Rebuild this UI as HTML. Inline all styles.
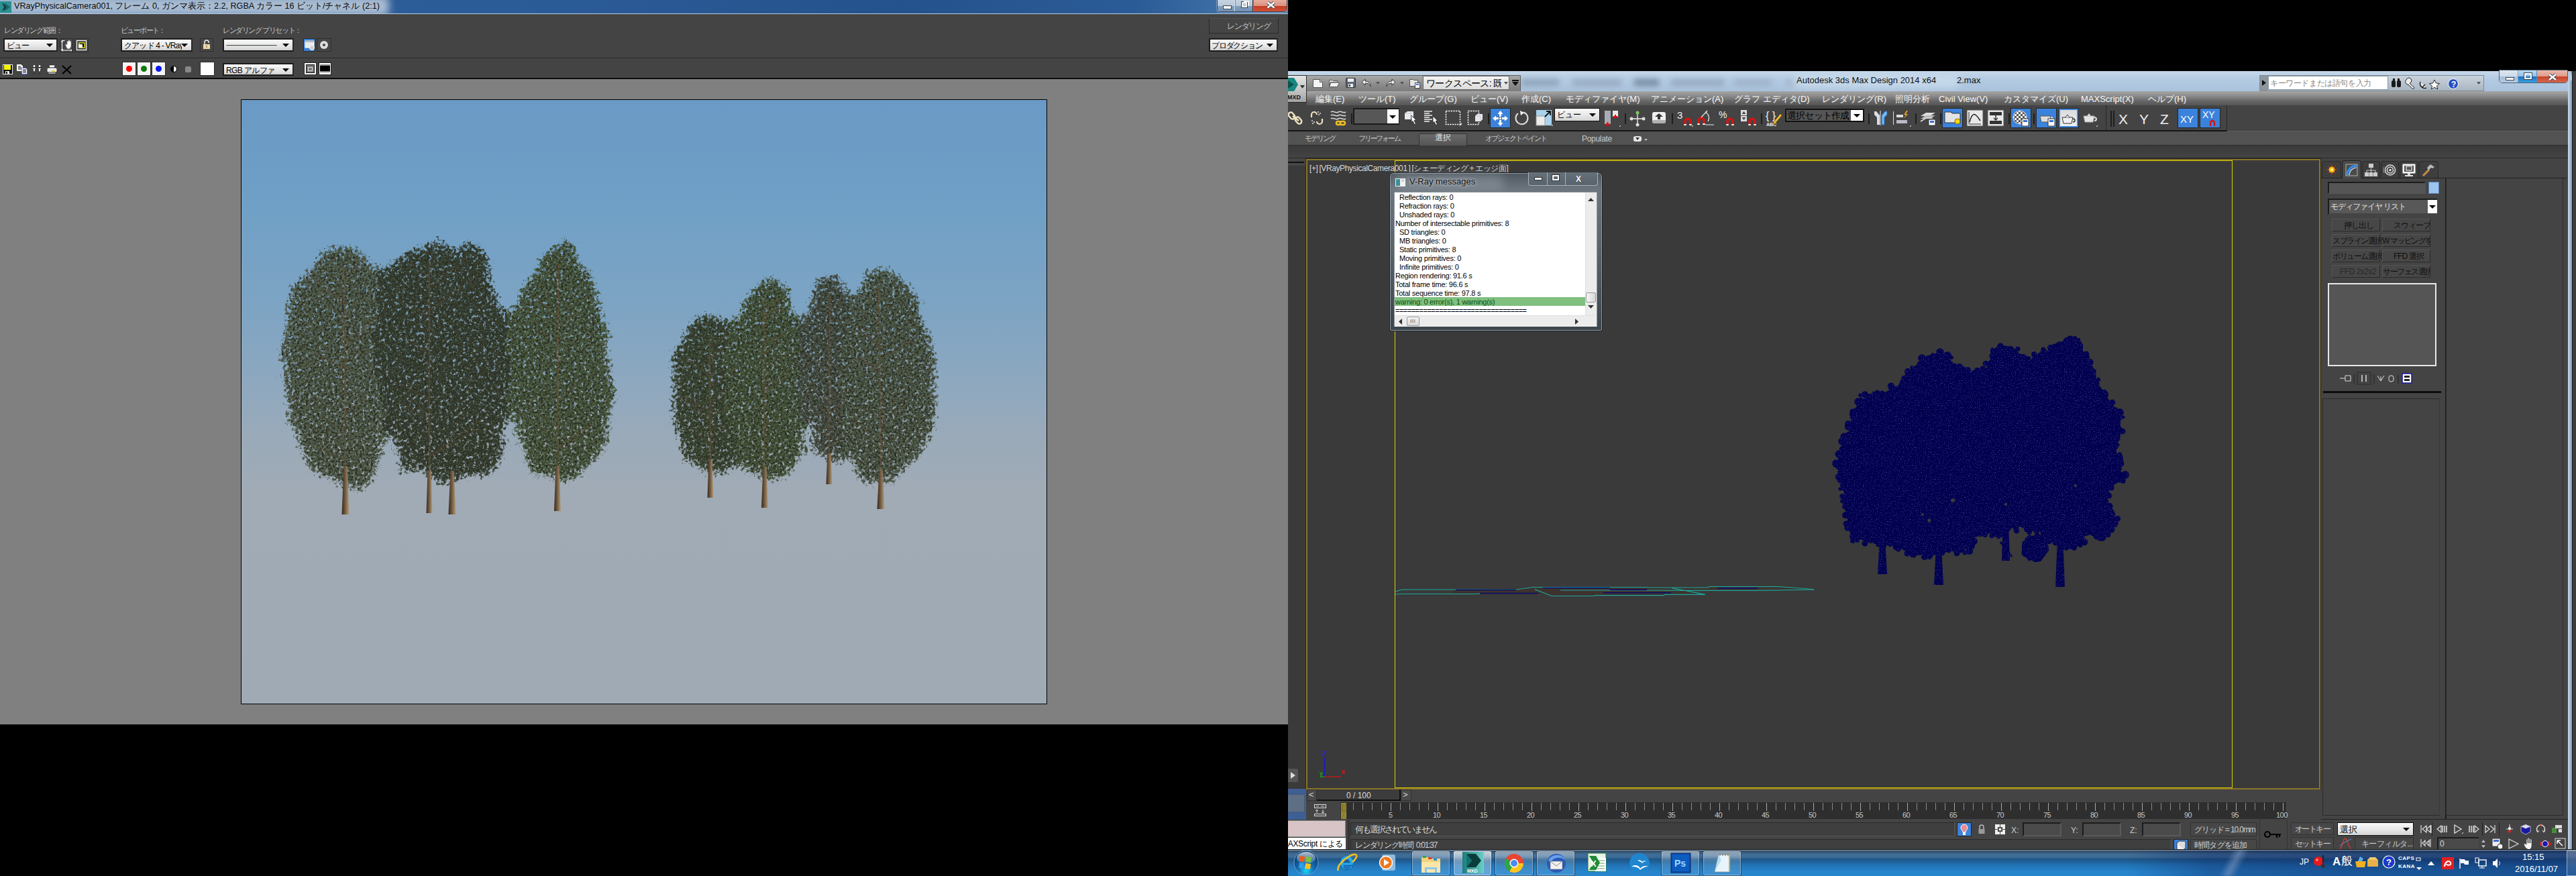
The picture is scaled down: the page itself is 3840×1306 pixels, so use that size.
<!DOCTYPE html>
<html><head><meta charset="utf-8">
<style>
*{margin:0;padding:0;box-sizing:border-box}
html,body{width:3840px;height:1306px;overflow:hidden;background:#000;font-family:"Liberation Sans",sans-serif;}
.a{position:absolute}
.t{position:absolute;white-space:nowrap;line-height:1}
.dd{position:absolute;background:linear-gradient(180deg,#fafafa 0%,#e6e6e6 60%,#d2d2d2 100%);border:2px solid #1c1c1c;border-right-color:#2a2a2a}
.dd i{position:absolute;right:5px;top:50%;margin-top:-2px;width:0;height:0;border-left:5px solid transparent;border-right:5px solid transparent;border-top:5px solid #000}
.btn{position:absolute;border:1px solid #2e2e2e;background:#474747}
svg{position:absolute;overflow:visible}
</style></head><body>
<div class="a" style="left:0;top:0;width:3840px;height:1306px;overflow:hidden">
<!-- ================= LEFT MONITOR : V-Ray frame buffer ================= -->
<div id="L" class="a" style="left:0;top:0;width:1920px;height:1080px;background:#808080;overflow:hidden">
  <!-- title bar -->
  <div class="a" style="left:0;top:0;width:1920px;height:20px;background:linear-gradient(90deg,#2f609b 0%,#2c5c98 40%,#24528d 70%,#2b5b96 88%,#4c7cb0 100%)"></div>
  <div class="a" style="left:-20px;top:-6px;width:600px;height:30px;background:#a9bcd2;filter:blur(6px);border-radius:8px"></div>
  <div class="a" style="left:0;top:20px;width:1920px;height:1px;background:#b9cde0"></div>
  <!-- app icon -->
  <svg style="left:0;top:2px" width="17" height="17" viewBox="0 0 17 17"><rect x="0" y="0" width="17" height="17" fill="#2b8f8f"/><polygon points="3,2 12,8.5 3,15 6,8.5" fill="#0f3e44"/><polygon points="6,2 15,8.5 6,15 9,8.5" fill="#1c5f63"/></svg>
  <div class="t" style="left:21px;top:3px;font-size:12.6px;color:#0a0a0a;letter-spacing:0px">VRayPhysicalCamera001, フレーム 0, ガンマ表示：2.2, RGBA カラー 16 ビット/チャネル (2:1)</div>
  <!-- caption buttons -->
  <div class="a" style="left:1814px;top:-3px;width:105px;height:21px;border:1px solid #2d3e55;border-radius:0 0 5px 5px;overflow:hidden;background:#6d8db3;box-shadow:0 0 0 1px rgba(200,220,240,.5)">
    <div class="a" style="left:0;top:0;width:26px;height:20px;background:linear-gradient(180deg,#c9d6e3 0%,#b7c7d8 55%,#7f9dbd 55%,#7393b6 100%);border-right:1px solid #d8e2ec"></div>
    <div class="a" style="left:27px;top:0;width:26px;height:20px;background:linear-gradient(180deg,#c9d6e3 0%,#b7c7d8 55%,#7f9dbd 55%,#7393b6 100%);border-right:1px solid #3a2a2a"></div>
    <div class="a" style="left:54px;top:0;width:51px;height:20px;background:linear-gradient(180deg,#e9b3a5 0%,#dc8f7c 55%,#c23c22 55%,#d2553a 100%)"></div>
    <div class="a" style="left:8px;top:10px;width:11px;height:4px;background:#f4f4f4;border:1px solid #39475a;box-sizing:content-box"></div>
    <div class="a" style="left:36px;top:5px;width:8px;height:8px;border:2px solid #f4f4f4;outline:1px solid #39475a"></div>
    <div class="a" style="left:39px;top:3px;width:8px;height:8px;border-top:2px solid #f4f4f4;border-right:2px solid #f4f4f4"></div>
    <svg style="left:73px;top:4px" width="13" height="11" viewBox="0 0 13 11"><path d="M1.5 1.5L11.5 9.5M11.5 1.5L1.5 9.5" stroke="#39475a" stroke-width="4.5"/><path d="M1.5 1.5L11.5 9.5M11.5 1.5L1.5 9.5" stroke="#fff" stroke-width="2.6"/></svg>
  </div>

  <!-- toolbar -->
  <div class="a" style="left:0;top:21px;width:1920px;height:95px;background:#444"></div>
  <div class="a" style="left:0;top:86px;width:1920px;height:1px;background:#262626"></div>
  <div class="a" style="left:0;top:87px;width:1920px;height:1px;background:#4a4a4a"></div>
  <div class="a" style="left:0;top:116px;width:1920px;height:2px;background:#0c0c0c"></div>

  <div class="t" style="left:6px;top:40px;font-size:11px;letter-spacing:-1.4px;color:#c4c4c4">レンダリング範囲：</div>
  <div class="t" style="left:180px;top:40px;font-size:11px;letter-spacing:-1.6px;color:#c4c4c4">ビューポート：</div>
  <div class="t" style="left:332px;top:40px;font-size:11px;letter-spacing:-1.4px;color:#c4c4c4">レンダリング プリセット：</div>

  <div class="dd" style="left:5px;top:57px;width:81px;height:20px"><span class="t" style="left:3px;top:3px;font-size:12px;color:#000;letter-spacing:-1px">ビュー</span><i></i></div>
  <div class="btn" style="left:89px;top:57px;width:20px;height:21px"></div>
  <svg style="left:91px;top:59px" width="17" height="17" viewBox="0 0 17 17"><path d="M1.5 2v14M1.5 16H16M0 3.5l1.5-2 1.5 2M0 14.5l1.5 2 1.5-2M2.5 14.5l-1.5 1.5 1.5 1.5M14.5 14.5l1.5 1.5-1.5 1.5M1.5 1.5h4" stroke="#fff" stroke-width="1" fill="none"/><path d="M7 9c-1-2 0-3 1-2l1 1V3a1 1 0 0 1 2 0V1.5a1 1 0 0 1 2 0V3a1 1 0 0 1 2 0v6c0 3-2 5-4 5s-3-2-4-5z" fill="#fff" stroke="#555" stroke-width=".5"/></svg>
  <div class="btn" style="left:111px;top:57px;width:21px;height:21px"></div>
  <svg style="left:113px;top:59px" width="17" height="17" viewBox="0 0 17 17"><rect x="1.5" y="1.5" width="14" height="14" fill="none" stroke="#fff" stroke-width="1.2"/><rect x="5" y="5" width="8" height="7" fill="#000" stroke="#ff0" stroke-width="1.2"/><rect x="4" y="7" width="6" height="5" fill="#fff"/></svg>

  <div class="dd" style="left:180px;top:57px;width:107px;height:20px"><span class="t" style="left:3px;top:3px;font-size:12px;color:#000;letter-spacing:-0.8px;width:86px;overflow:hidden">クアッド 4 - VRayPl</span><i></i></div>
  <div class="btn" style="left:298px;top:57px;width:20px;height:20px"></div>
  <svg style="left:302px;top:59px" width="12" height="15" viewBox="0 0 12 15"><path d="M3 7V4a3 3 0 0 1 6 0v1" stroke="#eee" stroke-width="1.5" fill="none"/><rect x="1" y="7" width="10" height="7" fill="#f0d8a8"/><rect x="5.5" y="9" width="1" height="3" fill="#555"/></svg>

  <div class="dd" style="left:332px;top:57px;width:106px;height:20px"><span class="t" style="left:3px;top:2px;font-size:12px;color:#333;letter-spacing:-1px">-------------------------</span><i></i></div>
  <div class="a" style="left:452px;top:57px;width:18px;height:20px;background:#3b7fd6;border:1px solid #2a2a2a"></div>
  <svg style="left:454px;top:60px" width="16" height="15" viewBox="0 0 16 15"><rect x="1" y="1" width="13" height="10" fill="#eaeaea" stroke="#fff"/><rect x="1" y="1" width="13" height="2" fill="#b8b8b8"/><circle cx="11" cy="11" r="3.5" fill="#ccc" stroke="#fff"/></svg>
  <div class="btn" style="left:472px;top:57px;width:22px;height:20px"></div>
  <svg style="left:476px;top:60px" width="14" height="14" viewBox="0 0 14 14"><circle cx="7" cy="7" r="6" fill="#ddd"/><circle cx="7" cy="7" r="2" fill="#444"/></svg>

  <div class="a" style="left:1802px;top:27px;width:104px;height:23px;background:#454545;border:1px solid #2b2b2b;border-top-color:#555"></div>
  <div class="t" style="left:1829px;top:33px;font-size:12px;letter-spacing:-1.2px;color:#bdbdbd">レンダリング</div>
  <div class="dd" style="left:1802px;top:57px;width:103px;height:20px"><span class="t" style="left:2px;top:3px;font-size:12px;color:#000;letter-spacing:-1.2px">プロダクション</span><i></i></div>

  <!-- row 2 icons -->
  <svg style="left:4px;top:96px" width="15" height="15" viewBox="0 0 15 15"><rect x="0.5" y="0.5" width="14" height="14" fill="#111" stroke="#eee"/><rect x="2" y="1" width="10" height="7" fill="#f4f400"/><rect x="4" y="10" width="6" height="4" fill="#eee"/><rect x="5" y="11" width="2" height="3" fill="#111"/></svg>
  <svg style="left:25px;top:96px" width="16" height="15" viewBox="0 0 16 15"><path d="M0.5 0.5h6l2 2v7h-8z" fill="#fff" stroke="#fff"/><path d="M2 3h4M2 5h5M2 7h5" stroke="#111"/><path d="M7.5 5.5h6l2 2v7h-8z" fill="#fff" stroke="#2030ff" stroke-dasharray="1 1"/><path d="M9 8h5M9 10h5M9 12h5" stroke="#111"/></svg>
  <svg style="left:47px;top:96px" width="16" height="15" viewBox="0 0 16 15"><g fill="#fff" stroke="#111" stroke-width=".7"><circle cx="4" cy="2.5" r="2"/><circle cx="12" cy="2.5" r="2"/><path d="M1 5.5h6v1.5H5.5v7.5h-1v-4h-1v4h-1V7H1z"/><path d="M9 5.5h6v1.5h-1.5v7.5h-1v-4h-1v4h-1V7H9z"/></g></svg>
  <svg style="left:69px;top:96px" width="17" height="15" viewBox="0 0 17 15"><path d="M4 1h9l-1 4H5z" fill="#fff" stroke="#222" stroke-width="0.7"/><rect x="1" y="5" width="15" height="7" rx="2" fill="#eee" stroke="#222" stroke-width="0.8"/><rect x="3" y="12" width="11" height="2" fill="#ddd" stroke="#222" stroke-width="0.6"/><rect x="8" y="9" width="5" height="1.5" fill="#e6d400"/></svg>
  <svg style="left:92px;top:97px" width="15" height="14" viewBox="0 0 15 14"><path d="M1 1L14 13M14 1L1 13" stroke="#000" stroke-width="2"/></svg>

  <div class="a" style="left:182px;top:92px;width:21px;height:21px;background:#f4f4f4;border:1px solid #2c2c2c"></div>
  <div class="a" style="left:188px;top:98px;width:9px;height:9px;border-radius:50%;background:#f00"></div>
  <div class="a" style="left:204px;top:92px;width:21px;height:21px;background:#f4f4f4;border:1px solid #2c2c2c"></div>
  <div class="a" style="left:210px;top:98px;width:9px;height:9px;border-radius:50%;background:#0a7a0a"></div>
  <div class="a" style="left:226px;top:92px;width:21px;height:21px;background:#f4f4f4;border:1px solid #2c2c2c"></div>
  <div class="a" style="left:232px;top:98px;width:9px;height:9px;border-radius:50%;background:#0a18f0"></div>
  <div class="a" style="left:254px;top:98px;width:10px;height:10px;border-radius:50%;background:linear-gradient(90deg,#000 50%,#fff 50%);border:1px solid #000"></div>
  <div class="a" style="left:276px;top:99px;width:9px;height:9px;border-radius:2px;background:#888"></div>
  <div class="a" style="left:298px;top:92px;width:22px;height:21px;background:#fff;border:1px solid #2c2c2c"></div>
  <div class="dd" style="left:332px;top:94px;width:106px;height:19px"><span class="t" style="left:3px;top:3px;font-size:12px;color:#000;letter-spacing:-0.6px">RGB アルファ</span><i></i></div>
  <div class="a" style="left:453px;top:93px;width:19px;height:19px;background:#fff;border:1px solid #222"></div>
  <div class="a" style="left:456px;top:96px;width:13px;height:13px;background:#777;border:1px solid #111"></div>
  <div class="a" style="left:459px;top:100px;width:7px;height:6px;border:1px solid #ddd"></div>
  <div class="a" style="left:475px;top:93px;width:19px;height:19px;background:#fff;border:1px solid #222"></div>
  <div class="a" style="left:477px;top:96px;width:15px;height:12px;background:#000;border-top:2px solid #888;border-bottom:2px solid #888"></div>

  <!-- render image frame -->
  <div class="a" style="left:359px;top:148px;width:1202px;height:902px;background:#000"></div>
  <div class="a" style="left:360px;top:149px;width:1200px;height:900px;background:linear-gradient(180deg,#6a9ac5 0%,#70a0c6 18%,#7ea4c3 35%,#8ea8bf 47%,#9aaab9 56%,#a0abb6 64%,#a0aab5 100%)"></div>
</div>
<div class="a" style="left:0;top:0;width:1920px;height:1080px;overflow:hidden"><svg style="left:0;top:0" width="1920" height="1080" viewBox="0 0 1920 1080">
<defs>
<filter id="cr1" filterUnits="userSpaceOnUse" x="360" y="149" width="1200" height="900" color-interpolation-filters="sRGB"><feGaussianBlur in="SourceAlpha" stdDeviation="10" result="b"/><feTurbulence type="fractalNoise" baseFrequency="0.2" numOctaves="3" seed="4" result="n"/><feColorMatrix in="n" type="matrix" values="0 0 0 0 0  0 0 0 0 0  0 0 0 0 0  1 0 0 0 0" result="na"/><feComposite in="b" in2="na" operator="arithmetic" k1="0" k2="4.6" k3="5" k4="-5.9" result="m"/><feComposite in="SourceGraphic" in2="m" operator="in"/></filter>
<filter id="cr2" filterUnits="userSpaceOnUse" x="360" y="149" width="1200" height="900" color-interpolation-filters="sRGB"><feGaussianBlur in="SourceAlpha" stdDeviation="9" result="b"/><feTurbulence type="fractalNoise" baseFrequency="0.3" numOctaves="2" seed="9" result="n"/><feColorMatrix in="n" type="matrix" values="0 0 0 0 0  0 0 0 0 0  0 0 0 0 0  1 0 0 0 0" result="na"/><feComposite in="b" in2="na" operator="arithmetic" k1="0" k2="3.4" k3="5" k4="-5.7" result="m"/><feFlood flood-color="#2b2f24" result="c"/><feComposite in="c" in2="m" operator="in"/></filter>
<filter id="cr3" filterUnits="userSpaceOnUse" x="360" y="149" width="1200" height="900" color-interpolation-filters="sRGB"><feGaussianBlur in="SourceAlpha" stdDeviation="6" result="b"/><feTurbulence type="fractalNoise" baseFrequency="0.6" numOctaves="2" seed="17" result="n"/><feColorMatrix in="n" type="matrix" values="0 0 0 0 0  0 0 0 0 0  0 0 0 0 0  1 0 0 0 0" result="na"/><feComposite in="b" in2="na" operator="arithmetic" k1="0" k2="3" k3="5" k4="-6.2" result="m"/><feFlood flood-color="#7a8464" result="c"/><feComposite in="c" in2="m" operator="in"/></filter>
<filter id="cr4" filterUnits="userSpaceOnUse" x="360" y="149" width="1200" height="900" color-interpolation-filters="sRGB"><feGaussianBlur in="SourceAlpha" stdDeviation="6" result="b"/><feTurbulence type="fractalNoise" baseFrequency="0.7" numOctaves="1" seed="29" result="n"/><feColorMatrix in="n" type="matrix" values="0 0 0 0 0  0 0 0 0 0  0 0 0 0 0  1 0 0 0 0" result="na"/><feComposite in="b" in2="na" operator="arithmetic" k1="0" k2="3" k3="5" k4="-6.4" result="m"/><feFlood flood-color="#8d9aa6" result="c"/><feComposite in="c" in2="m" operator="in"/></filter>
<linearGradient id="trk" x1="0" x2="1"><stop offset="0" stop-color="#3a2a1c"/><stop offset="0.45" stop-color="#6e5840"/><stop offset="1" stop-color="#b39c7a"/></linearGradient>
</defs>
<defs><g id="crw"><g fill="#4d5745"><path d="M488 380L453 400L426 450L416 500L418 550L423 600L438 650L463 700L483 720L542 726L562 700L574 650L584 600L584 550L582 500L577 450L562 400L537 372z"/><circle cx="527" cy="611" r="16.2"/><circle cx="550" cy="708" r="17.1"/><circle cx="514" cy="397" r="14.0"/><circle cx="442" cy="509" r="12.1"/><circle cx="575" cy="562" r="11.6"/><circle cx="498" cy="550" r="11.9"/><circle cx="451" cy="466" r="16.5"/><circle cx="437" cy="625" r="17.8"/><circle cx="510" cy="397" r="14.4"/><circle cx="579" cy="574" r="11.9"/><circle cx="520" cy="412" r="15.0"/><circle cx="540" cy="667" r="12.0"/><circle cx="481" cy="701" r="11.2"/><circle cx="505" cy="699" r="10.6"/><circle cx="507" cy="429" r="9.3"/><circle cx="569" cy="605" r="11.2"/><circle cx="443" cy="430" r="15.7"/><circle cx="526" cy="495" r="13.6"/><circle cx="518" cy="703" r="11.2"/><circle cx="539" cy="527" r="12.7"/><circle cx="541" cy="392" r="11.6"/><circle cx="464" cy="605" r="9.3"/><circle cx="522" cy="512" r="16.8"/><circle cx="534" cy="424" r="10.4"/><circle cx="522" cy="389" r="10.3"/><circle cx="556" cy="695" r="13.3"/><circle cx="476" cy="690" r="12.3"/><circle cx="497" cy="503" r="16.0"/><circle cx="475" cy="692" r="13.3"/><circle cx="538" cy="580" r="10.3"/><circle cx="535" cy="507" r="10.1"/><circle cx="462" cy="466" r="11.9"/><circle cx="527" cy="710" r="12.8"/><circle cx="457" cy="638" r="16.3"/><circle cx="466" cy="422" r="12.6"/><circle cx="438" cy="599" r="16.1"/><circle cx="483" cy="414" r="11.5"/><circle cx="546" cy="706" r="12.6"/><circle cx="561" cy="592" r="10.6"/><circle cx="538" cy="443" r="15.7"/><circle cx="541" cy="586" r="13.5"/><circle cx="500" cy="392" r="17.4"/><circle cx="517" cy="678" r="12.6"/><circle cx="563" cy="674" r="11.1"/><circle cx="463" cy="586" r="15.7"/><circle cx="565" cy="427" r="15.5"/><circle cx="506" cy="661" r="16.2"/><circle cx="433" cy="575" r="13.9"/><circle cx="505" cy="583" r="11.9"/><circle cx="539" cy="475" r="14.6"/><circle cx="479" cy="439" r="14.5"/><circle cx="525" cy="443" r="9.6"/><circle cx="524" cy="521" r="16.8"/><circle cx="576" cy="594" r="16.3"/><circle cx="529" cy="551" r="17.5"/><circle cx="506" cy="622" r="13.2"/><circle cx="457" cy="682" r="9.6"/><circle cx="468" cy="606" r="9.4"/><circle cx="491" cy="581" r="12.6"/><circle cx="484" cy="654" r="12.6"/><circle cx="523" cy="453" r="17.2"/><circle cx="500" cy="385" r="10.6"/><circle cx="495" cy="586" r="10.9"/><circle cx="539" cy="596" r="14.6"/><circle cx="466" cy="586" r="16.4"/><circle cx="469" cy="542" r="13.5"/><circle cx="533" cy="507" r="13.7"/><circle cx="481" cy="694" r="10.5"/><circle cx="467" cy="682" r="15.4"/><circle cx="519" cy="434" r="13.7"/><circle cx="576" cy="505" r="15.7"/><circle cx="508" cy="723" r="10.5"/><circle cx="516" cy="612" r="12.3"/><circle cx="436" cy="439" r="9.7"/><circle cx="574" cy="554" r="17.5"/><circle cx="485" cy="691" r="13.6"/><circle cx="454" cy="616" r="15.4"/><circle cx="493" cy="511" r="12.6"/><circle cx="529" cy="608" r="15.0"/><circle cx="580" cy="592" r="9.9"/><circle cx="521" cy="448" r="12.2"/><circle cx="463" cy="681" r="12.3"/><circle cx="493" cy="577" r="12.6"/><circle cx="569" cy="531" r="17.9"/><circle cx="468" cy="424" r="17.8"/><circle cx="443" cy="503" r="9.0"/><circle cx="492" cy="574" r="17.2"/><circle cx="499" cy="670" r="11.8"/><circle cx="519" cy="684" r="11.2"/><circle cx="504" cy="664" r="14.3"/><circle cx="452" cy="652" r="14.9"/><circle cx="577" cy="526" r="16.5"/><circle cx="503" cy="605" r="10.4"/><circle cx="500" cy="558" r="13.8"/><circle cx="453" cy="612" r="15.1"/><circle cx="522" cy="426" r="11.6"/><circle cx="520" cy="375" r="16.3"/><circle cx="549" cy="438" r="9.9"/><circle cx="444" cy="500" r="12.2"/><circle cx="549" cy="579" r="11.5"/><circle cx="455" cy="513" r="9.3"/><circle cx="450" cy="499" r="11.3"/><circle cx="493" cy="441" r="17.6"/><circle cx="500" cy="487" r="11.0"/><circle cx="524" cy="630" r="14.5"/><circle cx="482" cy="599" r="9.2"/><circle cx="491" cy="541" r="16.8"/><circle cx="484" cy="379" r="11.5"/><circle cx="521" cy="613" r="14.8"/><circle cx="472" cy="586" r="10.0"/><circle cx="530" cy="446" r="13.2"/><circle cx="448" cy="502" r="17.2"/><circle cx="481" cy="466" r="9.2"/><circle cx="573" cy="637" r="10.6"/><circle cx="457" cy="549" r="12.7"/><circle cx="493" cy="554" r="11.6"/><circle cx="558" cy="644" r="17.6"/><circle cx="479" cy="457" r="14.4"/><circle cx="515" cy="610" r="16.8"/><circle cx="536" cy="724" r="17.2"/><circle cx="537" cy="639" r="17.9"/><circle cx="510" cy="635" r="10.9"/><circle cx="468" cy="503" r="17.9"/><circle cx="518" cy="429" r="15.0"/><circle cx="451" cy="536" r="13.5"/><circle cx="550" cy="447" r="10.7"/><circle cx="434" cy="451" r="13.3"/><circle cx="543" cy="676" r="10.9"/><circle cx="468" cy="491" r="13.0"/><circle cx="462" cy="421" r="11.0"/><circle cx="541" cy="422" r="9.3"/><circle cx="547" cy="679" r="11.7"/><circle cx="560" cy="534" r="13.4"/><circle cx="529" cy="568" r="15.9"/><circle cx="489" cy="382" r="17.2"/><circle cx="510" cy="490" r="12.2"/><circle cx="432" cy="531" r="15.5"/><circle cx="525" cy="463" r="9.9"/><circle cx="452" cy="632" r="13.1"/><circle cx="494" cy="689" r="14.4"/><circle cx="481" cy="672" r="15.7"/><circle cx="556" cy="418" r="15.8"/><circle cx="523" cy="409" r="14.6"/><circle cx="546" cy="554" r="10.2"/><circle cx="568" cy="547" r="9.3"/><circle cx="466" cy="698" r="13.7"/><circle cx="480" cy="670" r="11.6"/><circle cx="540" cy="664" r="9.5"/><circle cx="581" cy="585" r="13.6"/><circle cx="500" cy="454" r="15.3"/><circle cx="491" cy="562" r="13.9"/><circle cx="492" cy="380" r="17.6"/><circle cx="524" cy="514" r="13.0"/><circle cx="496" cy="627" r="14.3"/><circle cx="558" cy="454" r="16.7"/><circle cx="554" cy="671" r="16.0"/><circle cx="457" cy="637" r="12.1"/><circle cx="523" cy="377" r="11.4"/><circle cx="494" cy="478" r="17.7"/><circle cx="452" cy="443" r="9.1"/><circle cx="463" cy="426" r="14.0"/><circle cx="445" cy="600" r="14.7"/><circle cx="472" cy="416" r="15.3"/><circle cx="496" cy="378" r="16.0"/><circle cx="491" cy="573" r="11.2"/><circle cx="531" cy="651" r="17.4"/><circle cx="565" cy="660" r="12.6"/><circle cx="554" cy="657" r="15.2"/><circle cx="427" cy="520" r="14.2"/><circle cx="497" cy="515" r="16.3"/><circle cx="530" cy="385" r="14.8"/><circle cx="465" cy="463" r="13.2"/><circle cx="492" cy="664" r="11.6"/><circle cx="569" cy="546" r="11.4"/><circle cx="514" cy="476" r="10.0"/><circle cx="444" cy="544" r="16.4"/><circle cx="489" cy="627" r="11.8"/><circle cx="561" cy="467" r="15.1"/><circle cx="535" cy="389" r="15.7"/><circle cx="579" cy="553" r="10.0"/><circle cx="533" cy="449" r="16.9"/><circle cx="518" cy="389" r="14.6"/><circle cx="424" cy="526" r="15.9"/><circle cx="454" cy="550" r="10.5"/><circle cx="444" cy="431" r="17.7"/><circle cx="566" cy="646" r="16.7"/><circle cx="553" cy="460" r="12.2"/><circle cx="556" cy="439" r="15.3"/><circle cx="455" cy="436" r="12.3"/><circle cx="523" cy="502" r="17.1"/><circle cx="530" cy="474" r="15.8"/><circle cx="441" cy="632" r="9.7"/><circle cx="514" cy="627" r="11.7"/><circle cx="534" cy="663" r="16.0"/><circle cx="537" cy="382" r="14.2"/><circle cx="539" cy="447" r="17.9"/><circle cx="429" cy="454" r="10.1"/><circle cx="457" cy="446" r="12.4"/><circle cx="460" cy="602" r="15.0"/><circle cx="489" cy="431" r="17.1"/><circle cx="514" cy="701" r="15.9"/><circle cx="529" cy="389" r="15.4"/><circle cx="500" cy="431" r="10.0"/><circle cx="475" cy="398" r="11.9"/><circle cx="561" cy="578" r="14.9"/><circle cx="568" cy="475" r="15.9"/><circle cx="422" cy="568" r="11.5"/><circle cx="559" cy="517" r="16.1"/><circle cx="560" cy="536" r="17.2"/><circle cx="505" cy="466" r="12.1"/><circle cx="458" cy="603" r="14.7"/><circle cx="543" cy="429" r="9.8"/><circle cx="448" cy="429" r="17.7"/><circle cx="507" cy="651" r="15.2"/><circle cx="495" cy="387" r="9.3"/><circle cx="447" cy="614" r="11.1"/><circle cx="516" cy="486" r="15.5"/><circle cx="536" cy="442" r="10.6"/><circle cx="537" cy="518" r="11.9"/><circle cx="467" cy="508" r="16.2"/><circle cx="493" cy="700" r="9.4"/><circle cx="540" cy="453" r="16.4"/><circle cx="518" cy="439" r="17.6"/><circle cx="533" cy="691" r="13.2"/><circle cx="533" cy="703" r="10.7"/><circle cx="480" cy="527" r="9.5"/><circle cx="509" cy="544" r="17.1"/><circle cx="541" cy="692" r="17.4"/><circle cx="464" cy="694" r="14.5"/><circle cx="508" cy="643" r="17.9"/><circle cx="563" cy="628" r="9.0"/><circle cx="557" cy="681" r="17.9"/><circle cx="560" cy="404" r="12.7"/><circle cx="508" cy="678" r="16.1"/><circle cx="522" cy="466" r="14.1"/><circle cx="543" cy="716" r="11.7"/><circle cx="523" cy="422" r="17.3"/><circle cx="485" cy="570" r="15.9"/><circle cx="507" cy="636" r="12.3"/><circle cx="549" cy="695" r="14.8"/><circle cx="503" cy="535" r="13.3"/><circle cx="469" cy="458" r="14.0"/><circle cx="477" cy="441" r="14.1"/><circle cx="490" cy="581" r="13.4"/><circle cx="554" cy="453" r="17.1"/><circle cx="508" cy="444" r="10.6"/><circle cx="548" cy="712" r="10.5"/><circle cx="500" cy="438" r="16.5"/><circle cx="503" cy="583" r="11.4"/><circle cx="540" cy="403" r="14.4"/><circle cx="518" cy="694" r="16.6"/><circle cx="480" cy="394" r="17.9"/><circle cx="512" cy="376" r="15.9"/><circle cx="524" cy="655" r="14.7"/><circle cx="553" cy="619" r="18.0"/><circle cx="448" cy="512" r="14.6"/><circle cx="566" cy="440" r="15.4"/><circle cx="524" cy="520" r="17.0"/><circle cx="525" cy="464" r="15.5"/><circle cx="538" cy="513" r="11.5"/><circle cx="465" cy="454" r="15.0"/><circle cx="514" cy="712" r="13.8"/><circle cx="562" cy="465" r="10.4"/><circle cx="528" cy="678" r="9.9"/><circle cx="520" cy="693" r="10.5"/><circle cx="565" cy="484" r="13.7"/><circle cx="430" cy="586" r="9.3"/><circle cx="514" cy="610" r="16.4"/><circle cx="487" cy="437" r="17.6"/><circle cx="573" cy="479" r="16.1"/><circle cx="490" cy="424" r="17.4"/><circle cx="552" cy="594" r="10.5"/><circle cx="527" cy="508" r="10.1"/><circle cx="443" cy="600" r="16.5"/><circle cx="545" cy="719" r="9.4"/><circle cx="494" cy="655" r="12.0"/><circle cx="550" cy="631" r="11.5"/><circle cx="539" cy="696" r="9.5"/><circle cx="478" cy="696" r="14.2"/><circle cx="558" cy="555" r="9.8"/><circle cx="492" cy="534" r="12.7"/><circle cx="520" cy="542" r="11.5"/><circle cx="546" cy="392" r="11.2"/><circle cx="515" cy="645" r="15.7"/><circle cx="512" cy="457" r="11.4"/><circle cx="573" cy="570" r="11.1"/><circle cx="560" cy="633" r="12.9"/><circle cx="541" cy="687" r="16.9"/><circle cx="467" cy="483" r="16.6"/><circle cx="452" cy="664" r="15.2"/><circle cx="438" cy="595" r="17.8"/><circle cx="524" cy="414" r="13.5"/><circle cx="488" cy="485" r="16.6"/><circle cx="431" cy="510" r="13.7"/><circle cx="539" cy="673" r="10.6"/><circle cx="498" cy="399" r="12.3"/></g><g fill="#343c2e"><path d="M628 372L573 400L566 450L564 500L568 550L573 600L583 650L598 700L633 710L722 716L742 700L754 650L757 600L762 550L757 500L742 450L737 400L707 364z"/><circle cx="709" cy="376" r="13.4"/><circle cx="654" cy="500" r="17.5"/><circle cx="729" cy="630" r="9.7"/><circle cx="630" cy="651" r="15.2"/><circle cx="573" cy="476" r="10.7"/><circle cx="680" cy="702" r="17.1"/><circle cx="614" cy="655" r="13.6"/><circle cx="577" cy="581" r="11.0"/><circle cx="677" cy="393" r="12.9"/><circle cx="639" cy="395" r="13.7"/><circle cx="584" cy="531" r="17.2"/><circle cx="654" cy="705" r="15.6"/><circle cx="570" cy="552" r="12.0"/><circle cx="690" cy="645" r="15.4"/><circle cx="567" cy="503" r="14.2"/><circle cx="701" cy="369" r="17.8"/><circle cx="704" cy="389" r="10.6"/><circle cx="667" cy="413" r="17.2"/><circle cx="725" cy="532" r="14.7"/><circle cx="651" cy="435" r="12.3"/><circle cx="679" cy="382" r="10.3"/><circle cx="618" cy="464" r="15.0"/><circle cx="728" cy="491" r="12.3"/><circle cx="731" cy="575" r="16.9"/><circle cx="715" cy="671" r="9.3"/><circle cx="661" cy="450" r="11.3"/><circle cx="685" cy="659" r="11.0"/><circle cx="703" cy="483" r="14.0"/><circle cx="657" cy="381" r="9.3"/><circle cx="730" cy="538" r="12.8"/><circle cx="645" cy="418" r="17.7"/><circle cx="671" cy="605" r="11.1"/><circle cx="661" cy="713" r="13.9"/><circle cx="655" cy="406" r="14.0"/><circle cx="589" cy="476" r="12.8"/><circle cx="640" cy="680" r="11.4"/><circle cx="640" cy="654" r="10.7"/><circle cx="652" cy="527" r="14.7"/><circle cx="660" cy="710" r="16.7"/><circle cx="694" cy="653" r="11.0"/><circle cx="612" cy="430" r="14.4"/><circle cx="590" cy="580" r="16.7"/><circle cx="596" cy="424" r="12.2"/><circle cx="623" cy="521" r="14.1"/><circle cx="653" cy="683" r="16.8"/><circle cx="622" cy="475" r="10.8"/><circle cx="582" cy="580" r="11.0"/><circle cx="664" cy="478" r="11.7"/><circle cx="599" cy="478" r="14.7"/><circle cx="658" cy="631" r="12.5"/><circle cx="698" cy="644" r="16.5"/><circle cx="619" cy="619" r="9.3"/><circle cx="750" cy="601" r="12.9"/><circle cx="611" cy="604" r="10.4"/><circle cx="715" cy="520" r="14.1"/><circle cx="582" cy="603" r="12.7"/><circle cx="681" cy="534" r="12.9"/><circle cx="575" cy="413" r="14.9"/><circle cx="688" cy="385" r="15.6"/><circle cx="701" cy="409" r="10.8"/><circle cx="722" cy="687" r="15.8"/><circle cx="648" cy="545" r="11.7"/><circle cx="683" cy="618" r="9.6"/><circle cx="654" cy="634" r="13.9"/><circle cx="629" cy="695" r="9.4"/><circle cx="659" cy="382" r="11.7"/><circle cx="629" cy="607" r="16.6"/><circle cx="646" cy="617" r="13.8"/><circle cx="683" cy="586" r="17.2"/><circle cx="637" cy="377" r="11.0"/><circle cx="737" cy="513" r="9.9"/><circle cx="654" cy="367" r="17.9"/><circle cx="724" cy="704" r="9.1"/><circle cx="632" cy="608" r="10.3"/><circle cx="597" cy="408" r="12.5"/><circle cx="620" cy="385" r="10.3"/><circle cx="719" cy="525" r="14.8"/><circle cx="677" cy="543" r="11.3"/><circle cx="705" cy="420" r="9.3"/><circle cx="699" cy="390" r="9.7"/><circle cx="717" cy="591" r="17.1"/><circle cx="654" cy="440" r="11.1"/><circle cx="638" cy="692" r="10.6"/><circle cx="731" cy="661" r="10.6"/><circle cx="577" cy="417" r="14.5"/><circle cx="634" cy="670" r="16.1"/><circle cx="649" cy="501" r="12.5"/><circle cx="713" cy="420" r="14.7"/><circle cx="718" cy="662" r="9.8"/><circle cx="593" cy="523" r="15.5"/><circle cx="741" cy="563" r="16.6"/><circle cx="608" cy="582" r="11.4"/><circle cx="615" cy="590" r="9.9"/><circle cx="745" cy="590" r="14.6"/><circle cx="677" cy="684" r="15.8"/><circle cx="659" cy="480" r="13.6"/><circle cx="659" cy="714" r="16.5"/><circle cx="602" cy="699" r="16.2"/><circle cx="728" cy="619" r="14.6"/><circle cx="749" cy="524" r="17.2"/><circle cx="739" cy="518" r="17.9"/><circle cx="721" cy="545" r="16.8"/><circle cx="618" cy="433" r="16.2"/><circle cx="631" cy="686" r="10.3"/><circle cx="705" cy="417" r="11.7"/><circle cx="656" cy="429" r="12.5"/><circle cx="615" cy="684" r="15.8"/><circle cx="583" cy="450" r="14.1"/><circle cx="648" cy="402" r="10.5"/><circle cx="710" cy="690" r="14.3"/><circle cx="597" cy="599" r="13.4"/><circle cx="678" cy="378" r="9.4"/><circle cx="575" cy="550" r="17.3"/><circle cx="703" cy="643" r="10.7"/><circle cx="698" cy="466" r="14.4"/><circle cx="713" cy="690" r="15.3"/><circle cx="644" cy="554" r="11.9"/><circle cx="684" cy="548" r="12.4"/><circle cx="651" cy="606" r="17.0"/><circle cx="622" cy="495" r="14.4"/><circle cx="721" cy="708" r="11.9"/><circle cx="644" cy="524" r="15.3"/><circle cx="587" cy="392" r="11.1"/><circle cx="666" cy="649" r="9.7"/><circle cx="743" cy="615" r="14.9"/><circle cx="657" cy="687" r="12.6"/><circle cx="720" cy="655" r="15.0"/><circle cx="593" cy="416" r="17.5"/><circle cx="710" cy="434" r="17.4"/><circle cx="618" cy="582" r="13.5"/><circle cx="589" cy="615" r="9.3"/><circle cx="572" cy="443" r="12.4"/><circle cx="698" cy="666" r="11.9"/><circle cx="612" cy="645" r="16.1"/><circle cx="724" cy="388" r="12.9"/><circle cx="703" cy="368" r="10.4"/><circle cx="725" cy="404" r="13.4"/><circle cx="590" cy="396" r="14.4"/><circle cx="599" cy="522" r="11.5"/><circle cx="706" cy="699" r="11.0"/><circle cx="720" cy="686" r="15.6"/><circle cx="651" cy="471" r="15.7"/><circle cx="668" cy="448" r="9.6"/><circle cx="701" cy="518" r="13.4"/><circle cx="696" cy="531" r="14.0"/><circle cx="678" cy="593" r="14.5"/><circle cx="717" cy="491" r="16.3"/><circle cx="664" cy="656" r="11.4"/><circle cx="664" cy="587" r="14.1"/><circle cx="626" cy="379" r="17.2"/><circle cx="725" cy="573" r="13.8"/><circle cx="661" cy="472" r="12.6"/><circle cx="676" cy="556" r="9.8"/><circle cx="685" cy="501" r="17.0"/><circle cx="723" cy="538" r="12.4"/><circle cx="606" cy="571" r="10.6"/><circle cx="640" cy="497" r="15.7"/><circle cx="635" cy="393" r="14.6"/><circle cx="730" cy="515" r="14.2"/><circle cx="590" cy="426" r="9.5"/><circle cx="759" cy="551" r="9.8"/><circle cx="745" cy="504" r="11.0"/><circle cx="720" cy="638" r="11.2"/><circle cx="617" cy="655" r="9.5"/><circle cx="594" cy="581" r="12.2"/><circle cx="723" cy="677" r="15.3"/><circle cx="724" cy="391" r="13.2"/><circle cx="647" cy="706" r="14.0"/><circle cx="695" cy="427" r="12.4"/><circle cx="693" cy="530" r="9.5"/><circle cx="743" cy="687" r="10.2"/><circle cx="656" cy="464" r="15.7"/><circle cx="734" cy="444" r="15.3"/><circle cx="674" cy="419" r="16.5"/><circle cx="635" cy="598" r="15.8"/><circle cx="733" cy="648" r="12.4"/><circle cx="581" cy="458" r="16.8"/><circle cx="659" cy="673" r="9.5"/><circle cx="602" cy="527" r="17.7"/><circle cx="585" cy="634" r="14.5"/><circle cx="698" cy="428" r="13.7"/><circle cx="668" cy="629" r="17.1"/><circle cx="688" cy="528" r="17.1"/><circle cx="649" cy="415" r="14.6"/><circle cx="594" cy="570" r="15.1"/><circle cx="633" cy="382" r="10.0"/><circle cx="709" cy="619" r="12.1"/><circle cx="701" cy="590" r="16.8"/><circle cx="596" cy="635" r="12.4"/><circle cx="730" cy="634" r="10.1"/><circle cx="744" cy="485" r="16.1"/><circle cx="682" cy="701" r="11.9"/><circle cx="715" cy="686" r="14.7"/><circle cx="606" cy="382" r="14.5"/><circle cx="683" cy="606" r="10.1"/><circle cx="739" cy="485" r="14.7"/><circle cx="707" cy="513" r="16.8"/><circle cx="667" cy="453" r="10.8"/><circle cx="738" cy="624" r="15.8"/><circle cx="613" cy="656" r="10.0"/><circle cx="603" cy="480" r="17.9"/><circle cx="632" cy="689" r="12.2"/><circle cx="637" cy="503" r="11.4"/><circle cx="597" cy="562" r="14.6"/><circle cx="638" cy="574" r="9.9"/><circle cx="735" cy="692" r="16.3"/><circle cx="636" cy="568" r="14.4"/><circle cx="670" cy="442" r="15.5"/><circle cx="698" cy="389" r="11.1"/><circle cx="628" cy="677" r="14.9"/><circle cx="624" cy="640" r="17.0"/><circle cx="682" cy="626" r="15.7"/><circle cx="749" cy="585" r="9.6"/><circle cx="615" cy="669" r="13.0"/><circle cx="613" cy="438" r="16.6"/><circle cx="742" cy="485" r="9.3"/><circle cx="695" cy="444" r="14.6"/><circle cx="624" cy="596" r="12.7"/><circle cx="734" cy="579" r="11.6"/><circle cx="658" cy="630" r="10.3"/><circle cx="739" cy="684" r="10.0"/><circle cx="617" cy="654" r="17.3"/><circle cx="594" cy="632" r="12.7"/><circle cx="680" cy="680" r="9.3"/><circle cx="708" cy="559" r="11.3"/><circle cx="754" cy="533" r="17.7"/><circle cx="660" cy="458" r="17.2"/><circle cx="663" cy="481" r="12.9"/><circle cx="744" cy="628" r="15.3"/><circle cx="712" cy="596" r="11.1"/><circle cx="632" cy="628" r="14.5"/><circle cx="654" cy="456" r="9.0"/><circle cx="590" cy="566" r="17.3"/><circle cx="731" cy="619" r="15.3"/><circle cx="674" cy="636" r="16.0"/><circle cx="617" cy="517" r="12.1"/><circle cx="674" cy="614" r="15.1"/><circle cx="690" cy="411" r="17.9"/><circle cx="710" cy="624" r="13.7"/><circle cx="651" cy="643" r="17.1"/><circle cx="592" cy="570" r="12.0"/><circle cx="640" cy="368" r="11.2"/><circle cx="630" cy="492" r="17.1"/><circle cx="700" cy="642" r="12.4"/><circle cx="631" cy="572" r="17.3"/><circle cx="659" cy="395" r="17.7"/><circle cx="731" cy="579" r="13.7"/><circle cx="707" cy="417" r="11.9"/><circle cx="748" cy="474" r="9.9"/><circle cx="579" cy="478" r="15.1"/><circle cx="642" cy="481" r="17.5"/><circle cx="622" cy="570" r="11.4"/><circle cx="600" cy="616" r="15.8"/><circle cx="595" cy="428" r="13.8"/><circle cx="651" cy="472" r="9.2"/><circle cx="731" cy="639" r="14.6"/><circle cx="653" cy="389" r="15.9"/><circle cx="620" cy="549" r="10.8"/><circle cx="612" cy="692" r="13.6"/><circle cx="627" cy="542" r="10.6"/><circle cx="614" cy="506" r="16.8"/><circle cx="616" cy="615" r="10.1"/><circle cx="642" cy="437" r="12.8"/><circle cx="590" cy="427" r="12.3"/><circle cx="688" cy="394" r="14.2"/><circle cx="629" cy="632" r="16.7"/><circle cx="740" cy="465" r="15.0"/><circle cx="601" cy="609" r="11.9"/><circle cx="656" cy="676" r="13.1"/><circle cx="633" cy="408" r="13.1"/><circle cx="653" cy="483" r="10.3"/><circle cx="641" cy="501" r="16.5"/><circle cx="730" cy="587" r="15.6"/><circle cx="710" cy="506" r="15.9"/><circle cx="747" cy="665" r="14.7"/><circle cx="682" cy="626" r="11.5"/><circle cx="721" cy="391" r="11.7"/><circle cx="628" cy="488" r="15.9"/><circle cx="598" cy="611" r="17.0"/><circle cx="651" cy="460" r="9.7"/><circle cx="708" cy="436" r="13.5"/><circle cx="601" cy="667" r="17.9"/><circle cx="625" cy="656" r="14.3"/><circle cx="634" cy="663" r="16.2"/><circle cx="645" cy="377" r="17.6"/><circle cx="726" cy="443" r="10.2"/><circle cx="674" cy="678" r="10.1"/><circle cx="706" cy="492" r="11.5"/><circle cx="716" cy="423" r="10.0"/><circle cx="738" cy="687" r="12.7"/><circle cx="639" cy="621" r="17.1"/><circle cx="716" cy="640" r="13.2"/><circle cx="656" cy="689" r="9.8"/><circle cx="738" cy="477" r="15.4"/><circle cx="666" cy="707" r="16.3"/><circle cx="582" cy="413" r="17.7"/><circle cx="699" cy="552" r="14.1"/><circle cx="673" cy="709" r="17.5"/><circle cx="685" cy="380" r="11.1"/><circle cx="634" cy="674" r="11.1"/><circle cx="716" cy="394" r="12.4"/><circle cx="579" cy="461" r="14.4"/><circle cx="607" cy="620" r="13.2"/><circle cx="681" cy="567" r="12.6"/><circle cx="734" cy="553" r="11.4"/><circle cx="713" cy="373" r="12.9"/><circle cx="673" cy="510" r="9.2"/><circle cx="747" cy="586" r="14.2"/><circle cx="729" cy="591" r="10.4"/><circle cx="645" cy="390" r="11.3"/><circle cx="646" cy="401" r="17.6"/><circle cx="590" cy="575" r="11.3"/><circle cx="696" cy="373" r="15.6"/><circle cx="624" cy="647" r="17.0"/><circle cx="717" cy="377" r="11.0"/><circle cx="676" cy="686" r="13.4"/><circle cx="647" cy="370" r="14.6"/><circle cx="643" cy="614" r="11.1"/><circle cx="716" cy="668" r="9.7"/><circle cx="685" cy="558" r="11.4"/><circle cx="668" cy="657" r="12.5"/><circle cx="682" cy="630" r="9.1"/><circle cx="618" cy="549" r="10.3"/><circle cx="696" cy="460" r="17.7"/><circle cx="616" cy="660" r="13.7"/><circle cx="606" cy="559" r="14.2"/><circle cx="690" cy="500" r="13.8"/><circle cx="662" cy="443" r="16.2"/><circle cx="728" cy="466" r="13.6"/><circle cx="729" cy="564" r="13.4"/><circle cx="716" cy="451" r="15.6"/><circle cx="702" cy="695" r="15.8"/><circle cx="674" cy="544" r="13.8"/><circle cx="635" cy="496" r="13.2"/><circle cx="640" cy="554" r="17.5"/><circle cx="625" cy="650" r="16.8"/><circle cx="619" cy="487" r="11.2"/><circle cx="656" cy="590" r="13.1"/><circle cx="645" cy="639" r="15.9"/><circle cx="688" cy="392" r="11.4"/><circle cx="704" cy="527" r="10.7"/><circle cx="699" cy="447" r="16.4"/><circle cx="745" cy="537" r="11.8"/><circle cx="678" cy="426" r="12.5"/><circle cx="727" cy="434" r="11.2"/><circle cx="717" cy="506" r="16.8"/><circle cx="708" cy="580" r="16.2"/><circle cx="619" cy="616" r="9.1"/><circle cx="685" cy="706" r="17.2"/><circle cx="696" cy="613" r="16.6"/><circle cx="733" cy="698" r="13.2"/><circle cx="634" cy="547" r="11.1"/><circle cx="678" cy="410" r="14.0"/><circle cx="597" cy="658" r="9.1"/><circle cx="571" cy="527" r="12.5"/><circle cx="641" cy="473" r="17.9"/><circle cx="575" cy="556" r="10.4"/><circle cx="626" cy="676" r="12.2"/><circle cx="611" cy="681" r="17.8"/></g><g fill="#46553a"><path d="M816 375L798 400L773 430L763 500L760 550L763 600L773 650L788 700L808 708L862 714L882 700L912 650L919 600L917 550L907 500L897 430L874 400L852 367z"/><circle cx="838" cy="392" r="16.4"/><circle cx="911" cy="579" r="14.5"/><circle cx="866" cy="472" r="14.1"/><circle cx="775" cy="605" r="17.2"/><circle cx="816" cy="643" r="9.3"/><circle cx="886" cy="489" r="16.2"/><circle cx="864" cy="559" r="14.0"/><circle cx="832" cy="376" r="12.3"/><circle cx="823" cy="384" r="11.8"/><circle cx="824" cy="412" r="10.7"/><circle cx="814" cy="596" r="16.7"/><circle cx="789" cy="640" r="15.4"/><circle cx="793" cy="436" r="16.9"/><circle cx="886" cy="584" r="14.3"/><circle cx="793" cy="636" r="16.4"/><circle cx="865" cy="618" r="17.1"/><circle cx="832" cy="699" r="9.7"/><circle cx="822" cy="703" r="11.7"/><circle cx="826" cy="469" r="12.4"/><circle cx="838" cy="542" r="11.3"/><circle cx="811" cy="690" r="12.1"/><circle cx="866" cy="685" r="15.4"/><circle cx="818" cy="685" r="17.9"/><circle cx="839" cy="367" r="15.6"/><circle cx="876" cy="502" r="17.1"/><circle cx="827" cy="565" r="14.5"/><circle cx="863" cy="431" r="11.6"/><circle cx="861" cy="539" r="13.7"/><circle cx="795" cy="692" r="10.1"/><circle cx="852" cy="634" r="11.0"/><circle cx="859" cy="543" r="15.0"/><circle cx="896" cy="506" r="14.4"/><circle cx="871" cy="659" r="13.1"/><circle cx="773" cy="468" r="17.3"/><circle cx="900" cy="564" r="15.9"/><circle cx="855" cy="555" r="13.6"/><circle cx="861" cy="630" r="12.4"/><circle cx="779" cy="455" r="9.7"/><circle cx="791" cy="429" r="12.7"/><circle cx="826" cy="638" r="15.2"/><circle cx="879" cy="429" r="12.7"/><circle cx="827" cy="657" r="15.2"/><circle cx="821" cy="657" r="13.6"/><circle cx="791" cy="679" r="15.0"/><circle cx="852" cy="391" r="13.3"/><circle cx="784" cy="519" r="13.8"/><circle cx="819" cy="577" r="12.7"/><circle cx="875" cy="440" r="14.3"/><circle cx="847" cy="552" r="14.5"/><circle cx="771" cy="613" r="15.3"/><circle cx="798" cy="702" r="13.4"/><circle cx="823" cy="618" r="15.8"/><circle cx="877" cy="575" r="9.4"/><circle cx="837" cy="601" r="16.3"/><circle cx="786" cy="686" r="12.7"/><circle cx="816" cy="398" r="11.9"/><circle cx="854" cy="447" r="9.8"/><circle cx="823" cy="675" r="17.4"/><circle cx="853" cy="540" r="13.7"/><circle cx="772" cy="620" r="12.9"/><circle cx="860" cy="477" r="9.1"/><circle cx="850" cy="703" r="14.2"/><circle cx="791" cy="564" r="17.8"/><circle cx="833" cy="565" r="12.0"/><circle cx="815" cy="442" r="16.0"/><circle cx="776" cy="460" r="16.7"/><circle cx="854" cy="432" r="17.4"/><circle cx="857" cy="437" r="10.2"/><circle cx="896" cy="656" r="18.0"/><circle cx="884" cy="628" r="9.8"/><circle cx="768" cy="519" r="13.8"/><circle cx="840" cy="372" r="13.7"/><circle cx="782" cy="461" r="17.7"/><circle cx="794" cy="671" r="17.4"/><circle cx="833" cy="655" r="14.5"/><circle cx="897" cy="519" r="13.9"/><circle cx="836" cy="630" r="13.3"/><circle cx="877" cy="428" r="13.9"/><circle cx="833" cy="587" r="14.4"/><circle cx="836" cy="709" r="16.7"/><circle cx="805" cy="597" r="16.3"/><circle cx="881" cy="585" r="11.6"/><circle cx="859" cy="473" r="17.7"/><circle cx="851" cy="550" r="14.1"/><circle cx="829" cy="460" r="9.2"/><circle cx="797" cy="469" r="13.2"/><circle cx="821" cy="439" r="17.8"/><circle cx="781" cy="627" r="10.3"/><circle cx="886" cy="607" r="12.9"/><circle cx="838" cy="374" r="13.5"/><circle cx="798" cy="444" r="15.4"/><circle cx="798" cy="405" r="10.4"/><circle cx="791" cy="507" r="16.1"/><circle cx="798" cy="465" r="12.0"/><circle cx="797" cy="669" r="16.5"/><circle cx="770" cy="596" r="17.2"/><circle cx="809" cy="507" r="9.2"/><circle cx="810" cy="410" r="13.1"/><circle cx="781" cy="622" r="12.4"/><circle cx="876" cy="559" r="13.1"/><circle cx="825" cy="625" r="11.2"/><circle cx="849" cy="617" r="17.7"/><circle cx="830" cy="579" r="12.0"/><circle cx="807" cy="477" r="13.5"/><circle cx="778" cy="479" r="9.3"/><circle cx="895" cy="668" r="12.1"/><circle cx="885" cy="452" r="12.3"/><circle cx="876" cy="521" r="15.1"/><circle cx="765" cy="501" r="10.8"/><circle cx="873" cy="666" r="14.2"/><circle cx="841" cy="708" r="16.8"/><circle cx="835" cy="406" r="14.2"/><circle cx="823" cy="402" r="9.2"/><circle cx="901" cy="496" r="16.9"/><circle cx="873" cy="687" r="11.9"/><circle cx="846" cy="499" r="12.3"/><circle cx="815" cy="381" r="15.1"/><circle cx="774" cy="571" r="15.7"/><circle cx="818" cy="591" r="13.6"/><circle cx="799" cy="638" r="11.8"/><circle cx="882" cy="510" r="12.3"/><circle cx="869" cy="439" r="12.6"/><circle cx="785" cy="528" r="12.0"/><circle cx="873" cy="489" r="13.8"/><circle cx="835" cy="713" r="13.8"/><circle cx="807" cy="630" r="13.2"/><circle cx="801" cy="609" r="16.5"/><circle cx="801" cy="665" r="9.5"/><circle cx="833" cy="498" r="17.1"/><circle cx="830" cy="487" r="11.2"/><circle cx="898" cy="561" r="14.4"/><circle cx="875" cy="410" r="15.4"/><circle cx="885" cy="578" r="15.4"/><circle cx="833" cy="675" r="11.9"/><circle cx="834" cy="659" r="10.4"/><circle cx="829" cy="702" r="12.6"/><circle cx="874" cy="514" r="13.3"/><circle cx="830" cy="405" r="13.1"/><circle cx="818" cy="700" r="16.7"/><circle cx="773" cy="478" r="17.9"/><circle cx="809" cy="609" r="9.1"/><circle cx="861" cy="591" r="15.1"/><circle cx="879" cy="445" r="12.6"/><circle cx="842" cy="463" r="13.8"/><circle cx="874" cy="665" r="16.2"/><circle cx="887" cy="484" r="15.6"/><circle cx="833" cy="393" r="15.5"/><circle cx="877" cy="501" r="14.8"/><circle cx="882" cy="681" r="16.2"/><circle cx="863" cy="666" r="13.6"/><circle cx="793" cy="684" r="14.3"/><circle cx="769" cy="506" r="15.1"/><circle cx="850" cy="406" r="16.6"/><circle cx="838" cy="373" r="16.0"/><circle cx="779" cy="499" r="14.8"/><circle cx="853" cy="416" r="15.2"/><circle cx="794" cy="581" r="12.9"/><circle cx="818" cy="412" r="17.4"/><circle cx="765" cy="512" r="13.6"/><circle cx="781" cy="479" r="10.8"/><circle cx="815" cy="690" r="10.6"/><circle cx="881" cy="461" r="16.1"/><circle cx="855" cy="588" r="14.7"/><circle cx="853" cy="377" r="15.0"/><circle cx="799" cy="673" r="17.2"/><circle cx="806" cy="615" r="17.9"/><circle cx="803" cy="467" r="17.8"/><circle cx="817" cy="420" r="15.1"/><circle cx="798" cy="583" r="11.3"/><circle cx="865" cy="571" r="12.9"/><circle cx="793" cy="560" r="11.2"/><circle cx="850" cy="395" r="9.7"/><circle cx="769" cy="482" r="9.0"/><circle cx="806" cy="664" r="14.6"/><circle cx="783" cy="641" r="17.0"/><circle cx="867" cy="431" r="15.1"/><circle cx="814" cy="459" r="13.3"/><circle cx="845" cy="500" r="16.5"/><circle cx="901" cy="587" r="17.2"/><circle cx="821" cy="600" r="9.3"/><circle cx="798" cy="704" r="13.3"/><circle cx="875" cy="600" r="14.0"/><circle cx="820" cy="560" r="11.5"/><circle cx="836" cy="413" r="12.8"/><circle cx="848" cy="413" r="9.5"/><circle cx="835" cy="588" r="16.0"/><circle cx="822" cy="397" r="13.7"/><circle cx="872" cy="681" r="11.0"/><circle cx="855" cy="590" r="11.7"/><circle cx="848" cy="390" r="11.4"/><circle cx="854" cy="381" r="14.0"/><circle cx="862" cy="701" r="15.9"/><circle cx="803" cy="477" r="12.2"/><circle cx="807" cy="389" r="9.8"/><circle cx="820" cy="443" r="12.0"/><circle cx="818" cy="534" r="16.5"/><circle cx="830" cy="530" r="16.2"/><circle cx="897" cy="618" r="17.7"/><circle cx="888" cy="464" r="16.6"/><circle cx="864" cy="448" r="10.3"/><circle cx="915" cy="597" r="10.9"/><circle cx="837" cy="528" r="17.8"/><circle cx="888" cy="617" r="10.2"/><circle cx="825" cy="520" r="11.0"/><circle cx="879" cy="596" r="17.0"/><circle cx="825" cy="685" r="15.8"/><circle cx="828" cy="427" r="17.2"/><circle cx="861" cy="699" r="15.1"/><circle cx="837" cy="570" r="10.8"/><circle cx="821" cy="597" r="10.0"/><circle cx="774" cy="644" r="10.9"/><circle cx="808" cy="444" r="12.9"/><circle cx="828" cy="549" r="11.4"/><circle cx="862" cy="686" r="16.5"/><circle cx="880" cy="520" r="14.0"/><circle cx="790" cy="439" r="12.2"/><circle cx="862" cy="525" r="11.8"/><circle cx="845" cy="493" r="14.9"/><circle cx="827" cy="572" r="12.9"/><circle cx="820" cy="410" r="14.8"/><circle cx="825" cy="466" r="17.1"/><circle cx="828" cy="404" r="14.6"/><circle cx="835" cy="501" r="14.4"/><circle cx="873" cy="678" r="11.7"/><circle cx="779" cy="660" r="11.3"/><circle cx="873" cy="421" r="13.8"/><circle cx="850" cy="529" r="11.2"/><circle cx="850" cy="641" r="17.3"/><circle cx="835" cy="434" r="14.0"/><circle cx="883" cy="440" r="9.9"/><circle cx="843" cy="465" r="16.8"/><circle cx="847" cy="368" r="17.1"/><circle cx="782" cy="430" r="15.2"/><circle cx="852" cy="677" r="10.3"/><circle cx="896" cy="627" r="14.3"/><circle cx="852" cy="429" r="17.8"/><circle cx="811" cy="406" r="9.3"/><circle cx="803" cy="408" r="12.5"/><circle cx="860" cy="469" r="16.7"/><circle cx="780" cy="465" r="10.1"/><circle cx="785" cy="475" r="9.6"/><circle cx="854" cy="712" r="11.9"/><circle cx="809" cy="386" r="10.4"/><circle cx="890" cy="552" r="16.9"/><circle cx="820" cy="494" r="16.2"/><circle cx="812" cy="548" r="11.6"/><circle cx="794" cy="589" r="12.5"/><circle cx="818" cy="484" r="9.4"/><circle cx="814" cy="686" r="14.0"/><circle cx="785" cy="531" r="13.8"/><circle cx="778" cy="556" r="11.4"/><circle cx="862" cy="446" r="12.1"/><circle cx="839" cy="384" r="13.4"/><circle cx="877" cy="661" r="10.3"/><circle cx="859" cy="484" r="10.1"/><circle cx="807" cy="614" r="17.9"/><circle cx="846" cy="611" r="17.5"/><circle cx="809" cy="607" r="10.1"/><circle cx="780" cy="504" r="10.7"/><circle cx="836" cy="495" r="14.8"/><circle cx="876" cy="547" r="13.6"/><circle cx="784" cy="623" r="12.0"/><circle cx="828" cy="415" r="12.2"/><circle cx="798" cy="609" r="9.9"/><circle cx="809" cy="625" r="16.7"/><circle cx="802" cy="560" r="14.0"/><circle cx="906" cy="539" r="9.5"/><circle cx="882" cy="452" r="17.2"/><circle cx="805" cy="509" r="10.5"/><circle cx="812" cy="689" r="9.5"/></g><g fill="#38432f"><path d="M1038 483L1013 500L998 550L996 600L1003 650L1023 690L1043 698L1077 704L1092 690L1107 650L1111 600L1107 550L1097 500L1077 475z"/><circle cx="1058" cy="623" r="16.4"/><circle cx="1026" cy="631" r="16.1"/><circle cx="1045" cy="478" r="15.4"/><circle cx="1088" cy="502" r="10.0"/><circle cx="1074" cy="677" r="13.3"/><circle cx="1065" cy="541" r="10.1"/><circle cx="1076" cy="538" r="9.5"/><circle cx="1047" cy="476" r="14.9"/><circle cx="1078" cy="540" r="12.2"/><circle cx="1034" cy="622" r="9.7"/><circle cx="1047" cy="599" r="17.6"/><circle cx="1078" cy="661" r="16.4"/><circle cx="1082" cy="532" r="10.3"/><circle cx="1046" cy="526" r="13.4"/><circle cx="1026" cy="615" r="17.5"/><circle cx="1039" cy="492" r="16.0"/><circle cx="1094" cy="603" r="11.4"/><circle cx="1039" cy="620" r="16.4"/><circle cx="1026" cy="521" r="15.0"/><circle cx="1075" cy="490" r="17.9"/><circle cx="1024" cy="497" r="12.7"/><circle cx="1073" cy="489" r="14.4"/><circle cx="1053" cy="695" r="17.1"/><circle cx="1056" cy="482" r="15.0"/><circle cx="1027" cy="503" r="11.1"/><circle cx="1090" cy="689" r="11.9"/><circle cx="1083" cy="606" r="15.5"/><circle cx="1091" cy="527" r="16.6"/><circle cx="1038" cy="496" r="11.8"/><circle cx="1092" cy="613" r="16.1"/><circle cx="1068" cy="585" r="17.9"/><circle cx="1067" cy="641" r="13.0"/><circle cx="1055" cy="610" r="16.2"/><circle cx="1037" cy="550" r="11.5"/><circle cx="1100" cy="537" r="14.0"/><circle cx="1056" cy="702" r="11.4"/><circle cx="1006" cy="605" r="12.1"/><circle cx="1050" cy="523" r="16.8"/><circle cx="1043" cy="486" r="14.4"/><circle cx="1024" cy="680" r="15.6"/><circle cx="1031" cy="547" r="9.8"/><circle cx="1089" cy="658" r="16.5"/><circle cx="1061" cy="582" r="14.2"/><circle cx="1023" cy="537" r="17.6"/><circle cx="1077" cy="689" r="10.9"/><circle cx="1086" cy="586" r="9.4"/><circle cx="1111" cy="605" r="10.0"/><circle cx="1024" cy="672" r="14.7"/><circle cx="1094" cy="676" r="9.4"/><circle cx="1094" cy="652" r="16.1"/><circle cx="1047" cy="623" r="12.4"/><circle cx="1072" cy="567" r="13.6"/><circle cx="1082" cy="622" r="13.4"/><circle cx="1047" cy="480" r="17.2"/><circle cx="1052" cy="545" r="15.6"/><circle cx="1076" cy="557" r="9.8"/><circle cx="1043" cy="583" r="11.8"/><circle cx="1067" cy="606" r="17.7"/><circle cx="1029" cy="549" r="10.1"/><circle cx="1077" cy="517" r="10.7"/><circle cx="1016" cy="562" r="11.9"/><circle cx="1074" cy="643" r="17.1"/><circle cx="1016" cy="534" r="13.1"/><circle cx="1053" cy="541" r="10.1"/><circle cx="1081" cy="630" r="13.7"/><circle cx="1051" cy="671" r="16.0"/><circle cx="1074" cy="621" r="14.4"/><circle cx="1051" cy="651" r="16.5"/><circle cx="1088" cy="656" r="13.1"/><circle cx="1015" cy="577" r="16.7"/><circle cx="1089" cy="692" r="9.5"/><circle cx="1034" cy="647" r="9.9"/><circle cx="1027" cy="537" r="12.9"/><circle cx="1074" cy="514" r="13.7"/><circle cx="1003" cy="554" r="9.6"/><circle cx="1064" cy="478" r="17.8"/><circle cx="1010" cy="529" r="17.1"/><circle cx="1038" cy="692" r="9.2"/><circle cx="1039" cy="491" r="15.9"/><circle cx="1062" cy="566" r="12.4"/><circle cx="1024" cy="662" r="14.3"/><circle cx="1053" cy="489" r="15.1"/><circle cx="1025" cy="589" r="10.0"/><circle cx="1047" cy="684" r="17.7"/><circle cx="1083" cy="572" r="17.0"/><circle cx="1031" cy="550" r="15.4"/><circle cx="1045" cy="505" r="17.2"/><circle cx="1060" cy="695" r="16.9"/><circle cx="1057" cy="685" r="12.8"/><circle cx="1048" cy="511" r="9.1"/><circle cx="1054" cy="507" r="12.4"/><circle cx="1082" cy="555" r="15.8"/><circle cx="1106" cy="585" r="13.9"/><circle cx="1077" cy="590" r="13.1"/><circle cx="1041" cy="483" r="11.4"/><circle cx="1084" cy="592" r="9.2"/><circle cx="1096" cy="650" r="13.2"/><circle cx="1009" cy="586" r="12.4"/><circle cx="1076" cy="568" r="12.2"/><circle cx="1058" cy="665" r="10.0"/><circle cx="1048" cy="596" r="12.5"/><circle cx="1054" cy="696" r="12.6"/><circle cx="1066" cy="604" r="17.1"/><circle cx="1071" cy="700" r="12.3"/><circle cx="1096" cy="664" r="17.2"/><circle cx="1057" cy="597" r="11.5"/><circle cx="1077" cy="623" r="9.9"/><circle cx="1034" cy="642" r="11.4"/><circle cx="1099" cy="634" r="9.0"/><circle cx="1060" cy="643" r="13.7"/><circle cx="1027" cy="549" r="16.3"/><circle cx="1004" cy="632" r="9.1"/><circle cx="1026" cy="686" r="9.0"/><circle cx="1019" cy="647" r="13.8"/><circle cx="1052" cy="673" r="10.0"/><circle cx="1073" cy="627" r="16.3"/><circle cx="1024" cy="590" r="10.1"/><circle cx="1031" cy="602" r="13.6"/><circle cx="1075" cy="700" r="15.8"/><circle cx="1093" cy="526" r="17.5"/><circle cx="1103" cy="597" r="17.4"/><circle cx="1037" cy="688" r="11.1"/><circle cx="1038" cy="487" r="17.0"/><circle cx="1085" cy="591" r="9.2"/><circle cx="1039" cy="674" r="17.2"/><circle cx="1057" cy="519" r="15.3"/><circle cx="1046" cy="503" r="14.5"/><circle cx="1042" cy="638" r="15.5"/><circle cx="1094" cy="519" r="9.3"/><circle cx="1063" cy="476" r="14.5"/><circle cx="1087" cy="691" r="14.9"/><circle cx="1059" cy="697" r="14.7"/><circle cx="1026" cy="493" r="12.1"/><circle cx="1100" cy="603" r="12.4"/><circle cx="1030" cy="677" r="13.8"/><circle cx="1093" cy="596" r="16.1"/><circle cx="1075" cy="533" r="9.2"/></g><g fill="#435236"><path d="M1136 428L1108 450L1088 500L1083 550L1086 600L1093 650L1113 700L1128 707L1162 713L1187 700L1202 650L1205 600L1202 550L1197 500L1182 450L1172 420z"/><circle cx="1191" cy="673" r="13.4"/><circle cx="1142" cy="658" r="10.3"/><circle cx="1123" cy="476" r="10.5"/><circle cx="1179" cy="586" r="17.9"/><circle cx="1133" cy="525" r="12.6"/><circle cx="1133" cy="501" r="15.3"/><circle cx="1111" cy="538" r="11.4"/><circle cx="1178" cy="704" r="9.2"/><circle cx="1167" cy="623" r="14.4"/><circle cx="1098" cy="634" r="11.2"/><circle cx="1163" cy="704" r="14.2"/><circle cx="1111" cy="680" r="11.1"/><circle cx="1146" cy="678" r="15.2"/><circle cx="1114" cy="450" r="16.1"/><circle cx="1135" cy="650" r="17.5"/><circle cx="1101" cy="515" r="16.2"/><circle cx="1123" cy="492" r="16.7"/><circle cx="1167" cy="606" r="14.3"/><circle cx="1131" cy="484" r="11.8"/><circle cx="1163" cy="698" r="10.3"/><circle cx="1112" cy="649" r="17.8"/><circle cx="1167" cy="455" r="14.1"/><circle cx="1140" cy="607" r="15.4"/><circle cx="1161" cy="677" r="13.5"/><circle cx="1134" cy="431" r="14.8"/><circle cx="1123" cy="473" r="17.4"/><circle cx="1122" cy="684" r="17.1"/><circle cx="1096" cy="604" r="9.3"/><circle cx="1166" cy="619" r="9.1"/><circle cx="1187" cy="686" r="11.2"/><circle cx="1118" cy="612" r="9.2"/><circle cx="1136" cy="500" r="11.0"/><circle cx="1162" cy="457" r="14.8"/><circle cx="1157" cy="536" r="9.8"/><circle cx="1168" cy="519" r="11.6"/><circle cx="1174" cy="627" r="9.8"/><circle cx="1135" cy="688" r="14.6"/><circle cx="1138" cy="493" r="12.5"/><circle cx="1103" cy="584" r="17.2"/><circle cx="1154" cy="589" r="14.7"/><circle cx="1142" cy="616" r="17.2"/><circle cx="1151" cy="423" r="13.8"/><circle cx="1142" cy="442" r="16.4"/><circle cx="1154" cy="421" r="14.4"/><circle cx="1125" cy="505" r="15.0"/><circle cx="1143" cy="687" r="11.1"/><circle cx="1153" cy="571" r="12.6"/><circle cx="1130" cy="603" r="16.3"/><circle cx="1141" cy="650" r="12.4"/><circle cx="1161" cy="430" r="12.8"/><circle cx="1188" cy="659" r="13.6"/><circle cx="1142" cy="595" r="13.4"/><circle cx="1113" cy="609" r="12.0"/><circle cx="1182" cy="655" r="10.3"/><circle cx="1171" cy="616" r="17.0"/><circle cx="1147" cy="496" r="14.7"/><circle cx="1142" cy="616" r="15.5"/><circle cx="1119" cy="575" r="11.5"/><circle cx="1162" cy="432" r="12.8"/><circle cx="1133" cy="663" r="14.9"/><circle cx="1171" cy="437" r="16.4"/><circle cx="1095" cy="612" r="16.4"/><circle cx="1138" cy="669" r="14.4"/><circle cx="1197" cy="629" r="9.3"/><circle cx="1136" cy="428" r="16.2"/><circle cx="1149" cy="703" r="17.5"/><circle cx="1116" cy="643" r="12.7"/><circle cx="1165" cy="625" r="13.3"/><circle cx="1132" cy="562" r="17.3"/><circle cx="1162" cy="490" r="16.2"/><circle cx="1112" cy="574" r="9.3"/><circle cx="1182" cy="483" r="17.7"/><circle cx="1123" cy="481" r="12.5"/><circle cx="1125" cy="458" r="16.9"/><circle cx="1147" cy="643" r="13.2"/><circle cx="1118" cy="667" r="12.8"/><circle cx="1110" cy="519" r="17.0"/><circle cx="1108" cy="478" r="11.0"/><circle cx="1131" cy="628" r="10.4"/><circle cx="1118" cy="495" r="12.3"/><circle cx="1173" cy="705" r="11.8"/><circle cx="1165" cy="544" r="16.1"/><circle cx="1137" cy="423" r="11.0"/><circle cx="1176" cy="685" r="13.6"/><circle cx="1103" cy="497" r="16.6"/><circle cx="1173" cy="567" r="15.2"/><circle cx="1170" cy="530" r="11.8"/><circle cx="1115" cy="699" r="11.9"/><circle cx="1130" cy="478" r="14.0"/><circle cx="1115" cy="538" r="10.5"/><circle cx="1115" cy="598" r="13.0"/><circle cx="1156" cy="424" r="12.8"/><circle cx="1158" cy="499" r="15.4"/><circle cx="1132" cy="459" r="12.7"/><circle cx="1127" cy="592" r="17.8"/><circle cx="1169" cy="432" r="13.9"/><circle cx="1140" cy="445" r="9.2"/><circle cx="1135" cy="675" r="15.2"/><circle cx="1113" cy="688" r="12.6"/><circle cx="1091" cy="522" r="9.6"/><circle cx="1135" cy="516" r="12.9"/><circle cx="1166" cy="699" r="13.6"/><circle cx="1146" cy="425" r="17.1"/><circle cx="1152" cy="629" r="10.1"/><circle cx="1137" cy="466" r="16.5"/><circle cx="1134" cy="702" r="16.4"/><circle cx="1124" cy="498" r="15.9"/><circle cx="1179" cy="491" r="9.2"/><circle cx="1202" cy="620" r="11.3"/><circle cx="1131" cy="483" r="11.3"/><circle cx="1120" cy="471" r="9.1"/><circle cx="1145" cy="679" r="10.7"/><circle cx="1153" cy="657" r="9.5"/><circle cx="1184" cy="652" r="9.9"/><circle cx="1194" cy="612" r="12.3"/><circle cx="1182" cy="603" r="17.1"/><circle cx="1093" cy="502" r="10.4"/><circle cx="1166" cy="457" r="9.8"/><circle cx="1101" cy="480" r="14.9"/><circle cx="1117" cy="463" r="9.9"/><circle cx="1110" cy="562" r="13.4"/><circle cx="1125" cy="697" r="16.5"/><circle cx="1170" cy="604" r="12.4"/><circle cx="1113" cy="480" r="11.6"/><circle cx="1133" cy="589" r="12.8"/><circle cx="1114" cy="668" r="17.1"/><circle cx="1135" cy="446" r="14.3"/><circle cx="1164" cy="464" r="14.6"/><circle cx="1105" cy="517" r="16.1"/><circle cx="1155" cy="672" r="14.4"/><circle cx="1132" cy="630" r="14.1"/><circle cx="1153" cy="484" r="14.3"/><circle cx="1147" cy="661" r="11.7"/><circle cx="1163" cy="475" r="13.7"/><circle cx="1177" cy="500" r="10.6"/><circle cx="1153" cy="515" r="12.1"/><circle cx="1161" cy="662" r="16.6"/><circle cx="1131" cy="674" r="9.8"/><circle cx="1127" cy="652" r="12.3"/><circle cx="1138" cy="710" r="12.2"/><circle cx="1134" cy="435" r="13.2"/><circle cx="1147" cy="707" r="17.0"/><circle cx="1194" cy="558" r="11.1"/><circle cx="1139" cy="421" r="9.1"/><circle cx="1178" cy="492" r="11.0"/><circle cx="1155" cy="483" r="15.1"/><circle cx="1194" cy="632" r="9.1"/><circle cx="1174" cy="559" r="9.8"/><circle cx="1172" cy="615" r="12.1"/><circle cx="1138" cy="550" r="13.7"/><circle cx="1133" cy="651" r="16.4"/><circle cx="1164" cy="686" r="16.4"/><circle cx="1156" cy="625" r="12.9"/><circle cx="1141" cy="651" r="15.6"/><circle cx="1145" cy="426" r="13.9"/><circle cx="1138" cy="517" r="12.2"/><circle cx="1170" cy="571" r="16.2"/><circle cx="1119" cy="536" r="17.0"/><circle cx="1137" cy="607" r="15.3"/><circle cx="1169" cy="630" r="17.3"/><circle cx="1167" cy="545" r="10.0"/><circle cx="1093" cy="596" r="13.8"/><circle cx="1130" cy="430" r="10.0"/><circle cx="1160" cy="711" r="12.9"/><circle cx="1092" cy="541" r="16.6"/><circle cx="1149" cy="476" r="15.6"/><circle cx="1183" cy="507" r="9.8"/><circle cx="1147" cy="583" r="13.9"/><circle cx="1127" cy="663" r="10.3"/><circle cx="1109" cy="519" r="13.7"/><circle cx="1171" cy="511" r="9.8"/><circle cx="1139" cy="422" r="10.0"/><circle cx="1137" cy="669" r="10.3"/><circle cx="1139" cy="591" r="15.2"/><circle cx="1090" cy="559" r="9.9"/><circle cx="1157" cy="709" r="13.7"/><circle cx="1164" cy="460" r="14.7"/><circle cx="1197" cy="580" r="17.5"/><circle cx="1140" cy="464" r="11.2"/><circle cx="1126" cy="461" r="13.6"/><circle cx="1110" cy="452" r="10.6"/><circle cx="1155" cy="501" r="12.7"/><circle cx="1163" cy="438" r="16.6"/></g><g fill="#454c41"><path d="M1223 421L1203 450L1196 500L1198 600L1213 660L1223 684L1252 690L1267 660L1285 600L1282 500L1272 450L1252 413z"/><circle cx="1276" cy="567" r="12.0"/><circle cx="1226" cy="622" r="14.7"/><circle cx="1240" cy="601" r="16.9"/><circle cx="1230" cy="431" r="12.1"/><circle cx="1231" cy="418" r="10.2"/><circle cx="1276" cy="605" r="17.9"/><circle cx="1247" cy="562" r="17.2"/><circle cx="1231" cy="480" r="14.5"/><circle cx="1218" cy="667" r="11.9"/><circle cx="1242" cy="442" r="14.8"/><circle cx="1258" cy="543" r="16.5"/><circle cx="1253" cy="611" r="11.6"/><circle cx="1204" cy="614" r="9.7"/><circle cx="1220" cy="538" r="14.9"/><circle cx="1246" cy="491" r="11.3"/><circle cx="1237" cy="665" r="9.5"/><circle cx="1204" cy="498" r="13.2"/><circle cx="1246" cy="622" r="15.3"/><circle cx="1228" cy="426" r="9.9"/><circle cx="1242" cy="429" r="11.3"/><circle cx="1223" cy="672" r="9.6"/><circle cx="1212" cy="533" r="15.7"/><circle cx="1282" cy="532" r="9.9"/><circle cx="1212" cy="540" r="13.5"/><circle cx="1216" cy="477" r="14.0"/><circle cx="1212" cy="461" r="9.3"/><circle cx="1223" cy="573" r="12.4"/><circle cx="1220" cy="516" r="9.7"/><circle cx="1262" cy="625" r="13.9"/><circle cx="1268" cy="467" r="17.8"/><circle cx="1264" cy="454" r="11.9"/><circle cx="1253" cy="474" r="14.0"/><circle cx="1255" cy="432" r="13.4"/><circle cx="1266" cy="580" r="17.0"/><circle cx="1266" cy="545" r="10.0"/><circle cx="1251" cy="666" r="15.7"/><circle cx="1224" cy="614" r="12.7"/><circle cx="1254" cy="456" r="14.3"/><circle cx="1253" cy="658" r="14.6"/><circle cx="1235" cy="514" r="10.5"/><circle cx="1249" cy="524" r="11.8"/><circle cx="1275" cy="556" r="10.7"/><circle cx="1209" cy="619" r="14.8"/><circle cx="1211" cy="578" r="17.8"/><circle cx="1238" cy="683" r="10.0"/><circle cx="1231" cy="461" r="17.0"/><circle cx="1219" cy="658" r="13.0"/><circle cx="1227" cy="565" r="10.2"/><circle cx="1224" cy="499" r="10.2"/><circle cx="1272" cy="632" r="12.1"/><circle cx="1245" cy="678" r="9.3"/><circle cx="1220" cy="622" r="10.9"/><circle cx="1211" cy="473" r="16.1"/><circle cx="1202" cy="578" r="14.7"/><circle cx="1236" cy="601" r="15.3"/><circle cx="1229" cy="528" r="15.3"/><circle cx="1263" cy="540" r="18.0"/><circle cx="1200" cy="542" r="13.6"/><circle cx="1211" cy="518" r="10.7"/><circle cx="1271" cy="536" r="16.8"/><circle cx="1201" cy="479" r="10.1"/><circle cx="1276" cy="547" r="16.7"/><circle cx="1252" cy="629" r="17.9"/><circle cx="1242" cy="526" r="11.4"/><circle cx="1226" cy="677" r="11.9"/><circle cx="1245" cy="684" r="14.9"/><circle cx="1203" cy="576" r="17.5"/><circle cx="1245" cy="540" r="17.0"/><circle cx="1223" cy="523" r="16.8"/><circle cx="1257" cy="638" r="15.7"/><circle cx="1224" cy="631" r="10.1"/><circle cx="1266" cy="506" r="17.6"/><circle cx="1232" cy="599" r="9.5"/><circle cx="1268" cy="491" r="15.0"/><circle cx="1221" cy="497" r="13.6"/><circle cx="1225" cy="419" r="14.2"/><circle cx="1246" cy="680" r="12.0"/><circle cx="1234" cy="583" r="15.5"/><circle cx="1240" cy="420" r="11.3"/><circle cx="1262" cy="594" r="11.5"/><circle cx="1273" cy="573" r="15.3"/><circle cx="1205" cy="541" r="17.7"/><circle cx="1253" cy="496" r="9.6"/><circle cx="1218" cy="428" r="12.9"/><circle cx="1254" cy="649" r="14.5"/><circle cx="1218" cy="530" r="10.5"/><circle cx="1246" cy="591" r="16.4"/><circle cx="1264" cy="508" r="12.6"/><circle cx="1222" cy="667" r="14.9"/><circle cx="1225" cy="514" r="13.6"/><circle cx="1202" cy="535" r="12.1"/><circle cx="1208" cy="510" r="17.2"/><circle cx="1252" cy="624" r="10.7"/><circle cx="1229" cy="444" r="13.0"/><circle cx="1255" cy="584" r="9.9"/><circle cx="1203" cy="602" r="11.2"/><circle cx="1232" cy="670" r="13.3"/><circle cx="1274" cy="627" r="10.8"/><circle cx="1201" cy="614" r="9.4"/><circle cx="1236" cy="527" r="10.0"/><circle cx="1244" cy="642" r="13.0"/><circle cx="1247" cy="413" r="12.6"/><circle cx="1228" cy="593" r="9.9"/><circle cx="1247" cy="509" r="9.9"/><circle cx="1262" cy="649" r="16.2"/><circle cx="1240" cy="422" r="15.5"/><circle cx="1198" cy="496" r="9.2"/><circle cx="1225" cy="470" r="13.7"/><circle cx="1247" cy="442" r="16.2"/><circle cx="1248" cy="484" r="9.0"/><circle cx="1265" cy="602" r="16.0"/><circle cx="1213" cy="523" r="17.3"/><circle cx="1276" cy="592" r="10.5"/><circle cx="1255" cy="455" r="17.2"/><circle cx="1254" cy="449" r="15.2"/><circle cx="1207" cy="615" r="14.3"/><circle cx="1222" cy="647" r="11.3"/><circle cx="1211" cy="610" r="12.2"/><circle cx="1218" cy="448" r="17.3"/><circle cx="1248" cy="471" r="15.5"/><circle cx="1237" cy="431" r="14.8"/><circle cx="1217" cy="531" r="14.8"/><circle cx="1239" cy="478" r="14.0"/><circle cx="1214" cy="590" r="9.7"/><circle cx="1239" cy="637" r="14.6"/><circle cx="1229" cy="663" r="13.2"/><circle cx="1237" cy="525" r="10.5"/><circle cx="1229" cy="627" r="10.1"/><circle cx="1215" cy="531" r="11.5"/><circle cx="1205" cy="591" r="11.0"/><circle cx="1252" cy="675" r="15.4"/></g><g fill="#4a5443"><path d="M1298 410L1273 450L1260 500L1256 550L1254 600L1260 650L1273 700L1293 718L1332 724L1352 700L1397 650L1403 600L1400 550L1392 500L1372 450L1342 402z"/><circle cx="1280" cy="596" r="16.7"/><circle cx="1281" cy="574" r="15.7"/><circle cx="1305" cy="549" r="13.2"/><circle cx="1325" cy="443" r="10.9"/><circle cx="1370" cy="450" r="9.7"/><circle cx="1377" cy="627" r="10.9"/><circle cx="1368" cy="665" r="17.1"/><circle cx="1327" cy="567" r="11.0"/><circle cx="1306" cy="527" r="14.4"/><circle cx="1286" cy="628" r="14.4"/><circle cx="1275" cy="474" r="9.9"/><circle cx="1274" cy="600" r="17.6"/><circle cx="1295" cy="558" r="14.3"/><circle cx="1337" cy="708" r="9.7"/><circle cx="1318" cy="622" r="17.8"/><circle cx="1313" cy="684" r="10.4"/><circle cx="1314" cy="677" r="12.2"/><circle cx="1378" cy="583" r="14.7"/><circle cx="1301" cy="558" r="12.7"/><circle cx="1300" cy="412" r="16.7"/><circle cx="1360" cy="587" r="9.3"/><circle cx="1299" cy="502" r="11.2"/><circle cx="1375" cy="527" r="16.7"/><circle cx="1360" cy="469" r="11.3"/><circle cx="1324" cy="604" r="9.7"/><circle cx="1305" cy="407" r="11.4"/><circle cx="1313" cy="474" r="9.9"/><circle cx="1327" cy="461" r="17.3"/><circle cx="1280" cy="645" r="10.3"/><circle cx="1345" cy="545" r="14.4"/><circle cx="1319" cy="408" r="9.6"/><circle cx="1364" cy="588" r="13.7"/><circle cx="1369" cy="534" r="10.0"/><circle cx="1330" cy="573" r="9.8"/><circle cx="1308" cy="577" r="10.2"/><circle cx="1343" cy="690" r="14.7"/><circle cx="1375" cy="612" r="15.0"/><circle cx="1337" cy="646" r="13.7"/><circle cx="1293" cy="589" r="10.1"/><circle cx="1323" cy="422" r="10.3"/><circle cx="1311" cy="450" r="11.4"/><circle cx="1356" cy="437" r="15.2"/><circle cx="1274" cy="533" r="11.9"/><circle cx="1372" cy="515" r="17.0"/><circle cx="1270" cy="668" r="15.6"/><circle cx="1297" cy="537" r="12.0"/><circle cx="1339" cy="687" r="15.3"/><circle cx="1353" cy="446" r="13.8"/><circle cx="1264" cy="532" r="14.2"/><circle cx="1340" cy="600" r="13.0"/><circle cx="1320" cy="616" r="14.4"/><circle cx="1264" cy="646" r="9.2"/><circle cx="1313" cy="455" r="10.5"/><circle cx="1385" cy="537" r="10.6"/><circle cx="1385" cy="608" r="10.5"/><circle cx="1292" cy="588" r="16.9"/><circle cx="1361" cy="619" r="11.9"/><circle cx="1317" cy="703" r="17.8"/><circle cx="1356" cy="440" r="16.0"/><circle cx="1320" cy="535" r="12.0"/><circle cx="1306" cy="469" r="12.0"/><circle cx="1340" cy="575" r="13.6"/><circle cx="1265" cy="570" r="16.5"/><circle cx="1338" cy="698" r="9.5"/><circle cx="1337" cy="611" r="16.0"/><circle cx="1357" cy="466" r="12.9"/><circle cx="1308" cy="531" r="10.1"/><circle cx="1287" cy="583" r="9.5"/><circle cx="1300" cy="541" r="9.7"/><circle cx="1334" cy="410" r="10.7"/><circle cx="1306" cy="416" r="13.7"/><circle cx="1347" cy="610" r="11.0"/><circle cx="1296" cy="650" r="13.3"/><circle cx="1329" cy="417" r="15.6"/><circle cx="1269" cy="482" r="9.7"/><circle cx="1306" cy="688" r="15.3"/><circle cx="1386" cy="609" r="13.3"/><circle cx="1294" cy="519" r="10.2"/><circle cx="1343" cy="640" r="9.1"/><circle cx="1341" cy="597" r="11.7"/><circle cx="1293" cy="616" r="9.0"/><circle cx="1330" cy="450" r="12.2"/><circle cx="1295" cy="480" r="16.8"/><circle cx="1331" cy="454" r="17.6"/><circle cx="1305" cy="691" r="16.5"/><circle cx="1355" cy="599" r="17.3"/><circle cx="1332" cy="440" r="10.2"/><circle cx="1275" cy="509" r="14.3"/><circle cx="1330" cy="440" r="9.9"/><circle cx="1334" cy="704" r="15.6"/><circle cx="1329" cy="562" r="14.6"/><circle cx="1334" cy="424" r="11.0"/><circle cx="1300" cy="710" r="16.3"/><circle cx="1304" cy="597" r="9.9"/><circle cx="1301" cy="422" r="17.0"/><circle cx="1309" cy="512" r="17.6"/><circle cx="1319" cy="456" r="13.4"/><circle cx="1291" cy="452" r="15.7"/><circle cx="1308" cy="420" r="12.5"/><circle cx="1353" cy="687" r="12.7"/><circle cx="1369" cy="532" r="13.6"/><circle cx="1381" cy="549" r="11.5"/><circle cx="1365" cy="677" r="15.3"/><circle cx="1268" cy="542" r="16.1"/><circle cx="1337" cy="427" r="14.9"/><circle cx="1299" cy="424" r="13.7"/><circle cx="1331" cy="447" r="14.0"/><circle cx="1341" cy="678" r="10.3"/><circle cx="1322" cy="487" r="16.3"/><circle cx="1398" cy="540" r="9.9"/><circle cx="1302" cy="553" r="13.6"/><circle cx="1322" cy="555" r="10.7"/><circle cx="1353" cy="499" r="11.5"/><circle cx="1299" cy="407" r="14.2"/><circle cx="1383" cy="576" r="12.8"/><circle cx="1279" cy="634" r="13.2"/><circle cx="1325" cy="571" r="11.5"/><circle cx="1311" cy="709" r="13.9"/><circle cx="1298" cy="418" r="11.7"/><circle cx="1325" cy="475" r="14.4"/><circle cx="1275" cy="578" r="10.3"/><circle cx="1267" cy="669" r="12.1"/><circle cx="1295" cy="547" r="12.3"/><circle cx="1367" cy="612" r="15.8"/><circle cx="1351" cy="670" r="15.2"/><circle cx="1304" cy="665" r="9.0"/><circle cx="1354" cy="617" r="17.1"/><circle cx="1369" cy="556" r="9.7"/><circle cx="1307" cy="493" r="13.3"/><circle cx="1371" cy="661" r="14.5"/><circle cx="1332" cy="653" r="16.0"/><circle cx="1275" cy="568" r="10.6"/><circle cx="1304" cy="713" r="10.8"/><circle cx="1310" cy="713" r="9.0"/><circle cx="1291" cy="712" r="17.3"/><circle cx="1332" cy="464" r="17.0"/><circle cx="1297" cy="419" r="13.3"/><circle cx="1387" cy="601" r="11.0"/><circle cx="1316" cy="682" r="16.7"/><circle cx="1277" cy="608" r="12.4"/><circle cx="1345" cy="685" r="15.9"/><circle cx="1274" cy="557" r="16.3"/><circle cx="1311" cy="587" r="11.3"/><circle cx="1301" cy="712" r="12.9"/><circle cx="1317" cy="424" r="15.9"/><circle cx="1281" cy="664" r="16.4"/><circle cx="1295" cy="681" r="9.9"/><circle cx="1328" cy="618" r="9.3"/><circle cx="1286" cy="713" r="11.5"/><circle cx="1287" cy="659" r="16.1"/><circle cx="1328" cy="448" r="13.0"/><circle cx="1262" cy="543" r="10.4"/><circle cx="1343" cy="424" r="14.3"/><circle cx="1320" cy="406" r="12.8"/><circle cx="1346" cy="574" r="10.7"/><circle cx="1274" cy="474" r="10.3"/><circle cx="1322" cy="487" r="11.2"/><circle cx="1303" cy="713" r="15.4"/><circle cx="1382" cy="581" r="14.0"/><circle cx="1282" cy="707" r="9.8"/><circle cx="1293" cy="697" r="15.6"/><circle cx="1360" cy="495" r="13.5"/><circle cx="1345" cy="519" r="16.0"/><circle cx="1317" cy="464" r="12.9"/><circle cx="1304" cy="583" r="9.9"/><circle cx="1309" cy="410" r="9.2"/><circle cx="1277" cy="566" r="15.5"/><circle cx="1371" cy="505" r="12.6"/><circle cx="1323" cy="622" r="16.2"/><circle cx="1301" cy="481" r="10.4"/><circle cx="1321" cy="424" r="16.9"/><circle cx="1313" cy="433" r="11.0"/><circle cx="1390" cy="513" r="9.4"/><circle cx="1345" cy="535" r="17.6"/><circle cx="1323" cy="658" r="16.5"/><circle cx="1276" cy="536" r="10.6"/><circle cx="1302" cy="599" r="11.4"/><circle cx="1375" cy="503" r="16.7"/><circle cx="1292" cy="517" r="13.5"/><circle cx="1265" cy="626" r="14.5"/><circle cx="1288" cy="688" r="12.4"/><circle cx="1340" cy="486" r="17.1"/><circle cx="1362" cy="494" r="14.1"/><circle cx="1283" cy="548" r="15.2"/><circle cx="1289" cy="709" r="17.1"/><circle cx="1303" cy="495" r="16.9"/><circle cx="1283" cy="700" r="12.0"/><circle cx="1361" cy="680" r="12.0"/><circle cx="1377" cy="636" r="15.3"/><circle cx="1346" cy="497" r="12.1"/><circle cx="1280" cy="449" r="10.8"/><circle cx="1384" cy="505" r="11.6"/><circle cx="1304" cy="456" r="14.4"/><circle cx="1331" cy="579" r="11.8"/><circle cx="1337" cy="428" r="13.3"/><circle cx="1330" cy="692" r="13.3"/><circle cx="1366" cy="637" r="10.7"/><circle cx="1333" cy="645" r="14.9"/><circle cx="1346" cy="680" r="17.8"/><circle cx="1278" cy="682" r="12.3"/><circle cx="1361" cy="665" r="15.5"/><circle cx="1304" cy="464" r="16.7"/><circle cx="1325" cy="594" r="10.3"/><circle cx="1383" cy="560" r="12.7"/><circle cx="1357" cy="453" r="14.8"/><circle cx="1290" cy="685" r="11.1"/><circle cx="1300" cy="407" r="14.1"/><circle cx="1293" cy="429" r="17.0"/><circle cx="1277" cy="694" r="12.1"/><circle cx="1333" cy="481" r="16.1"/><circle cx="1322" cy="420" r="13.3"/><circle cx="1271" cy="516" r="10.1"/><circle cx="1334" cy="687" r="16.0"/><circle cx="1349" cy="651" r="14.3"/><circle cx="1297" cy="665" r="15.5"/><circle cx="1300" cy="648" r="15.6"/><circle cx="1380" cy="545" r="13.4"/><circle cx="1300" cy="625" r="16.1"/><circle cx="1320" cy="707" r="16.7"/><circle cx="1342" cy="646" r="16.6"/><circle cx="1272" cy="538" r="13.8"/><circle cx="1341" cy="467" r="14.1"/><circle cx="1330" cy="715" r="13.3"/><circle cx="1386" cy="630" r="14.8"/><circle cx="1379" cy="657" r="11.6"/><circle cx="1310" cy="491" r="10.7"/><circle cx="1302" cy="545" r="17.1"/><circle cx="1282" cy="638" r="16.5"/><circle cx="1300" cy="676" r="12.5"/><circle cx="1278" cy="452" r="15.4"/><circle cx="1274" cy="654" r="16.2"/><circle cx="1313" cy="466" r="15.7"/></g></g></defs>
<use href="#crw" fill="#000" filter="url(#cr1)"/>
<use href="#crw" fill="#000" filter="url(#cr2)"/>
<use href="#crw" fill="#000" filter="url(#cr3)"/>
<use href="#crw" fill="#000" filter="url(#cr4)"/>
<g opacity=".55"><path d="M515 705L513 397" stroke="#6a5038" stroke-width="2.2"/><path d="M515 615L547 593" stroke="#5e4632" stroke-width="1.3"/><path d="M515 645L477 618" stroke="#5e4632" stroke-width="1.3"/><path d="M515 413L545 387" stroke="#5e4632" stroke-width="1.3"/><path d="M515 455L454 402" stroke="#5e4632" stroke-width="1.3"/><path d="M515 540L542 520" stroke="#5e4632" stroke-width="1.3"/><path d="M515 509L560 473" stroke="#5e4632" stroke-width="1.3"/><path d="M515 688L471 663" stroke="#5e4632" stroke-width="1.3"/><path d="M515 449L461 412" stroke="#5e4632" stroke-width="1.3"/><path d="M515 513L561 487" stroke="#5e4632" stroke-width="1.3"/><path d="M515 550L470 527" stroke="#5e4632" stroke-width="1.3"/><path d="M640 712L640 389" stroke="#6a5038" stroke-width="2.2"/><path d="M640 680L721 624" stroke="#5e4632" stroke-width="1.3"/><path d="M640 624L599 602" stroke="#5e4632" stroke-width="1.3"/><path d="M640 681L716 637" stroke="#5e4632" stroke-width="1.3"/><path d="M640 471L590 445" stroke="#5e4632" stroke-width="1.3"/><path d="M640 463L707 414" stroke="#5e4632" stroke-width="1.3"/><path d="M640 619L608 590" stroke="#5e4632" stroke-width="1.3"/><path d="M640 431L693 386" stroke="#5e4632" stroke-width="1.3"/><path d="M640 415L611 390" stroke="#5e4632" stroke-width="1.3"/><path d="M640 528L596 499" stroke="#5e4632" stroke-width="1.3"/><path d="M640 595L587 568" stroke="#5e4632" stroke-width="1.3"/><path d="M831 705L833 392" stroke="#6a5038" stroke-width="2.2"/><path d="M831 596L883 557" stroke="#5e4632" stroke-width="1.3"/><path d="M831 671L861 645" stroke="#5e4632" stroke-width="1.3"/><path d="M831 510L781 482" stroke="#5e4632" stroke-width="1.3"/><path d="M831 677L882 634" stroke="#5e4632" stroke-width="1.3"/><path d="M831 681L811 666" stroke="#5e4632" stroke-width="1.3"/><path d="M831 470L794 441" stroke="#5e4632" stroke-width="1.3"/><path d="M831 669L883 631" stroke="#5e4632" stroke-width="1.3"/><path d="M831 488L862 463" stroke="#5e4632" stroke-width="1.3"/><path d="M831 637L783 603" stroke="#5e4632" stroke-width="1.3"/><path d="M831 655L799 631" stroke="#5e4632" stroke-width="1.3"/><path d="M1059 695L1058 500" stroke="#6a5038" stroke-width="2.2"/><path d="M1059 575L1100 548" stroke="#5e4632" stroke-width="1.3"/><path d="M1059 625L1020 594" stroke="#5e4632" stroke-width="1.3"/><path d="M1059 561L1023 534" stroke="#5e4632" stroke-width="1.3"/><path d="M1059 653L1084 635" stroke="#5e4632" stroke-width="1.3"/><path d="M1059 621L1089 605" stroke="#5e4632" stroke-width="1.3"/><path d="M1059 660L1024 637" stroke="#5e4632" stroke-width="1.3"/><path d="M1059 519L1088 494" stroke="#5e4632" stroke-width="1.3"/><path d="M1059 603L1089 579" stroke="#5e4632" stroke-width="1.3"/><path d="M1059 534L1078 518" stroke="#5e4632" stroke-width="1.3"/><path d="M1059 612L1017 590" stroke="#5e4632" stroke-width="1.3"/><path d="M1140 706L1139 445" stroke="#6a5038" stroke-width="2.2"/><path d="M1140 471L1174 441" stroke="#5e4632" stroke-width="1.3"/><path d="M1140 583L1175 560" stroke="#5e4632" stroke-width="1.3"/><path d="M1140 575L1182 552" stroke="#5e4632" stroke-width="1.3"/><path d="M1140 513L1170 497" stroke="#5e4632" stroke-width="1.3"/><path d="M1140 637L1172 615" stroke="#5e4632" stroke-width="1.3"/><path d="M1140 528L1165 507" stroke="#5e4632" stroke-width="1.3"/><path d="M1140 479L1169 461" stroke="#5e4632" stroke-width="1.3"/><path d="M1140 550L1186 520" stroke="#5e4632" stroke-width="1.3"/><path d="M1140 473L1165 459" stroke="#5e4632" stroke-width="1.3"/><path d="M1140 461L1164 446" stroke="#5e4632" stroke-width="1.3"/><path d="M1236 686L1237 438" stroke="#6a5038" stroke-width="2.2"/><path d="M1236 550L1216 538" stroke="#5e4632" stroke-width="1.3"/><path d="M1236 620L1219 605" stroke="#5e4632" stroke-width="1.3"/><path d="M1236 640L1256 623" stroke="#5e4632" stroke-width="1.3"/><path d="M1236 600L1206 575" stroke="#5e4632" stroke-width="1.3"/><path d="M1236 667L1254 651" stroke="#5e4632" stroke-width="1.3"/><path d="M1236 619L1220 605" stroke="#5e4632" stroke-width="1.3"/><path d="M1236 654L1214 635" stroke="#5e4632" stroke-width="1.3"/><path d="M1236 461L1264 446" stroke="#5e4632" stroke-width="1.3"/><path d="M1236 597L1263 583" stroke="#5e4632" stroke-width="1.3"/><path d="M1236 618L1263 595" stroke="#5e4632" stroke-width="1.3"/><path d="M1313 710L1310 427" stroke="#6a5038" stroke-width="2.2"/><path d="M1313 519L1267 480" stroke="#5e4632" stroke-width="1.3"/><path d="M1313 556L1290 540" stroke="#5e4632" stroke-width="1.3"/><path d="M1313 536L1359 507" stroke="#5e4632" stroke-width="1.3"/><path d="M1313 625L1353 603" stroke="#5e4632" stroke-width="1.3"/><path d="M1313 667L1343 647" stroke="#5e4632" stroke-width="1.3"/><path d="M1313 659L1272 625" stroke="#5e4632" stroke-width="1.3"/><path d="M1313 624L1283 606" stroke="#5e4632" stroke-width="1.3"/><path d="M1313 518L1267 480" stroke="#5e4632" stroke-width="1.3"/><path d="M1313 553L1281 532" stroke="#5e4632" stroke-width="1.3"/><path d="M1313 601L1349 576" stroke="#5e4632" stroke-width="1.3"/></g>
<g><path d="M509.5 767L512.5 695L517.5 695L520.5 767z" fill="url(#trk)"/><path d="M635.5 765L637.5 702L642.5 702L644.5 765z" fill="url(#trk)"/><path d="M668.5 767L671.5 702L676.5 702L679.5 767z" fill="url(#trk)"/><path d="M826.0 762L828.5 695L833.5 695L836.0 762z" fill="url(#trk)"/><path d="M1054.5 742L1056.5 685L1061.5 685L1063.5 742z" fill="url(#trk)"/><path d="M1135.0 757L1137.5 696L1142.5 696L1145.0 757z" fill="url(#trk)"/><path d="M1231.5 722L1233.5 676L1238.5 676L1240.5 722z" fill="url(#trk)"/><path d="M1307.5 759L1310.5 700L1315.5 700L1318.5 759z" fill="url(#trk)"/></g>
</svg></div>
<!-- ================= RIGHT MONITOR : 3ds Max ================= -->
<div id="R" class="a" style="left:1920px;top:0;width:1920px;height:1306px;background:#000;overflow:hidden">
  <!-- right frame -->
  <div class="a" style="left:1908px;top:106px;width:6px;height:1160px;background:linear-gradient(90deg,#c8d8e8,#9fb9d2 60%,#7d97b0)"></div>
  <div class="a" style="left:1914px;top:106px;width:6px;height:1160px;background:#3d3d3d;border-left:1px solid #1e1e1e"></div>
  <div class="a" style="left:1905px;top:106px;width:9px;height:14px;border-radius:0 8px 0 0;background:#b6cbe0"></div>
  <!-- title bar (glass) -->
  <div class="a" style="left:0;top:106px;width:1908px;height:30px;background:linear-gradient(180deg,#c6d8ea 0%,#b4cbe2 40%,#a9c2dc 100%)"></div>
  <div class="a" style="left:0;top:106px;width:1908px;height:30px;overflow:hidden">
    <div class="a" style="left:348px;top:12px;width:56px;height:10px;background:#7f93a8;filter:blur(4px);opacity:.7"></div>
    <div class="a" style="left:424px;top:12px;width:73px;height:10px;background:#8798ab;filter:blur(4px);opacity:.6"></div>
    <div class="a" style="left:516px;top:12px;width:37px;height:10px;background:#5f7186;filter:blur(4px);opacity:.7"></div>
    <div class="a" style="left:571px;top:12px;width:79px;height:10px;background:#8596aa;filter:blur(4px);opacity:.6"></div>
    <div class="a" style="left:665px;top:12px;width:56px;height:10px;background:#8c9db0;filter:blur(4px);opacity:.5"></div>
    <div class="a" style="left:745px;top:12px;width:18px;height:10px;background:#7788a0;filter:blur(4px);opacity:.6"></div>
    <div class="a" style="left:750px;top:5px;width:250px;height:20px;background:#c9dbec;filter:blur(6px);opacity:.9"></div>
  </div>
  <div class="t" style="left:758px;top:113px;font-size:13px;color:#111">Autodesk 3ds Max Design 2014 x64</div>
  <div class="t" style="left:997px;top:113px;font-size:13px;color:#111">2.max</div>
  <!-- client -->
  <div class="a" style="left:0;top:136px;width:1908px;height:1130px;background:#444"></div>
  <!-- menu bar -->
  <div class="a" style="left:28px;top:136px;width:1880px;height:21px;background:linear-gradient(180deg,#a6a6a6 0%,#8a8a8a 35%,#666 70%,#555 100%)"></div>
  <!-- QAT -->
  <div class="a" style="left:27px;top:112px;width:320px;height:24px;background:linear-gradient(180deg,#a9a9a9,#8a8a8a 60%,#7c7c7c);border:1px solid #5e5e5e;border-bottom:none"></div>
  <svg style="left:37px;top:118px" width="16" height="13" viewBox="0 0 16 13"><path d="M0.5 0.5h10l4 4v8h-14z" fill="#f4f4f4" stroke="#555"/><path d="M10.5 0.5v4h4" fill="#ccc" stroke="#555"/></svg>
  <svg style="left:61px;top:118px" width="16" height="12" viewBox="0 0 16 12"><path d="M0.5 1.5h5l1 1h6v2h-10l-2 7z" fill="#e8e8e8" stroke="#555"/><path d="M3 5h12.5l-3 6.5H0.5z" fill="#f2f2f2" stroke="#555"/></svg>
  <svg style="left:86px;top:116px" width="15" height="15" viewBox="0 0 15 15"><rect x="0.5" y="0.5" width="14" height="14" rx="1" fill="#5c6478" stroke="#333"/><rect x="3" y="1" width="9" height="5" fill="#eee"/><rect x="4" y="9" width="7" height="5" fill="#eee"/><rect x="5" y="10" width="2" height="3" fill="#333"/></svg>
  <svg style="left:109px;top:117px" width="16" height="13" viewBox="0 0 16 13"><path d="M6 1L1 5.5 6 10V7c4 0 7 1 8 5 0-5-3-8-8-8z" fill="#f0f0f0" stroke="#333" stroke-width="1"/></svg>
  <svg style="left:131px;top:122px" width="6" height="4" viewBox="0 0 6 4"><path d="M0 0h6L3 4z" fill="#555"/></svg>
  <svg style="left:145px;top:117px" width="16" height="13" viewBox="0 0 16 13"><path d="M10 1l5 4.5L10 10V7C6 7 3 8 2 12c0-5 3-8 8-8z" fill="#f0f0f0" stroke="#333" stroke-width="1"/></svg>
  <svg style="left:167px;top:122px" width="6" height="4" viewBox="0 0 6 4"><path d="M0 0h6L3 4z" fill="#555"/></svg>
  <svg style="left:181px;top:116px" width="16" height="16" viewBox="0 0 16 16"><path d="M0.5 2.5h5l1 1h6v9h-12z" fill="#e6e6e6" stroke="#555"/><rect x="8.5" y="7.5" width="7" height="8" fill="#fff" stroke="#444"/><rect x="10" y="9" width="4" height="2" fill="#3a6fc8"/></svg>
  <div class="a" style="left:201px;top:113px;width:129px;height:21px;background:linear-gradient(180deg,#f4f4f4,#dcdcdc);border:1px solid #6a6a6a"></div>
  <div class="t" style="left:206px;top:117px;font-size:14px;color:#000;letter-spacing:-0.6px;width:112px;overflow:hidden">ワークスペース: 既定</div>
  <svg style="left:322px;top:122px" width="6" height="4" viewBox="0 0 6 4"><path d="M0 0h6L3 4z" fill="#555"/></svg>
  <svg style="left:334px;top:119px" width="10" height="9" viewBox="0 0 10 9"><rect x="0" y="0" width="10" height="2" fill="#111"/><path d="M0 3h10L5 9z" fill="#111"/></svg>
  <!-- MXD app button -->
  <div class="a" style="left:0;top:112px;width:28px;height:41px;background:linear-gradient(180deg,#e4e4e4,#c8c8c8 50%,#a4a4a4);border:1px solid #2e2e2e;border-left:none"></div>
  <svg style="left:0;top:114px" width="16" height="24" viewBox="0 0 16 24"><polygon points="0,2 9,2 15,12 9,22 0,22" fill="#17877f"/><polygon points="0,6 9,12 0,18" fill="#0d4f4c"/></svg>
  <svg style="left:18px;top:127px" width="7" height="5" viewBox="0 0 7 5"><path d="M0 0h7L3.5 5z" fill="#333"/></svg>
  <div class="t" style="left:-1px;top:141px;font-size:9px;color:#111;font-weight:bold">MXD</div>
  <!-- search -->
  <div class="a" style="left:1448px;top:112px;width:335px;height:24px;background:linear-gradient(180deg,#c9d3dd,#a9b5c1);border:1px solid #7f8b97"></div>
  <div class="a" style="left:1449px;top:113px;width:12px;height:22px;background:#8e969e"></div>
  <svg style="left:1452px;top:119px" width="6" height="9" viewBox="0 0 6 9"><path d="M0 0l6 4.5L0 9z" fill="#111"/></svg>
  <div class="a" style="left:1461px;top:113px;width:179px;height:21px;background:#fff;border:1px solid #8c97a3"></div>
  <div class="t" style="left:1464px;top:118px;font-size:12px;color:#8a8a8a;letter-spacing:-0.4px">キーワードまたは語句を入力</div>
  <svg style="left:1645px;top:116px" width="100" height="18" viewBox="0 0 100 18"><g fill="#1a1a1a"><rect x="0" y="4" width="6" height="10" rx="2"/><rect x="8" y="4" width="6" height="10" rx="2"/><rect x="2" y="1" width="3" height="4"/><rect x="9" y="1" width="3" height="4"/></g><path d="M22 3a4 4 0 1 1 5 5l7 7-2 2-7-7a4 4 0 0 1-3-7z" fill="#eee" stroke="#222"/><path d="M46 14l4-4M43 6a7 7 0 0 0 9 9" stroke="#222" stroke-width="1.6" fill="#eee"/><path d="M64 3l2.5 5 5 .5-4 3.5 1.2 5-4.7-2.7-4.7 2.7 1.2-5-4-3.5 5-.5z" fill="#fff" stroke="#222"/><circle cx="92" cy="9" r="7.5" fill="#2752c4" stroke="#fff"/><text x="89" y="13.5" font-size="12" font-weight="bold" fill="#fff" font-family="Liberation Sans">?</text></svg>
  <svg style="left:1772px;top:122px" width="6" height="4" viewBox="0 0 6 4"><path d="M0 0h6L3 4z" fill="#555"/></svg>
  <!-- caption buttons -->
  <div class="a" style="left:1805px;top:104px;width:103px;height:20px;border:1px solid #4d5f73;border-radius:0 0 5px 5px;overflow:hidden">
    <div class="a" style="left:0;top:0;width:28px;height:19px;background:linear-gradient(180deg,#dce6f0 0%,#ccdae8 50%,#a9bfd6 50%,#b9cde0 100%);border-right:1px solid #8fa2b6"></div>
    <div class="a" style="left:28px;top:0;width:28px;height:19px;background:linear-gradient(180deg,#b8d8f0 0%,#8cc0e8 50%,#1f6fc0 50%,#3aa8e8 100%);border-right:1px solid #5a8cba"></div>
    <div class="a" style="left:56px;top:0;width:47px;height:19px;background:linear-gradient(180deg,#eab8aa 0%,#e09a88 50%,#c8442a 50%,#d86a50 100%)"></div>
    <div class="a" style="left:9px;top:10px;width:11px;height:3px;background:#fff;border:1px solid #3a4656;box-sizing:content-box"></div>
    <div class="a" style="left:37px;top:4px;width:11px;height:9px;border:2px solid #fff;outline:1px solid #3a4656"></div>
    <svg style="left:72px;top:4px" width="14" height="12" viewBox="0 0 14 12"><path d="M2 2L12 10M12 2L2 10" stroke="#3a4656" stroke-width="4.6"/><path d="M2 2L12 10M12 2L2 10" stroke="#fff" stroke-width="2.7"/></svg>
  </div>

  <div id="menu" style="position:absolute;left:0;top:0">
    <div class="t" style="left:41px;top:141px;font-size:13px;color:#f4f4f4;text-shadow:0 0 2px #888">編集(E)</div>
    <div class="t" style="left:105px;top:141px;font-size:13px;color:#f4f4f4;text-shadow:0 0 2px #888">ツール(T)</div>
    <div class="t" style="left:181px;top:141px;font-size:13px;color:#f4f4f4;text-shadow:0 0 2px #888">グループ(G)</div>
    <div class="t" style="left:272px;top:141px;font-size:13px;color:#f4f4f4;text-shadow:0 0 2px #888">ビュー(V)</div>
    <div class="t" style="left:348px;top:141px;font-size:13px;color:#f4f4f4;text-shadow:0 0 2px #888">作成(C)</div>
    <div class="t" style="left:414px;top:141px;font-size:13px;color:#f4f4f4;text-shadow:0 0 2px #888">モディファイヤ(M)</div>
    <div class="t" style="left:541px;top:141px;font-size:13px;color:#f4f4f4;text-shadow:0 0 2px #888">アニメーション(A)</div>
    <div class="t" style="left:665px;top:141px;font-size:13px;color:#f4f4f4;text-shadow:0 0 2px #888">グラフ エディタ(D)</div>
    <div class="t" style="left:796px;top:141px;font-size:13px;color:#f4f4f4;text-shadow:0 0 2px #888">レンダリング(R)</div>
    <div class="t" style="left:905px;top:141px;font-size:13px;color:#f4f4f4;text-shadow:0 0 2px #888">照明分析</div>
    <div class="t" style="left:970px;top:141px;font-size:13px;color:#f4f4f4;text-shadow:0 0 2px #888">Civil View(V)</div>
    <div class="t" style="left:1067px;top:141px;font-size:13px;color:#f4f4f4;text-shadow:0 0 2px #888">カスタマイズ(U)</div>
    <div class="t" style="left:1182px;top:141px;font-size:13px;color:#f4f4f4;text-shadow:0 0 2px #888">MAXScript(X)</div>
    <div class="t" style="left:1282px;top:141px;font-size:13px;color:#f4f4f4;text-shadow:0 0 2px #888">ヘルプ(H)</div>
  </div>
  <!-- toolbar row lines -->
  <div class="a" style="left:0;top:195px;width:1908px;height:1px;background:#606060"></div><div class="a" style="left:0;top:194px;width:1400px;height:2px;background:#151515"></div>
  <!-- ribbon tabs row -->
  <div class="a" style="left:0;top:196px;width:1908px;height:21px;background:#525252"></div>
  <div class="a" style="left:0;top:216px;width:1908px;height:1px;background:#2c2c2c"></div>
  <div class="a" style="left:195px;top:199px;width:72px;height:18px;background:linear-gradient(180deg,#6a6a6a,#555);border:1px solid #333;border-bottom:none;border-radius:2px 2px 0 0"></div>
  <div class="t" style="left:25px;top:201px;font-size:11px;letter-spacing:-2px;color:#c8c8c8">モデリング</div>
  <div class="t" style="left:105px;top:201px;font-size:11px;letter-spacing:-2.2px;color:#c8c8c8">フリーフォーム</div>
  <div class="t" style="left:219px;top:199px;font-size:12px;letter-spacing:-0.5px;color:#e4e4e4">選択</div>
  <div class="t" style="left:294px;top:201px;font-size:11px;letter-spacing:-2px;color:#c8c8c8">オブジェクト ペイント</div>
  <div class="t" style="left:438px;top:201px;font-size:12px;letter-spacing:-0.3px;color:#c8c8c8">Populate</div>
  <div class="a" style="left:515px;top:203px;width:12px;height:8px;border-radius:3px;background:#e8e8e8"></div>
  <svg style="left:518px;top:205px" width="6" height="4" viewBox="0 0 6 4"><path d="M0 0h6L3 4z" fill="#333"/></svg>
  <svg style="left:531px;top:207px" width="5" height="3" viewBox="0 0 5 3"><path d="M0 0h5L2.5 3z" fill="#bbb"/></svg>
  <!-- ribbon panel row -->
  <div class="a" style="left:0;top:217px;width:1908px;height:19px;background:linear-gradient(180deg,#3a3a3a,#444)"></div>
  <div class="a" style="left:0;top:235px;width:1908px;height:1px;background:#2a2a2a"></div>
  <!-- main toolbar icons (local x = global-1920) -->
  <svg style="left:1px;top:165px" width="22" height="22" viewBox="0 0 22 22"><g fill="none" stroke="#efe3c0" stroke-width="2.4"><rect x="1" y="2" width="7" height="11" rx="3.5" transform="rotate(-40 4.5 7.5)"/><rect x="11" y="9" width="7" height="11" rx="3.5" transform="rotate(-40 14.5 14.5)"/><path d="M6 8l9 7"/></g></svg>
  <svg style="left:32px;top:165px" width="22" height="22" viewBox="0 0 22 22"><g fill="none" stroke="#efe3c0" stroke-width="2.2"><path d="M3 10V6a4 4 0 0 1 8 0"/><path d="M19 12v4a4 4 0 0 1-8 0"/></g><g fill="#bbb"><rect x="12" y="1" width="2" height="2"/><rect x="15" y="3" width="2" height="2"/><rect x="13" y="5" width="2" height="2"/><rect x="3" y="14" width="2" height="2"/><rect x="6" y="16" width="2" height="2"/><rect x="4" y="18" width="2" height="2"/></g></svg>
  <svg style="left:63px;top:164px" width="24" height="24" viewBox="0 0 24 24"><g fill="none" stroke="#d8d8d8" stroke-width="1.6"><path d="M1 3c4-3 7 3 11 0s7 3 11 0"/><path d="M1 8c4-3 7 3 11 0s7 3 11 0"/><path d="M1 13c4-3 7 3 11 0s7 3 11 0"/></g><g fill="none" stroke="#f0c020" stroke-width="2.5"><rect x="9" y="17" width="6" height="5" rx="2.5"/><rect x="15" y="17" width="7" height="5" rx="2.5"/></g></svg>
  <div class="a" style="left:94px;top:169px;width:2px;height:16px;background:#1e1e1e"></div>
  <div class="a" style="left:97px;top:161px;width:69px;height:25px;background:#1a1a1a"></div>
  <div class="a" style="left:99px;top:163px;width:49px;height:21px;background:#575757"></div>
  <div class="a" style="left:148px;top:163px;width:17px;height:21px;background:#fff"></div>
  <svg style="left:151px;top:172px" width="10" height="5" viewBox="0 0 10 5"><path d="M0 0h10L5 5z" fill="#000"/></svg>
  <svg style="left:173px;top:165px" width="20" height="22" viewBox="0 0 20 22"><path d="M1 4l4-3h9v9l-4 3H1z" fill="#e8eaee"/><path d="M10 13V4H1" fill="none" stroke="#c0c4cc"/><path d="M10 4l4-3" stroke="#c0c4cc"/><path d="M11 7l7 7-3 .5 2.5 5-2 1-2.5-5L11 17z" fill="#fff" stroke="#222" stroke-width=".8"/></svg>
  <svg style="left:202px;top:165px" width="24" height="22" viewBox="0 0 24 22"><g stroke="#eee" stroke-width="1.5"><path d="M1 1h12M1 4h8M1 7h12M1 10h8M1 13h12M1 16h8"/></g><path d="M14 8l7 7-3 .5 2.5 5-2 1-2.5-5L14 18z" fill="#fff" stroke="#222" stroke-width=".8"/></svg>
  <svg style="left:234px;top:164px" width="27" height="24" viewBox="0 0 27 24"><rect x="1.5" y="1.5" width="21" height="20" fill="none" stroke="#fff" stroke-width="1.4" stroke-dasharray="2.2 1.4"/><path d="M22 23l3-3" stroke="#fff" stroke-width="1.5"/></svg>
  <svg style="left:267px;top:164px" width="24" height="24" viewBox="0 0 24 24"><rect x="1.5" y="1.5" width="16" height="20" fill="none" stroke="#fff" stroke-width="1.4" stroke-dasharray="2.2 1.4"/><path d="M12 9l3-3h8v8l-3 3h-8z" fill="#e6e8ec"/><path d="M12 9h8v8" fill="none" stroke="#c4c8ce"/></svg>
  <div class="a" style="left:298px;top:169px;width:2px;height:16px;background:#1e1e1e"></div>
  <div class="a" style="left:301px;top:161px;width:31px;height:30px;background:#3b82dc;border:1px solid #262626"></div>
  <svg style="left:304px;top:164px" width="25" height="25" viewBox="0 0 25 25"><g fill="#fff"><path d="M12.5 1l4 5h-2.5v4h-3V6H8.5z"/><path d="M12.5 24l4-5h-2.5v-4h-3v4H8.5z"/><path d="M1 12.5l5-4v2.5h4v3H6v2.5z"/><path d="M24 12.5l-5-4v2.5h-4v3h4v2.5z"/></g><rect x="10.5" y="10.5" width="4" height="4" fill="#fff" stroke="#222" stroke-width=".6"/></svg>
  <svg style="left:337px;top:164px" width="24" height="24" viewBox="0 0 24 24"><path d="M14 3.5A9 9 0 1 1 6 5" fill="none" stroke="#ddd" stroke-width="2"/><path d="M9 1l6 3-5 4z" fill="#fff"/></svg>
  <svg style="left:369px;top:163px" width="26" height="26" viewBox="0 0 26 26"><rect x="1" y="1" width="23" height="23" fill="#a9d3ec"/><rect x="1" y="10" width="13" height="14" fill="#ececec" stroke="#999"/><path d="M14 11l8-8M16 3h6v6" stroke="#111" stroke-width="1.8" fill="none"/><path d="M24 25l2-2" stroke="#fff"/></svg>
  <div class="dd" style="left:397px;top:161px;width:68px;height:20px;border-width:1px;border-color:#111"><span class="t" style="left:3px;top:3px;font-size:12px;color:#000">ビュー</span><i></i></div>
  <svg style="left:471px;top:164px" width="26" height="26" viewBox="0 0 26 26"><rect x="1" y="1" width="9" height="20" fill="#a8acb4"/><rect x="13" y="1" width="8" height="9" fill="#e8e8e8"/><path d="M5.5 18v7M2 21.5h7M17 7v6M14 10h6" stroke="#e00" stroke-width="2"/><path d="M23 25l2-2" stroke="#fff"/></svg>
  <div class="a" style="left:502px;top:169px;width:2px;height:16px;background:#1e1e1e"></div>
  <svg style="left:509px;top:165px" width="24" height="24" viewBox="0 0 24 24"><path d="M12 3v18M2 12h20" stroke="#eee" stroke-width="1.3"/><circle cx="12" cy="3" r="2.5" fill="#7acc5c"/><circle cx="3" cy="12" r="2.5" fill="#ddd"/><circle cx="21" cy="12" r="2.5" fill="#ddd"/><circle cx="12" cy="21" r="2.5" fill="#ddd"/></svg>
  <svg style="left:542px;top:166px" width="22" height="19" viewBox="0 0 22 19"><rect x="1" y="1" width="20" height="15" rx="3" fill="#efefef"/><rect x="1" y="13" width="20" height="5" rx="2" fill="#b0b0b0"/><path d="M11 3l6 5h-4v4H9V8H5z" fill="#333"/></svg>
  <div class="a" style="left:572px;top:169px;width:2px;height:16px;background:#1e1e1e"></div>
  <svg style="left:580px;top:164px" width="26" height="26" viewBox="0 0 26 26"><text x="0" y="13" font-size="15" fill="#eee" font-family="Liberation Sans">3</text><path d="M12 22v-5a4 4 0 0 1 8 0v5" fill="none" stroke="#d41414" stroke-width="3.4"/><path d="M10.3 22h3.4M18.3 22h3.4" stroke="#fff" stroke-width="2"/><path d="M22 25l2-2" stroke="#fff"/></svg>
  <svg style="left:610px;top:163px" width="26" height="26" viewBox="0 0 26 26"><path d="M2 22v-5a4 4 0 0 1 8 0v5" fill="none" stroke="#d41414" stroke-width="3.4"/><path d="M0.3 22h3.4M8.3 22h3.4" stroke="#fff" stroke-width="2"/><path d="M12 23h13M6 12l9-10M12 4a10 10 0 0 1 4 14" fill="none" stroke="#eee" stroke-width="1.2"/></svg>
  <svg style="left:642px;top:164px" width="24" height="26" viewBox="0 0 24 26"><text x="0" y="12" font-size="14" fill="#eee" font-family="Liberation Sans">%</text><path d="M13 22v-5a4 4 0 0 1 8 0v5" fill="none" stroke="#d41414" stroke-width="3.4"/><path d="M11.3 22h3.4M19.3 22h3.4" stroke="#fff" stroke-width="2"/></svg>
  <svg style="left:675px;top:164px" width="24" height="26" viewBox="0 0 24 26"><rect x="0" y="0" width="9" height="8" fill="#ddd"/><rect x="0" y="9" width="9" height="8" fill="#ddd"/><path d="M1.5 6l3-4 3 4zM1.5 11l3 4 3-4z" fill="#444"/><path d="M13 22v-5a4 4 0 0 1 8 0v5" fill="none" stroke="#d41414" stroke-width="3.4"/><path d="M11.3 22h3.4M19.3 22h3.4" stroke="#fff" stroke-width="2"/></svg>
  <div class="a" style="left:705px;top:169px;width:2px;height:16px;background:#1e1e1e"></div>
  <svg style="left:712px;top:163px" width="26" height="26" viewBox="0 0 26 26"><text x="0" y="15" font-size="16" fill="#eee" font-family="Liberation Sans">{ }</text><text x="1" y="25" font-size="7" fill="#eee" font-family="Liberation Sans" font-weight="bold">ABC</text><path d="M12 19l10-12 2 2-10 12-3 1z" fill="#f2c230" stroke="#9a6a10" stroke-width=".6"/></svg>
  <div class="a" style="left:741px;top:162px;width:118px;height:20px;background:#111"></div>
  <div class="a" style="left:743px;top:164px;width:114px;height:16px;background:linear-gradient(90deg,#555 0%,#555 84%,#fff 84%)"></div>
  <div class="t" style="left:744px;top:165px;font-size:14px;color:#000;letter-spacing:-0.8px">選択セット作成</div>
  <svg style="left:843px;top:170px" width="10" height="5" viewBox="0 0 10 5"><path d="M0 0h10L5 5z" fill="#000"/></svg>
  <div class="a" style="left:865px;top:169px;width:2px;height:16px;background:#1e1e1e"></div>
  <svg style="left:872px;top:164px" width="24" height="24" viewBox="0 0 24 24"><path d="M2 2h3l5 6v14H6V11L2 7z" fill="#d8dde4"/><path d="M11 1v22" stroke="#eee"/><path d="M21 2h-3l-5 6v14h4V11l4-4z" fill="#7ab6ec" stroke="#1c6fd0" stroke-width="1"/></svg>
  <div class="a" style="left:902px;top:166px;width:1px;height:20px;background:#ddd"></div>
  <svg style="left:905px;top:164px" width="24" height="26" viewBox="0 0 24 26"><rect x="2" y="7" width="10" height="4" fill="#ddd"/><rect x="2" y="15" width="16" height="5" fill="#b8bcc4"/><path d="M17 1l-4 6h3l-3 6 6-7h-3l3-5z" fill="#f5a020"/><path d="M22 25l2-2" stroke="#fff"/></svg>
  <div class="a" style="left:935px;top:169px;width:2px;height:16px;background:#1e1e1e"></div>
  <svg style="left:942px;top:164px" width="24" height="24" viewBox="0 0 24 24"><path d="M1 9l8-5h14l-8 5z" fill="#ddd"/><path d="M1 13l8-5h14l-8 5z" fill="#bbb"/><path d="M1 17l8-5h10" fill="none" stroke="#ddd" stroke-width="1.5"/><rect x="13" y="14" width="10" height="9" fill="#fff" stroke="#333"/><rect x="15" y="16" width="6" height="3" fill="#3a6fc8"/></svg>
  <div class="a" style="left:972px;top:169px;width:2px;height:16px;background:#1e1e1e"></div>
  <div class="a" style="left:975px;top:161px;width:31px;height:30px;background:#3b82dc;border:1px solid #262626"></div>
  <svg style="left:978px;top:164px" width="26" height="24" viewBox="0 0 26 24"><path d="M1 3h9l2 2h12v14H1z" fill="#e4e4e4" stroke="#333"/><circle cx="20" cy="17" r="4" fill="#ffd800" stroke="#8a6a00"/></svg>
  <svg style="left:1011px;top:163px" width="26" height="26" viewBox="0 0 26 26"><rect x="1" y="1" width="24" height="24" fill="#e8e8e8" stroke="#555"/><path d="M4 4v18h18" stroke="#333" fill="none"/><path d="M5 19c4-15 8-15 16-2" stroke="#222" fill="none" stroke-width="1.5"/></svg>
  <svg style="left:1042px;top:163px" width="26" height="26" viewBox="0 0 26 26"><rect x="1" y="1" width="24" height="24" fill="#e8e8e8" stroke="#555"/><rect x="4" y="4" width="18" height="5" fill="#333"/><rect x="4" y="17" width="18" height="5" fill="#333"/><path d="M13 9v7M10 13l3 3 3-3" stroke="#333" fill="none" stroke-width="1.5"/></svg>
  <div class="a" style="left:1074px;top:169px;width:2px;height:16px;background:#1e1e1e"></div>
  <div class="a" style="left:1077px;top:161px;width:31px;height:30px;background:#3b82dc;border:1px solid #262626"></div>
  <svg style="left:1080px;top:164px" width="25" height="25" viewBox="0 0 25 25"><defs><pattern id="chk" width="6" height="6" patternUnits="userSpaceOnUse"><rect width="6" height="6" fill="#eee"/><rect width="3" height="3" fill="#555"/><rect x="3" y="3" width="3" height="3" fill="#555"/></pattern></defs><circle cx="11" cy="11" r="10" fill="url(#chk)" stroke="#ddd"/><rect x="14" y="13" width="10" height="11" fill="#fff" stroke="#333"/><rect x="16" y="15" width="6" height="3" fill="#3a6fc8"/></svg>
  <div class="a" style="left:1111px;top:169px;width:2px;height:16px;background:#1e1e1e"></div>
  <div class="a" style="left:1115px;top:161px;width:31px;height:30px;background:#3b82dc;border:1px solid #262626"></div>
  <svg style="left:1118px;top:164px" width="26" height="25" viewBox="0 0 26 25"><path d="M3 9h16l-2 9H5z" fill="#ddd" stroke="#555"/><path d="M19 11c4 0 4 5 0 5" fill="none" stroke="#ddd" stroke-width="2"/><rect x="15" y="13" width="10" height="11" fill="#fff" stroke="#333"/><rect x="17" y="15" width="6" height="3" fill="#3a6fc8"/></svg>
  <div class="a" style="left:1148px;top:161px;width:31px;height:30px;background:#3b82dc;border:1px solid #262626"></div><div class="a" style="left:1151px;top:164px;width:25px;height:24px;background:linear-gradient(180deg,#dcdcdc,#f0f0f0)"></div>
  <svg style="left:1151px;top:166px" width="25" height="22" viewBox="0 0 25 22"><path d="M3 9h16l-2 9H5z" fill="#f0f0f0" stroke="#333"/><path d="M19 11c4 0 4 5 0 5" fill="none" stroke="#333" stroke-width="1.5"/><path d="M8 9l3-4 3 4" fill="#f0f0f0" stroke="#333"/></svg>
  <svg style="left:1183px;top:166px" width="26" height="24" viewBox="0 0 26 24"><path d="M3 7h16l-2 9H5z" fill="#e4e4e4" stroke="#aaa"/><path d="M19 9c4 0 4 5 0 5" fill="none" stroke="#ddd" stroke-width="2"/><path d="M8 7l3-4 3 4" fill="#ddd"/><path d="M22 23l2-2" stroke="#fff"/></svg>
  <div class="a" style="left:1226px;top:165px;width:2px;height:24px;background:#1e1e1e"></div>
  <div class="a" style="left:1230px;top:165px;width:2px;height:24px;background:#1e1e1e"></div>
  <div class="t" style="left:1238px;top:167px;font-size:21px;color:#eee">X</div>
  <div class="t" style="left:1269px;top:167px;font-size:21px;color:#eee">Y</div>
  <div class="t" style="left:1300px;top:167px;font-size:21px;color:#eee">Z</div>
  <div class="a" style="left:1326px;top:161px;width:31px;height:30px;background:#3b82dc;border:1px solid #262626"></div>
  <div class="t" style="left:1330px;top:170px;font-size:15px;color:#fff">XY</div>
  <div class="a" style="left:1359px;top:161px;width:31px;height:30px;background:#3b82dc;border:1px solid #262626"></div>
  <div class="t" style="left:1363px;top:164px;font-size:14px;color:#fff">XY</div>
  <svg style="left:1373px;top:178px" width="10" height="10" viewBox="0 0 10 10"><path d="M2 10V5a3 3 0 0 1 6 0v5" fill="none" stroke="#d41414" stroke-width="2.5"/></svg>
  <div class="a" style="left:1219px;top:157px;width:1px;height:38px;background:#2a2a2a"></div><div class="a" style="left:1399px;top:157px;width:1px;height:38px;background:#2a2a2a"></div>
  <!-- left column -->
  <div class="a" style="left:0;top:236px;width:27px;height:940px;background:#3a3a3a"></div>
  <div class="a" style="left:0;top:236px;width:26px;height:11px;background:#464646"></div>
  <div class="a" style="left:0;top:241px;width:24px;height:2px;background:#111"></div>
  <div class="a" style="left:0;top:1146px;width:15px;height:20px;background:#555;border-radius:0 3px 3px 0"></div>
  <svg style="left:4px;top:1151px" width="7" height="10" viewBox="0 0 7 10"><path d="M0 0l7 5-7 5z" fill="#ddd"/></svg>
  <!-- viewport -->
  <div class="a" style="left:26px;top:235px;width:1514px;height:943px;background:#262626"></div>
  <div class="a" style="left:27px;top:237px;width:1512px;height:940px;background:#3a3a3a;border:2px solid #8a7429"></div>
  <div class="a" style="left:159px;top:239px;width:1249px;height:936px;border:1px solid #dcd000;border-top-width:1px"></div>
  <div class="t" style="left:32px;top:245px;font-size:12px;color:#d8d8d8;letter-spacing:-0.4px;word-spacing:-1px">[+] [VRayPhysicalCamera001 ] [シェーディング + エッジ面]</div>
  <!-- axis tripod -->
  <svg style="left:40px;top:1110px" width="50" height="50" viewBox="0 0 50 50"><path d="M14.5 48V19" stroke="#1212e0" stroke-width="1.2"/><path d="M14.5 48H39" stroke="#e01212" stroke-width="1.2"/><path d="M8 48h6.5" stroke="#12b012" stroke-width="1.2"/><text x="11" y="16" font-size="9" fill="#2020ff" font-family="Liberation Sans" font-weight="bold">Z</text><text x="39" y="44" font-size="9" fill="#e01010" font-family="Liberation Sans" font-weight="bold">X</text><text x="7" y="46" font-size="9" fill="#10b010" font-family="Liberation Sans" font-weight="bold">y</text></svg>
  <!-- ground plane lines -->
  <svg style="left:0;top:0" width="1920" height="1306" viewBox="1920 0 1920 1306"><g fill="none" stroke-width="1.2">
   <path d="M2165 879L2290 876L2450 875L2690 877.5L2700 879L2520 881L2542 886.5L2376 888.5L2313 888.5L2293 884.5L2165 884.5z" fill="#3e322e" stroke="none"/>
   <path d="M2080 882L2090 879H2260L2285 875.5H2457L2460 876H2546L2548 874.5H2650L2690 877.5L2704 879" stroke="#1aa89c"/>
   <path d="M2080 886L2090 885.5H2204L2206 884.5H2230" stroke="#1aa89c"/>
   <path d="M2288 878.6L2313 888.5H2376L2378 887.6H2480L2482 886.3H2542L2492 876.7" stroke="#1aa89c"/>
   <path d="M2326 880H2457L2519 880.3H2620L2704 879" stroke="#1aa89c"/>
   <path d="M2170 879.5H2260M2206 884.5H2293M2390 883.7H2491M2400 879.2H2455M2300 876.5H2400M2560 877H2620" stroke="#0a0a6e" stroke-width="1.5"/>
  </g></svg>
<svg style="left:0;top:0" width="1920" height="1306" viewBox="0 0 1920 1306"><defs><filter id="nv" filterUnits="userSpaceOnUse" x="780" y="480" width="500" height="420"><feTurbulence type="fractalNoise" baseFrequency="0.7" numOctaves="1" seed="5" result="n"/><feColorMatrix in="n" type="matrix" values="0 0 0 0 0.08  0 0 0 0 0.08  0 0 0 0 0.45  2.5 0 0 0 -1.5" result="m"/><feComposite in="m" in2="SourceGraphic" operator="in" result="spk"/><feMerge><feMergeNode in="SourceGraphic"/><feMergeNode in="spk"/></feMerge></filter></defs><g fill="#030350" filter="url(#nv)"><path d="M823 700L823 697L823 690L820 690L820 683L823 680L824 676L824 670L825 670L825 665L827 658L830 656L830 650L835 648L835 646L836 642L835 638L837 634L840 626L837 623L842 620L842 615L843 612L844 609L847 607L849 603L852 599L853 591L858 594L862 590L866 587L870 587L872 583L879 587L880 586L886 582L890 585L897 581L899 578L903 576L908 576L910 574L913 567L917 563L917 562L921 557L921 557L924 554L931 549L932 547L937 544L940 541L945 538L947 536L950 531L958 529L960 526L964 527L966 527L973 523L977 528L982 530L986 535L986 535L993 542L994 543L999 545L1001 548L1004 552L1008 552L1015 550L1018 554L1021 552L1028 552L1029 553L1036 552L1038 553L1042 549L1043 543L1042 541L1047 536L1045 530L1048 526L1053 526L1053 520L1060 519L1065 516L1066 515L1073 516L1075 518L1080 520L1086 520L1086 525L1093 528L1095 531L1101 530L1104 536L1107 537L1109 533L1113 529L1118 527L1124 523L1128 524L1132 523L1136 519L1136 518L1140 513L1147 512L1150 512L1155 508L1158 509L1164 508L1168 504L1173 506L1175 509L1182 513L1185 513L1185 520L1184 521L1187 526L1190 529L1193 531L1191 535L1193 539L1199 546L1197 548L1199 551L1201 557L1204 559L1204 563L1206 568L1210 571L1209 574L1213 580L1217 582L1220 587L1221 589L1223 595L1226 598L1228 600L1231 606L1232 609L1237 616L1242 617L1243 624L1241 628L1241 635L1243 639L1243 642L1243 645L1239 649L1238 651L1241 655L1237 659L1240 663L1235 671L1235 675L1237 679L1237 681L1238 683L1240 690L1241 692L1243 700L1241 702L1246 709L1246 710L1242 715L1241 717L1236 720L1233 722L1228 726L1229 728L1224 729L1224 737L1223 740L1222 745L1224 747L1220 754L1223 758L1221 763L1223 763L1226 766L1231 767L1236 772L1233 775L1233 780L1232 781L1230 784L1227 789L1222 792L1220 797L1215 801L1212 799L1208 800L1205 798L1199 799L1196 797L1191 799L1188 799L1185 805L1185 810L1184 810L1178 814L1174 817L1174 818L1167 819L1163 817L1161 816L1154 818L1152 814L1149 813L1143 810L1141 809L1137 807L1137 804L1131 800L1126 801L1122 799L1122 793L1118 793L1113 793L1107 791L1105 791L1098 790L1098 788L1091 785L1087 785L1084 788L1079 787L1076 791L1070 795L1068 795L1066 798L1059 804L1056 801L1051 799L1045 795L1040 798L1039 798L1035 797L1028 798L1027 797L1023 801L1023 806L1019 810L1019 815L1016 819L1013 820L1009 819L1008 823L1000 820L997 823L994 824L989 821L983 821L980 824L974 823L973 823L968 828L965 827L959 829L955 831L951 827L947 827L942 828L935 827L934 825L929 823L923 822L918 820L917 818L912 819L910 814L905 816L897 813L893 811L891 814L885 813L883 809L879 811L875 811L870 808L867 810L863 807L858 806L851 803L847 803L843 804L842 803L840 800L838 795L839 791L835 789L837 783L834 780L834 774L831 770L833 766L831 762L829 758L829 754L827 750L827 748L826 742L828 740L829 734L827 731L824 730L825 722L826 718L826 715L823 710L826 707L826 704z"/><circle cx="821" cy="695" r="5.4"/><circle cx="817" cy="691" r="5.9"/><circle cx="821" cy="677" r="3.1"/><circle cx="821" cy="677" r="5.7"/><circle cx="827" cy="670" r="5.3"/><circle cx="826" cy="658" r="5.8"/><circle cx="828" cy="659" r="2.9"/><circle cx="829" cy="651" r="5.7"/><circle cx="836" cy="649" r="5.4"/><circle cx="835" cy="636" r="5.2"/><circle cx="835" cy="632" r="5.0"/><circle cx="842" cy="618" r="5.0"/><circle cx="842" cy="617" r="4.9"/><circle cx="842" cy="614" r="4.7"/><circle cx="852" cy="604" r="3.7"/><circle cx="850" cy="599" r="5.8"/><circle cx="853" cy="589" r="2.8"/><circle cx="860" cy="588" r="4.8"/><circle cx="869" cy="590" r="3.3"/><circle cx="881" cy="588" r="5.3"/><circle cx="878" cy="584" r="2.8"/><circle cx="887" cy="588" r="3.2"/><circle cx="899" cy="576" r="5.4"/><circle cx="917" cy="563" r="2.9"/><circle cx="924" cy="554" r="5.0"/><circle cx="930" cy="548" r="2.8"/><circle cx="941" cy="542" r="3.2"/><circle cx="948" cy="537" r="4.0"/><circle cx="945" cy="534" r="5.8"/><circle cx="972" cy="525" r="5.7"/><circle cx="983" cy="530" r="6.0"/><circle cx="989" cy="533" r="2.8"/><circle cx="994" cy="544" r="2.6"/><circle cx="1001" cy="547" r="5.1"/><circle cx="1006" cy="550" r="3.9"/><circle cx="1013" cy="552" r="5.0"/><circle cx="1027" cy="552" r="4.1"/><circle cx="1036" cy="551" r="5.5"/><circle cx="1038" cy="555" r="5.3"/><circle cx="1040" cy="551" r="2.5"/><circle cx="1044" cy="543" r="3.1"/><circle cx="1040" cy="542" r="4.1"/><circle cx="1051" cy="523" r="4.0"/><circle cx="1050" cy="521" r="2.8"/><circle cx="1058" cy="521" r="4.0"/><circle cx="1062" cy="516" r="4.7"/><circle cx="1077" cy="521" r="5.3"/><circle cx="1088" cy="520" r="3.5"/><circle cx="1083" cy="526" r="5.6"/><circle cx="1096" cy="533" r="5.3"/><circle cx="1104" cy="534" r="3.1"/><circle cx="1112" cy="528" r="4.1"/><circle cx="1126" cy="521" r="3.6"/><circle cx="1127" cy="526" r="5.4"/><circle cx="1136" cy="518" r="4.2"/><circle cx="1142" cy="516" r="2.9"/><circle cx="1150" cy="515" r="5.9"/><circle cx="1160" cy="507" r="3.8"/><circle cx="1166" cy="506" r="5.8"/><circle cx="1173" cy="504" r="3.0"/><circle cx="1178" cy="507" r="3.3"/><circle cx="1179" cy="513" r="5.1"/><circle cx="1186" cy="529" r="2.7"/><circle cx="1190" cy="528" r="4.4"/><circle cx="1192" cy="533" r="3.0"/><circle cx="1196" cy="540" r="4.8"/><circle cx="1197" cy="548" r="3.1"/><circle cx="1199" cy="551" r="2.7"/><circle cx="1201" cy="554" r="3.9"/><circle cx="1202" cy="561" r="2.9"/><circle cx="1208" cy="566" r="3.2"/><circle cx="1217" cy="585" r="4.2"/><circle cx="1218" cy="588" r="5.1"/><circle cx="1229" cy="600" r="4.4"/><circle cx="1232" cy="612" r="5.5"/><circle cx="1239" cy="618" r="3.1"/><circle cx="1240" cy="615" r="5.9"/><circle cx="1245" cy="622" r="2.5"/><circle cx="1244" cy="643" r="4.4"/><circle cx="1237" cy="650" r="3.6"/><circle cx="1237" cy="650" r="3.8"/><circle cx="1240" cy="677" r="2.9"/><circle cx="1239" cy="680" r="4.8"/><circle cx="1241" cy="683" r="4.2"/><circle cx="1242" cy="692" r="4.3"/><circle cx="1242" cy="689" r="4.0"/><circle cx="1248" cy="708" r="5.9"/><circle cx="1244" cy="711" r="5.6"/><circle cx="1245" cy="717" r="3.8"/><circle cx="1241" cy="716" r="3.8"/><circle cx="1227" cy="727" r="4.7"/><circle cx="1222" cy="728" r="3.5"/><circle cx="1224" cy="739" r="4.4"/><circle cx="1224" cy="755" r="5.6"/><circle cx="1221" cy="765" r="3.5"/><circle cx="1225" cy="763" r="2.8"/><circle cx="1226" cy="763" r="5.4"/><circle cx="1229" cy="766" r="4.3"/><circle cx="1237" cy="773" r="4.0"/><circle cx="1236" cy="776" r="2.8"/><circle cx="1234" cy="783" r="2.7"/><circle cx="1232" cy="780" r="5.6"/><circle cx="1227" cy="789" r="5.6"/><circle cx="1222" cy="789" r="4.7"/><circle cx="1222" cy="797" r="4.5"/><circle cx="1214" cy="801" r="5.5"/><circle cx="1211" cy="802" r="4.8"/><circle cx="1206" cy="799" r="5.6"/><circle cx="1205" cy="799" r="3.7"/><circle cx="1182" cy="805" r="3.6"/><circle cx="1187" cy="808" r="5.4"/><circle cx="1181" cy="813" r="3.2"/><circle cx="1172" cy="817" r="3.8"/><circle cx="1162" cy="816" r="3.1"/><circle cx="1160" cy="817" r="3.7"/><circle cx="1153" cy="817" r="4.5"/><circle cx="1153" cy="812" r="4.8"/><circle cx="1144" cy="809" r="4.4"/><circle cx="1134" cy="806" r="5.5"/><circle cx="1131" cy="799" r="5.6"/><circle cx="1124" cy="802" r="3.7"/><circle cx="1116" cy="794" r="3.7"/><circle cx="1105" cy="793" r="4.2"/><circle cx="1101" cy="789" r="4.2"/><circle cx="1085" cy="787" r="4.4"/><circle cx="1086" cy="791" r="4.4"/><circle cx="1065" cy="796" r="5.1"/><circle cx="1066" cy="798" r="3.4"/><circle cx="1049" cy="799" r="3.6"/><circle cx="1039" cy="797" r="3.9"/><circle cx="1032" cy="797" r="3.2"/><circle cx="1026" cy="796" r="4.4"/><circle cx="1022" cy="803" r="3.5"/><circle cx="1022" cy="807" r="5.8"/><circle cx="1018" cy="814" r="5.9"/><circle cx="1016" cy="819" r="3.2"/><circle cx="1016" cy="822" r="5.1"/><circle cx="1009" cy="824" r="3.3"/><circle cx="1003" cy="819" r="5.2"/><circle cx="998" cy="822" r="4.3"/><circle cx="997" cy="825" r="4.3"/><circle cx="985" cy="820" r="4.4"/><circle cx="971" cy="821" r="4.7"/><circle cx="974" cy="823" r="5.8"/><circle cx="956" cy="829" r="5.1"/><circle cx="949" cy="830" r="5.1"/><circle cx="949" cy="825" r="4.4"/><circle cx="932" cy="826" r="5.6"/><circle cx="926" cy="821" r="5.2"/><circle cx="923" cy="825" r="4.6"/><circle cx="919" cy="817" r="3.5"/><circle cx="910" cy="819" r="3.6"/><circle cx="907" cy="815" r="5.3"/><circle cx="898" cy="812" r="3.3"/><circle cx="895" cy="810" r="3.3"/><circle cx="888" cy="813" r="4.5"/><circle cx="886" cy="812" r="2.6"/><circle cx="882" cy="807" r="4.5"/><circle cx="881" cy="811" r="4.8"/><circle cx="870" cy="807" r="2.7"/><circle cx="860" cy="810" r="4.5"/><circle cx="849" cy="806" r="3.1"/><circle cx="850" cy="801" r="4.2"/><circle cx="842" cy="806" r="3.9"/><circle cx="842" cy="800" r="5.0"/><circle cx="840" cy="790" r="4.2"/><circle cx="834" cy="787" r="4.7"/><circle cx="840" cy="780" r="5.9"/><circle cx="832" cy="781" r="4.4"/><circle cx="831" cy="768" r="4.9"/><circle cx="836" cy="763" r="2.7"/><circle cx="830" cy="755" r="3.9"/><circle cx="827" cy="747" r="3.6"/><circle cx="826" cy="740" r="3.8"/><circle cx="823" cy="729" r="2.7"/><circle cx="826" cy="723" r="3.3"/><circle cx="823" cy="716" r="4.3"/><circle cx="829" cy="716" r="3.7"/><circle cx="821" cy="711" r="5.1"/><circle cx="827" cy="706" r="3.3"/><circle cx="824" cy="704" r="4.7"/><path d="M1134 817L1134 821L1130 826L1128 829L1125 833L1122 837L1117 838L1113 838L1108 835L1104 837L1102 833L1096 829L1093 827L1094 821L1094 817L1094 813L1095 807L1098 806L1099 802L1105 797L1109 799L1113 798L1117 795L1121 797L1125 802L1128 804L1131 809L1133 813z"/><path d="M879.0 856L882.0 800H890.0L893.0 856z"/><path d="M963.0 872L966.0 815H974.0L977.0 872z"/><path d="M1064.0 836L1066.5 760H1073.5L1076.0 836z"/><path d="M1144.0 875L1147.0 800H1155.0L1158.0 875z"/><path d="M1150 790L1132 774M1079 830L1062 808" stroke="#030350" stroke-width="3"/></g><circle cx="991" cy="746" r="3" fill="#3a3a3a"/><circle cx="956" cy="776" r="2.5" fill="#3a3a3a"/><circle cx="946" cy="767" r="2" fill="#3a3a3a"/><circle cx="1070" cy="752" r="2" fill="#3a3a3a"/><circle cx="1174" cy="724" r="2" fill="#3a3a3a"/></svg>
  <!-- V-Ray messages window -->
  <div class="a" style="left:151px;top:257px;width:318px;height:237px;border-radius:6px 6px 3px 3px;background:linear-gradient(180deg,#4e565e 0%,#6c757e 10%,#5f6870 40%,#3c444c 100%);border:1px solid #1c2228;box-shadow:inset 0 0 0 1px #8f9aa4"></div>
  <div class="a" style="left:160px;top:260px;width:160px;height:24px;background:#9aa3ab;filter:blur(7px);opacity:.45"></div>
  <svg style="left:160px;top:266px" width="15" height="12" viewBox="0 0 15 12"><rect x="0" y="0" width="15" height="12" fill="#f0f0f0"/><rect x="1" y="1" width="6" height="10" fill="#3b8f9c"/><rect x="9" y="1" width="4" height="4" fill="#d0d0d0"/></svg>
  <div class="t" style="left:181px;top:264px;font-size:13px;color:#111;text-shadow:0 0 6px #c8d0d8,0 0 3px #c8d0d8">V-Ray messages</div>
  <div class="a" style="left:358px;top:257px;width:104px;height:20px;border:1px solid #a9b2ba;border-top:none;border-radius:0 0 4px 4px;background:linear-gradient(180deg,#66707a,#59636c)"></div>
  <div class="a" style="left:386px;top:257px;width:1px;height:19px;background:#a9b2ba"></div>
  <div class="a" style="left:413px;top:257px;width:1px;height:19px;background:#a9b2ba"></div>
  <div class="a" style="left:367px;top:264px;width:10px;height:3px;background:#fff;border:1px solid #333;box-sizing:content-box"></div>
  <div class="a" style="left:394px;top:261px;width:10px;height:8px;border:2px solid #fff;outline:1px solid #333"></div>
  <div class="t" style="left:429px;top:261px;font-size:12px;font-weight:bold;color:#fff;text-shadow:0 0 1px #222">X</div>
  <!-- client -->
  <div class="a" style="left:158px;top:286px;width:303px;height:201px;background:#fff;border:1px solid #90989f"></div>
  <div class="a" style="left:159px;top:287px;width:301px;height:200px;overflow:hidden;font-size:11px;color:#000;line-height:13px;letter-spacing:-0.25px">
    <div class="t" style="left:7px;top:1px;line-height:13px">Reflection rays: 0</div>
    <div class="t" style="left:7px;top:14px;line-height:13px">Refraction rays: 0</div>
    <div class="t" style="left:7px;top:27px;line-height:13px">Unshaded rays: 0</div>
    <div class="t" style="left:1px;top:40px;line-height:13px">Number of intersectable primitives: 8</div>
    <div class="t" style="left:7px;top:53px;line-height:13px">SD triangles: 0</div>
    <div class="t" style="left:7px;top:66px;line-height:13px">MB triangles: 0</div>
    <div class="t" style="left:7px;top:79px;line-height:13px">Static primitives: 8</div>
    <div class="t" style="left:7px;top:92px;line-height:13px">Moving primitives: 0</div>
    <div class="t" style="left:7px;top:105px;line-height:13px">Infinite primitives: 0</div>
    <div class="t" style="left:1px;top:118px;line-height:13px">Region rendering: 91.6 s</div>
    <div class="t" style="left:1px;top:131px;line-height:13px">Total frame time: 96.6 s</div>
    <div class="t" style="left:1px;top:144px;line-height:13px">Total sequence time: 97.8 s</div>
    <div class="a" style="left:0;top:156px;width:284px;height:13px;background:#7fc07f"></div>
    <div class="t" style="left:1px;top:157px;line-height:13px;color:#0d4d0d">warning: 0 error(s), 1 warning(s)</div>
    <div class="t" style="left:1px;top:170px;line-height:13px;letter-spacing:-0.5px">=================================</div>
    <!-- v scrollbar -->
    <div class="a" style="left:284px;top:0;width:17px;height:183px;background:#ececec;border-left:1px solid #e0e0e0"></div>
    <svg style="left:288px;top:8px" width="9" height="5" viewBox="0 0 9 5"><path d="M0 5l4.5-5L9 5z" fill="#333"/></svg>
    <div class="a" style="left:285px;top:149px;width:15px;height:15px;background:linear-gradient(90deg,#f4f4f4,#d8d8d8);border:1px solid #9a9a9a;border-radius:2px"></div>
    <svg style="left:288px;top:168px" width="9" height="5" viewBox="0 0 9 5"><path d="M0 0h9L4.5 5z" fill="#333"/></svg>
    <!-- h scrollbar -->
    <div class="a" style="left:0;top:183px;width:301px;height:17px;background:#ececec;border-top:1px solid #e2e2e2"></div>
    <svg style="left:6px;top:188px" width="5" height="9" viewBox="0 0 5 9"><path d="M5 0v9L0 4.5z" fill="#333"/></svg>
    <div class="a" style="left:18px;top:185px;width:19px;height:14px;background:linear-gradient(180deg,#f4f4f4,#d8d8d8);border:1px solid #9a9a9a;border-radius:2px"></div>
    <div class="t" style="left:23px;top:188px;font-size:8px;color:#555;letter-spacing:0.5px">III</div>
    <svg style="left:269px;top:188px" width="5" height="9" viewBox="0 0 5 9"><path d="M0 0v9l5-4.5z" fill="#333"/></svg>
  </div>
  <!-- command panel (local x = global-1920) -->
  <div class="a" style="left:1540px;top:236px;width:368px;height:985px;background:#444"></div>
  <div class="a" style="left:1540px;top:265px;width:366px;height:1px;background:#222"></div>
  <!-- tabs -->
  <div class="a" style="left:1541px;top:240px;width:29px;height:25px;background:#3e3e3e;border:1px solid #2a2a2a;border-bottom:none;border-radius:4px 4px 0 0"></div>
  <div class="a" style="left:1571px;top:239px;width:29px;height:27px;background:#4a4a4a;border:1px solid #222;border-bottom:none;border-radius:4px 4px 0 0"></div>
  <div class="a" style="left:1601px;top:240px;width:27px;height:25px;background:#3e3e3e;border:1px solid #2a2a2a;border-bottom:none;border-radius:4px 4px 0 0"></div>
  <div class="a" style="left:1629px;top:240px;width:27px;height:25px;background:#3e3e3e;border:1px solid #2a2a2a;border-bottom:none;border-radius:4px 4px 0 0"></div>
  <div class="a" style="left:1657px;top:240px;width:28px;height:25px;background:#3e3e3e;border:1px solid #2a2a2a;border-bottom:none;border-radius:4px 4px 0 0"></div>
  <div class="a" style="left:1686px;top:240px;width:29px;height:25px;background:#3e3e3e;border:1px solid #2a2a2a;border-bottom:none;border-radius:4px 4px 0 0"></div>
  <svg style="left:1548px;top:245px" width="16" height="16" viewBox="0 0 16 16"><path d="M8 0v16M0 8h16M2.5 2.5l11 11M13.5 2.5l-11 11" stroke="#d83020" stroke-width="1"/><circle cx="8" cy="8" r="4.5" fill="#ffb000"/><circle cx="8" cy="8" r="2" fill="#fff6a0"/></svg>
  <svg style="left:1576px;top:244px" width="19" height="19" viewBox="0 0 19 19"><rect x="1" y="1" width="17" height="17" fill="none" stroke="#ccc" stroke-width=".8"/><path d="M3 17A14 14 0 0 1 17 3" fill="none" stroke="#2f8ff0" stroke-width="3"/><path d="M6 17A11 11 0 0 1 17 6" fill="none" stroke="#cfe6ff" stroke-width="1.2"/></svg>
  <svg style="left:1605px;top:244px" width="19" height="19" viewBox="0 0 19 19"><rect x="6" y="0" width="7" height="6" fill="#ccc"/><path d="M9.5 6v4M3 10h13M3 10v3M16 10v3M9.5 10v3" stroke="#ccc"/><rect x="0" y="13" width="6" height="6" fill="#ccc"/><rect x="6.5" y="13" width="6" height="6" fill="#ccc"/><rect x="13" y="13" width="6" height="6" fill="#ccc"/></svg>
  <svg style="left:1633px;top:244px" width="19" height="19" viewBox="0 0 19 19"><circle cx="10" cy="9.5" r="7.5" fill="none" stroke="#ddd" stroke-width="1.5"/><circle cx="10" cy="9.5" r="4.5" fill="none" stroke="#ddd" stroke-width="1.5"/><circle cx="10" cy="9.5" r="1.8" fill="#ddd"/><path d="M1 5a10 10 0 0 0 0 9" stroke="#999" fill="none"/></svg>
  <svg style="left:1661px;top:244px" width="20" height="19" viewBox="0 0 20 19"><rect x="1" y="1" width="18" height="13" fill="#eee" stroke="#fff"/><rect x="3" y="3" width="14" height="9" fill="#555"/><rect x="6" y="4" width="8" height="6" fill="none" stroke="#fff"/><rect x="8" y="14" width="4" height="3" fill="#ddd"/><rect x="4" y="17" width="12" height="2" fill="#ddd"/></svg>
  <svg style="left:1690px;top:244px" width="20" height="19" viewBox="0 0 20 19"><path d="M2 18l9-9" stroke="#c88848" stroke-width="3"/><path d="M8 6l5-5 6 4-3 2-2-1-4 4z" fill="#bbb"/></svg>
  <!-- name & color -->
  <div class="a" style="left:1550px;top:271px;width:146px;height:18px;background:#555;border:2px solid #1c1c1c;border-right-color:#555;border-bottom-color:#555"></div>
  <div class="a" style="left:1700px;top:271px;width:16px;height:18px;background:#9cc5f0;border:1px solid #5c7ea8"></div>
  <!-- modifier list -->
  <div class="a" style="left:1550px;top:296px;width:164px;height:24px;background:#585858;border:2px solid #1c1c1c;border-right-color:#444;border-bottom-color:#444"></div>
  <div class="t" style="left:1554px;top:302px;font-size:12px;color:#e0e0e0;letter-spacing:-1px">モディファイヤ リスト</div>
  <div class="a" style="left:1699px;top:298px;width:14px;height:20px;background:#fff"></div>
  <svg style="left:1701px;top:306px" width="10" height="5" viewBox="0 0 10 5"><path d="M0 0h10L5 5z" fill="#000"/></svg>
  <!-- modifier buttons -->
  <div class="a" style="left:1556px;top:326px;width:72px;height:19px;background:#474747;border:1px solid #2a2a2a;border-top-color:#555;border-left-color:#555"></div>
  <div class="a" style="left:1631px;top:326px;width:72px;height:19px;background:#474747;border:1px solid #2a2a2a;border-top-color:#555;border-left-color:#555"></div>
  <div class="a" style="left:1556px;top:349px;width:72px;height:19px;background:#474747;border:1px solid #2a2a2a;border-top-color:#555;border-left-color:#555"></div>
  <div class="a" style="left:1631px;top:349px;width:72px;height:19px;background:#474747;border:1px solid #2a2a2a;border-top-color:#555;border-left-color:#555"></div>
  <div class="a" style="left:1556px;top:372px;width:72px;height:19px;background:#474747;border:1px solid #2a2a2a;border-top-color:#555;border-left-color:#555"></div>
  <div class="a" style="left:1631px;top:372px;width:72px;height:19px;background:#474747;border:1px solid #2a2a2a;border-top-color:#555;border-left-color:#555"></div>
  <div class="a" style="left:1556px;top:395px;width:72px;height:19px;background:#474747;border:1px solid #2a2a2a;border-top-color:#555;border-left-color:#555"></div>
  <div class="a" style="left:1631px;top:395px;width:72px;height:19px;background:#474747;border:1px solid #2a2a2a;border-top-color:#555;border-left-color:#555"></div>
  <div class="a" style="left:1556px;top:326px;width:147px;height:88px;overflow:hidden;font-size:11px;color:#101010">
    <div class="t" style="left:18px;top:4px;letter-spacing:-1px;font-size:12px">押し出し</div>
    <div class="t" style="left:92px;top:4px;letter-spacing:-1px;font-size:12px">スウィープ</div>
    <div class="t" style="left:1px;top:27px;letter-spacing:-1.5px;font-size:12px">スプライン選択</div>
    <div class="t" style="left:75px;top:27px;letter-spacing:-1.5px;font-size:12px;width:72px;overflow:hidden">W マッピングを追</div>
    <div class="t" style="left:1px;top:50px;letter-spacing:-1.5px;font-size:12px">ボリューム選択</div>
    <div class="t" style="left:92px;top:50px;letter-spacing:-1px;font-size:12px">FFD 選択</div>
    <div class="t" style="left:12px;top:73px;letter-spacing:-0.5px;font-size:12px;color:#2a2a2a">FFD 2x2x2</div>
    <div class="t" style="left:76px;top:73px;letter-spacing:-1.5px;font-size:12px">サーフェス選択</div>
  </div>
  <!-- stack view -->
  <div class="a" style="left:1550px;top:422px;width:162px;height:124px;background:#555;border:2px solid #e8e8e8"></div>
  <!-- stack icons -->
  <svg style="left:1567px;top:555px" width="135" height="18" viewBox="0 0 135 18"><path d="M1 9h8M9 5v8h8V5z" stroke="#ddd" fill="none"/><path d="M22 3v14" stroke="#222"/><rect x="27" y="0" width="20" height="18" fill="none" stroke="#2a2a2a"/><path d="M34 4v10M40 4v10" stroke="#ddd" stroke-width="1.5"/><path d="M52 3v14" stroke="#222"/><path d="M57 5l5 8 5-8M62 13V6" stroke="#ddd" fill="none"/><rect x="74" y="5" width="7" height="9" rx="3" fill="none" stroke="#ddd"/><path d="M88 3v14" stroke="#222"/><rect x="94" y="2" width="14" height="14" fill="#fff" stroke="#1818a0" stroke-width="1.5"/><rect x="97" y="5" width="8" height="3" fill="#222"/><rect x="97" y="10" width="8" height="3" fill="#222"/></svg>
  <div class="a" style="left:1543px;top:583px;width:176px;height:3px;background:#0c0c0c"></div>
  <div class="a" style="left:1542px;top:594px;width:175px;height:622px;border:1px solid #2c2c2c;border-right-color:#3a3a3a"></div>
  <div class="a" style="left:1725px;top:266px;width:2px;height:955px;background:#1c1c1c"></div>
  <div class="a" style="left:1726px;top:266px;width:175px;height:950px;border:1px solid #2c2c2c;border-top:none"></div>
  <div class="a" style="left:1540px;top:1221px;width:368px;height:1px;background:#222"></div>
<div class="a" style="left:0;top:1176px;width:27px;height:46px;background:#3d5f93"></div>
<div class="a" style="left:0;top:1184px;width:25px;height:27px;background:#5e6e84;border:1px solid #4a5a70;border-left:none;border-radius:0 3px 3px 0"></div>
<div class="a" style="left:27px;top:1177px;width:1513px;height:18px;background:#444"></div>
<div class="a" style="left:28px;top:1177px;width:15px;height:17px;background:#4a4a4a;border:1px solid #333"></div>
<div class="t" style="left:31px;top:1178px;font-size:13px;color:#d0d0d0">&lt;</div>
<div class="a" style="left:43px;top:1177px;width:125px;height:17px;background:#3c3c3c;border-bottom:2px solid #111;border-right:2px solid #111"></div>
<div class="t" style="left:87px;top:1180px;font-size:12px;color:#d8d8d8">0 / 100</div>
<div class="a" style="left:168px;top:1177px;width:16px;height:17px;background:#4a4a4a;border:1px solid #333"></div>
<div class="t" style="left:171px;top:1178px;font-size:13px;color:#d0d0d0">&gt;</div>
<div class="a" style="left:27px;top:1195px;width:1513px;height:27px;background:#444"></div>
<svg style="left:39px;top:1199px" width="18" height="18" viewBox="0 0 18 18"><rect x="0.5" y="0.5" width="17" height="5" fill="none" stroke="#ddd"/><path d="M3 3h4M10 3h5" stroke="#ddd"/><path d="M4 13V8M2 10l2-2 2 2M13 8v5M11 11l2 2 2-2" stroke="#ddd" fill="none"/><rect x="0.5" y="14.5" width="17" height="3" fill="none" stroke="#ddd"/></svg>
<div class="a" style="left:78px;top:1196px;width:1410px;height:25px;background:#2e2e2e"></div>
<svg style="left:0;top:1196px" width="1500" height="26" viewBox="0 0 1500 26"><path d="M83.5 1V13" stroke="#a8a8a8"/><path d="M97.5 1V12" stroke="#8a8a8a"/><path d="M111.5 1V12" stroke="#8a8a8a"/><path d="M125.5 1V12" stroke="#8a8a8a"/><path d="M139.5 1V12" stroke="#8a8a8a"/><path d="M153.5 1V13" stroke="#a8a8a8"/><path d="M167.5 1V12" stroke="#8a8a8a"/><path d="M181.5 1V12" stroke="#8a8a8a"/><path d="M195.5 1V12" stroke="#8a8a8a"/><path d="M209.5 1V12" stroke="#8a8a8a"/><path d="M223.5 1V13" stroke="#a8a8a8"/><path d="M237.5 1V12" stroke="#8a8a8a"/><path d="M251.5 1V12" stroke="#8a8a8a"/><path d="M265.5 1V12" stroke="#8a8a8a"/><path d="M279.5 1V12" stroke="#8a8a8a"/><path d="M293.5 1V13" stroke="#a8a8a8"/><path d="M307.5 1V12" stroke="#8a8a8a"/><path d="M321.5 1V12" stroke="#8a8a8a"/><path d="M335.5 1V12" stroke="#8a8a8a"/><path d="M349.5 1V12" stroke="#8a8a8a"/><path d="M363.5 1V13" stroke="#a8a8a8"/><path d="M377.5 1V12" stroke="#8a8a8a"/><path d="M391.5 1V12" stroke="#8a8a8a"/><path d="M405.5 1V12" stroke="#8a8a8a"/><path d="M419.5 1V12" stroke="#8a8a8a"/><path d="M433.5 1V13" stroke="#a8a8a8"/><path d="M447.5 1V12" stroke="#8a8a8a"/><path d="M461.5 1V12" stroke="#8a8a8a"/><path d="M475.5 1V12" stroke="#8a8a8a"/><path d="M489.5 1V12" stroke="#8a8a8a"/><path d="M503.5 1V13" stroke="#a8a8a8"/><path d="M517.5 1V12" stroke="#8a8a8a"/><path d="M531.5 1V12" stroke="#8a8a8a"/><path d="M545.5 1V12" stroke="#8a8a8a"/><path d="M559.5 1V12" stroke="#8a8a8a"/><path d="M573.5 1V13" stroke="#a8a8a8"/><path d="M587.5 1V12" stroke="#8a8a8a"/><path d="M601.5 1V12" stroke="#8a8a8a"/><path d="M615.5 1V12" stroke="#8a8a8a"/><path d="M629.5 1V12" stroke="#8a8a8a"/><path d="M643.5 1V13" stroke="#a8a8a8"/><path d="M657.5 1V12" stroke="#8a8a8a"/><path d="M671.5 1V12" stroke="#8a8a8a"/><path d="M685.5 1V12" stroke="#8a8a8a"/><path d="M699.5 1V12" stroke="#8a8a8a"/><path d="M713.5 1V13" stroke="#a8a8a8"/><path d="M727.5 1V12" stroke="#8a8a8a"/><path d="M741.5 1V12" stroke="#8a8a8a"/><path d="M755.5 1V12" stroke="#8a8a8a"/><path d="M769.5 1V12" stroke="#8a8a8a"/><path d="M783.5 1V13" stroke="#a8a8a8"/><path d="M797.5 1V12" stroke="#8a8a8a"/><path d="M811.5 1V12" stroke="#8a8a8a"/><path d="M825.5 1V12" stroke="#8a8a8a"/><path d="M839.5 1V12" stroke="#8a8a8a"/><path d="M853.5 1V13" stroke="#a8a8a8"/><path d="M867.5 1V12" stroke="#8a8a8a"/><path d="M881.5 1V12" stroke="#8a8a8a"/><path d="M895.5 1V12" stroke="#8a8a8a"/><path d="M909.5 1V12" stroke="#8a8a8a"/><path d="M923.5 1V13" stroke="#a8a8a8"/><path d="M937.5 1V12" stroke="#8a8a8a"/><path d="M951.5 1V12" stroke="#8a8a8a"/><path d="M965.5 1V12" stroke="#8a8a8a"/><path d="M979.5 1V12" stroke="#8a8a8a"/><path d="M993.5 1V13" stroke="#a8a8a8"/><path d="M1007.5 1V12" stroke="#8a8a8a"/><path d="M1021.5 1V12" stroke="#8a8a8a"/><path d="M1035.5 1V12" stroke="#8a8a8a"/><path d="M1049.5 1V12" stroke="#8a8a8a"/><path d="M1063.5 1V13" stroke="#a8a8a8"/><path d="M1077.5 1V12" stroke="#8a8a8a"/><path d="M1091.5 1V12" stroke="#8a8a8a"/><path d="M1105.5 1V12" stroke="#8a8a8a"/><path d="M1119.5 1V12" stroke="#8a8a8a"/><path d="M1133.5 1V13" stroke="#a8a8a8"/><path d="M1147.5 1V12" stroke="#8a8a8a"/><path d="M1161.5 1V12" stroke="#8a8a8a"/><path d="M1175.5 1V12" stroke="#8a8a8a"/><path d="M1189.5 1V12" stroke="#8a8a8a"/><path d="M1203.5 1V13" stroke="#a8a8a8"/><path d="M1217.5 1V12" stroke="#8a8a8a"/><path d="M1231.5 1V12" stroke="#8a8a8a"/><path d="M1245.5 1V12" stroke="#8a8a8a"/><path d="M1259.5 1V12" stroke="#8a8a8a"/><path d="M1273.5 1V13" stroke="#a8a8a8"/><path d="M1287.5 1V12" stroke="#8a8a8a"/><path d="M1301.5 1V12" stroke="#8a8a8a"/><path d="M1315.5 1V12" stroke="#8a8a8a"/><path d="M1329.5 1V12" stroke="#8a8a8a"/><path d="M1343.5 1V13" stroke="#a8a8a8"/><path d="M1357.5 1V12" stroke="#8a8a8a"/><path d="M1371.5 1V12" stroke="#8a8a8a"/><path d="M1385.5 1V12" stroke="#8a8a8a"/><path d="M1399.5 1V12" stroke="#8a8a8a"/><path d="M1413.5 1V13" stroke="#a8a8a8"/><path d="M1427.5 1V12" stroke="#8a8a8a"/><path d="M1441.5 1V12" stroke="#8a8a8a"/><path d="M1455.5 1V12" stroke="#8a8a8a"/><path d="M1469.5 1V12" stroke="#8a8a8a"/><path d="M1483.5 1V13" stroke="#a8a8a8"/></svg>
<div class="t" style="left:80px;top:1210px;font-size:11px;color:#c8c8c8;letter-spacing:-0.5px">0</div>
<div class="t" style="left:150px;top:1210px;font-size:11px;color:#c8c8c8;letter-spacing:-0.5px">5</div>
<div class="t" style="left:216px;top:1210px;font-size:11px;color:#c8c8c8;letter-spacing:-0.5px">10</div>
<div class="t" style="left:286px;top:1210px;font-size:11px;color:#c8c8c8;letter-spacing:-0.5px">15</div>
<div class="t" style="left:356px;top:1210px;font-size:11px;color:#c8c8c8;letter-spacing:-0.5px">20</div>
<div class="t" style="left:426px;top:1210px;font-size:11px;color:#c8c8c8;letter-spacing:-0.5px">25</div>
<div class="t" style="left:496px;top:1210px;font-size:11px;color:#c8c8c8;letter-spacing:-0.5px">30</div>
<div class="t" style="left:566px;top:1210px;font-size:11px;color:#c8c8c8;letter-spacing:-0.5px">35</div>
<div class="t" style="left:636px;top:1210px;font-size:11px;color:#c8c8c8;letter-spacing:-0.5px">40</div>
<div class="t" style="left:706px;top:1210px;font-size:11px;color:#c8c8c8;letter-spacing:-0.5px">45</div>
<div class="t" style="left:776px;top:1210px;font-size:11px;color:#c8c8c8;letter-spacing:-0.5px">50</div>
<div class="t" style="left:846px;top:1210px;font-size:11px;color:#c8c8c8;letter-spacing:-0.5px">55</div>
<div class="t" style="left:916px;top:1210px;font-size:11px;color:#c8c8c8;letter-spacing:-0.5px">60</div>
<div class="t" style="left:986px;top:1210px;font-size:11px;color:#c8c8c8;letter-spacing:-0.5px">65</div>
<div class="t" style="left:1056px;top:1210px;font-size:11px;color:#c8c8c8;letter-spacing:-0.5px">70</div>
<div class="t" style="left:1126px;top:1210px;font-size:11px;color:#c8c8c8;letter-spacing:-0.5px">75</div>
<div class="t" style="left:1196px;top:1210px;font-size:11px;color:#c8c8c8;letter-spacing:-0.5px">80</div>
<div class="t" style="left:1266px;top:1210px;font-size:11px;color:#c8c8c8;letter-spacing:-0.5px">85</div>
<div class="t" style="left:1336px;top:1210px;font-size:11px;color:#c8c8c8;letter-spacing:-0.5px">90</div>
<div class="t" style="left:1406px;top:1210px;font-size:11px;color:#c8c8c8;letter-spacing:-0.5px">95</div>
<div class="t" style="left:1473px;top:1210px;font-size:11px;color:#c8c8c8;letter-spacing:-0.5px">100</div>
<div class="a" style="left:79px;top:1197px;width:8px;height:24px;background:#a08f1e;opacity:.75;border:1px solid #c2ae2a"></div>
<div class="a" style="left:1491px;top:1195px;width:49px;height:27px;background:#444"></div>
<div class="a" style="left:0;top:1222px;width:1540px;height:44px;background:#444"></div>
<div class="a" style="left:0;top:1223px;width:86px;height:25px;background:#d8c4c6;border:1px solid #888;border-left:none"></div>
<div class="a" style="left:0;top:1249px;width:86px;height:17px;background:#fff"></div>
<div class="t" style="left:-10px;top:1252px;font-size:12px;color:#000;letter-spacing:-0.3px">MAXScript による</div>
<div class="a" style="left:89px;top:1222px;width:3px;height:44px;background:#333"></div>
<div class="a" style="left:93px;top:1226px;width:901px;height:21px;background:#3f3f3f;border:1px solid #2a2a2a;border-bottom-color:#555;border-right-color:#555"></div>
<div class="t" style="left:100px;top:1230px;font-size:13px;color:#d8d8d8;letter-spacing:-2px">何も選択されていません</div>
<div class="a" style="left:93px;top:1251px;width:1224px;height:16px;background:#3f3f3f;border:1px solid #2a2a2a;border-bottom:none;border-right-color:#555"></div>
<div class="t" style="left:100px;top:1254px;font-size:12px;color:#cfcfcf;letter-spacing:-1.2px">レンダリング時間&nbsp; 0:01:37</div>
<div class="a" style="left:997px;top:1226px;width:22px;height:21px;background:#3b82dc;border:1px solid #222"></div>
<svg style="left:1001px;top:1228px" width="14" height="18" viewBox="0 0 14 18"><path d="M7 1a5 5 0 0 1 5 5c0 3-3 4-3 7H5c0-3-3-4-3-7a5 5 0 0 1 5-5z" fill="#e88a94" stroke="#fff"/><rect x="5" y="13" width="4" height="4" fill="#fff"/></svg>
<svg style="left:1028px;top:1229px" width="12" height="15" viewBox="0 0 12 15"><path d="M3 7V4a3 3 0 0 1 6 0v3" stroke="#bbb" stroke-width="1.5" fill="none"/><rect x="1.5" y="7" width="9" height="7" fill="#999"/></svg>
<svg style="left:1054px;top:1229px" width="15" height="15" viewBox="0 0 15 15"><rect x="0" y="0" width="15" height="15" fill="#eee"/><rect x="4" y="4" width="7" height="7" fill="#444"/><circle cx="7.5" cy="7.5" r="2" fill="#eee"/><path d="M0 7.5h4M11 7.5h4M7.5 0v4M7.5 11v4" stroke="#444" stroke-width="1"/></svg>
<div class="t" style="left:1078px;top:1232px;font-size:12px;color:#c8c8c8">X:</div>
<div class="t" style="left:1167px;top:1232px;font-size:12px;color:#c8c8c8">Y:</div>
<div class="t" style="left:1255px;top:1232px;font-size:12px;color:#c8c8c8">Z:</div>
<div class="a" style="left:1095px;top:1226px;width:58px;height:21px;background:#4a4a4a;border:2px solid #1c1c1c;border-right-color:#5a5a5a;border-bottom-color:#5a5a5a"></div>
<div class="a" style="left:1184px;top:1226px;width:58px;height:21px;background:#4a4a4a;border:2px solid #1c1c1c;border-right-color:#5a5a5a;border-bottom-color:#5a5a5a"></div>
<div class="a" style="left:1273px;top:1226px;width:58px;height:21px;background:#4a4a4a;border:2px solid #1c1c1c;border-right-color:#5a5a5a;border-bottom-color:#5a5a5a"></div>
<div class="a" style="left:1345px;top:1226px;width:99px;height:21px;background:#474747;border:1px solid #333"></div>
<div class="t" style="left:1351px;top:1231px;font-size:12px;color:#cfcfcf;letter-spacing:-1.1px">グリッド = 10.0mm</div>
<div class="a" style="left:1320px;top:1251px;width:22px;height:16px;background:#3b82dc;border:1px solid #222"></div>
<svg style="left:1324px;top:1254px" width="14" height="13" viewBox="0 0 14 13"><rect x="1" y="3" width="10" height="10" fill="#f0f0f0" stroke="#333"/><path d="M1 3l3-3h10v10l-3 3" fill="#ddd" stroke="#333"/></svg>
<div class="a" style="left:1345px;top:1251px;width:99px;height:16px;background:#474747;border:1px solid #333;border-bottom:none"></div>
<div class="t" style="left:1351px;top:1254px;font-size:12px;color:#cfcfcf;letter-spacing:-0.8px">時間タグを追加</div>
<div class="a" style="left:1448px;top:1222px;width:42px;height:44px;background:#444;border-left:1px solid #333;border-right:1px solid #333"></div>
<svg style="left:1455px;top:1238px" width="26" height="12" viewBox="0 0 26 12"><circle cx="5" cy="6" r="4" fill="none" stroke="#000" stroke-width="2.2"/><path d="M9 6h16M19 6v5M23 6v4" stroke="#000" stroke-width="2.2"/></svg>
<div class="a" style="left:1540px;top:1222px;width:368px;height:44px;background:#444"></div>
<div class="a" style="left:1495px;top:1226px;width:64px;height:19px;background:#474747;border:1px solid #333"></div>
<div class="t" style="left:1501px;top:1230px;font-size:12px;color:#c8c8c8;letter-spacing:-1.6px">オートキー</div>
<div class="a" style="left:1495px;top:1248px;width:64px;height:19px;background:#474747;border:1px solid #333;border-bottom:none"></div>
<div class="t" style="left:1501px;top:1252px;font-size:12px;color:#c8c8c8;letter-spacing:-1.6px">セットキー</div>
<div class="dd" style="left:1564px;top:1226px;width:114px;height:20px;border-width:1px;border-color:#111"><span class="t" style="left:3px;top:3px;font-size:13px;color:#000">選択</span><i></i></div>
<svg style="left:1567px;top:1249px" width="20" height="17" viewBox="0 0 20 17"><path d="M1 16C5 16 5 1 9 1s4 15 9 15" stroke="#c83a3a" stroke-width="1.4" fill="none"/><path d="M1 12C6 8 12 4 18 2" stroke="#6a8ad0" stroke-width="1" fill="none"/></svg>
<div class="a" style="left:1590px;top:1248px;width:88px;height:19px;background:#474747;border:1px solid #333;border-bottom:none"></div>
<div class="t" style="left:1600px;top:1252px;font-size:12px;color:#c8c8c8;letter-spacing:-0.6px">キーフィルタ...</div>
<svg style="left:1688px;top:1228px" width="18" height="17" viewBox="0 0 18 17"><path d="M1 2v12M3 8l6-5v10zM9 8l6-5v10zM16 2v12" stroke="#ddd" fill="none" stroke-width="1.2"/></svg>
<svg style="left:1712px;top:1228px" width="18" height="17" viewBox="0 0 18 17"><path d="M1 8l6-5v10z" fill="none" stroke="#ddd" stroke-width="1.2"/><path d="M9 3v10M12 3v10M15 3v10" stroke="#ddd" stroke-width="1.5"/></svg>
<svg style="left:1736px;top:1228px" width="18" height="17" viewBox="0 0 18 17"><path d="M3 2l10 6-10 6z" fill="none" stroke="#ddd" stroke-width="1.3"/><path d="M14 15l2-2" stroke="#fff"/></svg>
<svg style="left:1760px;top:1228px" width="18" height="17" viewBox="0 0 18 17"><path d="M1 3v10M4 3v10M7 3v10" stroke="#ddd" stroke-width="1.5"/><path d="M9 3l6 5-6 5z" fill="none" stroke="#ddd" stroke-width="1.2"/></svg>
<svg style="left:1784px;top:1228px" width="18" height="17" viewBox="0 0 18 17"><path d="M1 2v12M1 3l6 5-6 5M8 3l6 5-6 5M15 2v12" stroke="#ddd" fill="none" stroke-width="1.2"/></svg>
<svg style="left:1813px;top:1228px" width="18" height="17" viewBox="0 0 18 17"><path d="M8 1v10M3 8h10" stroke="#ddd"/><path d="M5 10l3 5 3-5z" fill="#d22"/><circle cx="8" cy="7" r="2" fill="#fff"/></svg>
<svg style="left:1836px;top:1228px" width="18" height="17" viewBox="0 0 18 17"><path d="M2 4l7-3 7 3-7 3z" fill="#d8d8f0"/><path d="M2 4v8l7 4 7-4V4l-7 3z" fill="#1818a0" stroke="#fff" stroke-width=".6"/></svg>
<svg style="left:1859px;top:1228px" width="18" height="17" viewBox="0 0 18 17"><path d="M4 12A6 6 0 1 1 13 12" fill="none" stroke="#ddd" stroke-width="1.5"/><path d="M8 0v4" stroke="#e22"/><path d="M2 10l2 3 2-3M11 10l2 3 2-3" fill="none" stroke="#ddd"/></svg>
<svg style="left:1883px;top:1228px" width="18" height="17" viewBox="0 0 18 17"><rect x="1" y="6" width="7" height="8" fill="#4a8c3a"/><rect x="6" y="2" width="5" height="5" fill="#ddd"/><rect x="11" y="2" width="5" height="5" fill="#ddd"/><rect x="11" y="8" width="5" height="5" fill="#ddd"/></svg>
<div class="a" style="left:1705px;top:1226px;width:1px;height:20px;background:#222"></div>
<div class="a" style="left:1805px;top:1226px;width:1px;height:20px;background:#222"></div>
<div class="a" style="left:1780px;top:1226px;width:1px;height:20px;background:#222"></div>
<svg style="left:1688px;top:1250px" width="16" height="14" viewBox="0 0 16 14"><path d="M1 1v12M3 7l4-4v8zM9 7l4-4v8zM15 1v12" stroke="#ddd" fill="none" stroke-width="1.2"/></svg>
<div class="a" style="left:1713px;top:1248px;width:62px;height:19px;background:#4a4a4a;border:2px solid #1c1c1c;border-right:none;border-bottom:none"></div>
<div class="t" style="left:1717px;top:1252px;font-size:12px;color:#d8d8d8">0</div>
<svg style="left:1776px;top:1250px" width="12" height="16" viewBox="0 0 12 16"><path d="M3 6l3-4 3 4zM3 10l3 4 3-4z" fill="#bbb"/></svg>
<svg style="left:1794px;top:1249px" width="18" height="18" viewBox="0 0 18 18"><rect x="1" y="1" width="12" height="12" fill="#eee" stroke="#333"/><rect x="3" y="3" width="8" height="3" fill="#3a6fc8"/><circle cx="13" cy="13" r="4" fill="#fff" stroke="#333"/></svg>
<svg style="left:1818px;top:1249px" width="18" height="18" viewBox="0 0 18 18"><path d="M2 2l14 7-14 7z" fill="none" stroke="#ddd" stroke-width="1.2"/></svg>
<svg style="left:1842px;top:1249px" width="18" height="18" viewBox="0 0 18 18"><path d="M4 16c-3-3-4-6-3-8l3 2V3a1 1 0 0 1 2 0v5-7a1 1 0 0 1 2 0v7-6a1 1 0 0 1 2 0v6-5a1 1 0 0 1 2 0v9c0 3-2 5-4 6z" fill="#f4f4f4" stroke="#333" stroke-width=".6"/></svg>
<svg style="left:1865px;top:1249px" width="18" height="18" viewBox="0 0 18 18"><ellipse cx="9" cy="9" rx="8" ry="3" fill="none" stroke="#e02020" stroke-width="1.6"/><circle cx="9" cy="9" r="4.5" fill="#1a1ab0" stroke="#fff"/></svg>
<svg style="left:1888px;top:1249px" width="18" height="18" viewBox="0 0 18 18"><rect x="1" y="1" width="15" height="15" fill="none" stroke="#ddd"/><path d="M4 4l8 8M4 4v5M4 4h5" stroke="#fff" stroke-width="1.5" fill="none"/></svg>
  <!-- taskbar -->
  <div class="a" style="left:0;top:1266px;width:1920px;height:40px;background:linear-gradient(180deg,#111 0px,#111 1px,#8fa2b4 1px,#8fa2b4 2px,#34495e 2px,#3a5a7a 5px,#3f6f99 8px,#3d6b95 12px,#1e5585 15px,#1f5f96 18px,#2274b6 24px,#2785cc 34px,#2886ce 40px)"></div>
  <div class="a" style="left:1375px;top:1268px;width:70px;height:38px;background:linear-gradient(118deg,transparent 35%,rgba(190,220,250,.6) 50%,transparent 65%);filter:blur(1.5px)"></div>
  <div class="a" style="left:1250px;top:1268px;width:670px;height:38px;background:linear-gradient(90deg,rgba(10,30,90,0) 0px,rgba(10,30,90,.35) 120px,rgba(10,30,90,.45) 300px,rgba(10,30,90,.5) 670px)"></div>
  <!-- start orb -->
  <svg style="left:8px;top:1267px" width="38" height="38" viewBox="0 0 38 38"><defs><radialGradient id="orb" cx="50%" cy="85%" r="70%"><stop offset="0" stop-color="#18d8f8"/><stop offset=".45" stop-color="#1470b8"/><stop offset="1" stop-color="#0c3c70"/></radialGradient><linearGradient id="gls" x1="0" y1="0" x2="0" y2="1"><stop offset="0" stop-color="#fff" stop-opacity=".7"/><stop offset="1" stop-color="#fff" stop-opacity=".05"/></linearGradient></defs><circle cx="19" cy="19" r="18" fill="url(#orb)" stroke="#6f9fc8" stroke-width="1"/><ellipse cx="19" cy="12" rx="14" ry="9" fill="url(#gls)"/><path d="M10 9l7 1-1 8-7-1z" fill="#f05a1a"/><path d="M19 10l8 1-1 8-8-1z" fill="#7cc040"/><path d="M9 19l7 1-1 8-7-1z" fill="#2aa0e8"/><path d="M18 20l8 1-1 8-8-1z" fill="#ffc020"/></svg>
  <!-- IE -->
  <svg style="left:73px;top:1270px" width="30" height="32" viewBox="0 0 30 32"><path d="M5 17a10 10 0 1 1 19 3H10a5 5 0 0 0 10 1h4a10 10 0 0 1-19-4zm5-1h9a4.5 4.5 0 0 0-9 0z" fill="#2aa8e8" stroke="#0a5ab0" stroke-width=".8"/><path d="M2 28C-2 20 20 2 28 4c4 2-2 9-5 11" fill="none" stroke="#f0c020" stroke-width="2.5"/></svg>
  <!-- WMP -->
  <svg style="left:134px;top:1272px" width="28" height="28" viewBox="0 0 28 28"><rect x="6" y="2" width="20" height="24" rx="3" fill="#a8cdea" opacity=".8"/><circle cx="12" cy="14" r="9.5" fill="#f07820" stroke="#fff" stroke-width="1.5"/><path d="M9 9l8 5-8 5z" fill="#fff"/></svg>
  <!-- framed buttons -->
  <div class="a" style="left:184px;top:1268px;width:58px;height:38px;border:1px solid rgba(20,40,70,.7);border-radius:3px;background:linear-gradient(180deg,rgba(255,255,255,.45),rgba(255,255,255,.15) 45%,rgba(255,255,255,.08));box-shadow:inset 0 0 0 1px rgba(255,255,255,.35)"></div>
  <div class="a" style="left:246px;top:1268px;width:58px;height:38px;border:1px solid rgba(20,40,70,.7);border-radius:3px;background:linear-gradient(180deg,rgba(255,255,255,.75),rgba(255,255,255,.35) 45%,rgba(255,255,255,.25));box-shadow:inset 0 0 0 1px rgba(255,255,255,.5)"></div>
  <div class="a" style="left:308px;top:1268px;width:58px;height:38px;border:1px solid rgba(20,40,70,.7);border-radius:3px;background:linear-gradient(180deg,rgba(255,255,255,.45),rgba(255,255,255,.15) 45%,rgba(255,255,255,.08));box-shadow:inset 0 0 0 1px rgba(255,255,255,.35)"></div>
  <div class="a" style="left:370px;top:1268px;width:58px;height:38px;border:1px solid rgba(20,40,70,.7);border-radius:3px;background:linear-gradient(180deg,rgba(255,255,255,.45),rgba(255,255,255,.15) 45%,rgba(255,255,255,.08));box-shadow:inset 0 0 0 1px rgba(255,255,255,.35)"></div>
  <div class="a" style="left:556px;top:1268px;width:58px;height:38px;border:1px solid rgba(20,40,70,.7);border-radius:3px;background:linear-gradient(180deg,rgba(255,255,255,.45),rgba(255,255,255,.15) 45%,rgba(255,255,255,.08));box-shadow:inset 0 0 0 1px rgba(255,255,255,.35)"></div>
  <div class="a" style="left:618px;top:1268px;width:58px;height:38px;border:1px solid rgba(20,40,70,.7);border-radius:3px;background:linear-gradient(180deg,rgba(255,255,255,.45),rgba(255,255,255,.15) 45%,rgba(255,255,255,.08));box-shadow:inset 0 0 0 1px rgba(255,255,255,.35)"></div>
  <!-- explorer -->
  <svg style="left:198px;top:1273px" width="30" height="30" viewBox="0 0 30 30"><path d="M1 5h10l2 2h16v21H1z" fill="#f2d27a"/><rect x="3" y="3" width="5" height="3" fill="#32a840"/><rect x="11" y="5" width="5" height="3" fill="#e03a2a"/><rect x="19" y="7" width="5" height="3" fill="#2a8ae0"/><path d="M1 12h28v16H1z" fill="#fbe6a8"/><path d="M6 20h18v8h-3v-5H9v5H6z" fill="#8ec8f0"/></svg>
  <!-- 3ds max -->
  <svg style="left:260px;top:1270px" width="32" height="34" viewBox="0 0 32 34"><rect x="0" y="0" width="32" height="32" fill="#2a9a98"/><rect x="0" y="0" width="32" height="32" fill="url(#mxg)"/><defs><linearGradient id="mxg" x1="0" x2="1"><stop offset="0" stop-color="#1c7d7a"/><stop offset="1" stop-color="#6cd0c8"/></linearGradient></defs><polygon points="6,3 20,3 28,13 20,23 6,23 14,13" fill="#0b3c3c"/><polygon points="6,3 14,13 6,23" fill="#127070"/><text x="7" y="31" font-size="7" font-weight="bold" fill="#fff" font-family="Liberation Sans">MXD</text></svg>
  <!-- chrome -->
  <svg style="left:322px;top:1272px" width="30" height="30" viewBox="0 0 30 30"><circle cx="15" cy="15" r="14" fill="#e94535"/><path d="M15 15L27.1 22A14 14 0 0 1 8 27.1z" fill="#f8c820"/><path d="M15 15L8 27.1A14 14 0 0 1 2.9 8z" fill="#28a848"/><path d="M15 15H29A14 14 0 0 1 27.1 22z" fill="#f8c820"/><circle cx="15" cy="15" r="6.5" fill="#fff"/><circle cx="15" cy="15" r="5" fill="#4a8af0"/></svg>
  <!-- thunderbird -->
  <svg style="left:384px;top:1271px" width="32" height="32" viewBox="0 0 32 32"><circle cx="16" cy="16" r="14" fill="#2a5ab8"/><path d="M4 12c4-10 20-12 26 0-6-6-18-6-22 2z" fill="#6aa0e8"/><rect x="7" y="13" width="18" height="12" fill="#f0f0f0" stroke="#777" stroke-width=".6"/><path d="M7 13l9 7 9-7" fill="none" stroke="#888"/></svg>
  <!-- excel -->
  <svg style="left:446px;top:1271px" width="32" height="32" viewBox="0 0 32 32"><rect x="1" y="1" width="27" height="27" fill="#e8f4e8" stroke="#1e7a30"/><path d="M12 8h16v20H12z" fill="#fff"/><path d="M14 12h12M14 16h12M14 20h12M14 24h12" stroke="#6aa060"/><path d="M3 5h10l6 10-6 11H3l6-11z" fill="#1f8a3a"/><text x="5" y="21" font-size="13" font-weight="bold" fill="#fff" font-family="Liberation Sans">X</text></svg>
  <!-- openoffice -->
  <svg style="left:508px;top:1271px" width="32" height="32" viewBox="0 0 32 32"><circle cx="16" cy="16" r="15" fill="#1f85cf"/><path d="M4 21c6-4 12-1 13 3 3-4 8-5 12-3-5 0-9 2-12 5-2-4-7-5-13-5z" fill="#fff"/><path d="M13 12c3-2 6 0 7 2 2-2 4-2 6-1-3 0-5 1-6 3-1-2-4-3-7-4z" fill="#fff"/></svg>
  <!-- photoshop -->
  <svg style="left:570px;top:1271px" width="32" height="32" viewBox="0 0 32 32"><rect x="1" y="1" width="29" height="29" fill="#0a4aa0" stroke="#0a2a70"/><rect x="3" y="3" width="25" height="25" fill="#0d5cc0"/><text x="6" y="21" font-size="14" font-weight="bold" fill="#9cd6ff" font-family="Liberation Sans">Ps</text></svg>
  <!-- notepad -->
  <svg style="left:632px;top:1271px" width="32" height="32" viewBox="0 0 32 32"><path d="M10 3h16v26H4z" fill="#e8f4fa" stroke="#888" stroke-width=".8"/><path d="M4 29l6-26 4 8z" fill="#b8dcf0"/><path d="M12 2v3M16 2v3M20 2v3M24 2v3" stroke="#666"/><path d="M26 3v26" stroke="#c8b060" stroke-width="2"/></svg>
  <!-- tray -->
  <div class="t" style="left:1508px;top:1279px;font-size:12px;color:#fff">JP</div>
  <svg style="left:1528px;top:1275px" width="20" height="20" viewBox="0 0 20 20"><circle cx="8" cy="9" r="7" fill="#e81818"/><circle cx="6" cy="7" r="2" fill="#ff8080"/><rect x="14" y="0" width="2" height="12" fill="#222"/><circle cx="15" cy="16" r="3" fill="#333"/></svg>
  <div class="t" style="left:1557px;top:1276px;font-size:17px;color:#fff;font-weight:bold">A</div>
  <div class="t" style="left:1570px;top:1275px;font-size:17px;color:#fff">般</div>
  <svg style="left:1590px;top:1276px" width="18" height="18" viewBox="0 0 18 18"><path d="M1 8h16l-2 9H3z" fill="#f0b020"/><path d="M5 8l3-7 5 3-2 4" fill="#5ab0e8"/></svg>
  <svg style="left:1608px;top:1277px" width="18" height="16" viewBox="0 0 18 16"><rect x="1" y="5" width="16" height="10" fill="#e8b048"/><path d="M1 5l4-4h8l4 4" fill="#f0c870"/></svg>
  <svg style="left:1631px;top:1275px" width="20" height="20" viewBox="0 0 20 20"><circle cx="10" cy="10" r="9" fill="#1a3ac8" stroke="#fff" stroke-width="1.2"/><text x="6" y="15" font-size="13" font-weight="bold" fill="#fff" font-family="Liberation Sans">?</text></svg>
  <div class="t" style="left:1655px;top:1276px;font-size:8px;color:#fff;font-weight:bold;letter-spacing:.5px">CAPS</div>
  <div class="t" style="left:1655px;top:1288px;font-size:8px;color:#fff;font-weight:bold;letter-spacing:.5px">KANA</div>
  <svg style="left:1681px;top:1276px" width="10" height="24" viewBox="0 0 10 24"><rect x="1" y="3" width="6" height="4" fill="none" stroke="#fff"/><path d="M1 17h8l-4 4z" fill="#fff"/></svg>
  <svg style="left:1699px;top:1284px" width="10" height="6" viewBox="0 0 10 6"><path d="M0 6l5-6 5 6z" fill="#fff"/></svg>
  <div class="a" style="left:1720px;top:1278px;width:18px;height:18px;background:#e02020"></div>
  <svg style="left:1722px;top:1280px" width="14" height="14" viewBox="0 0 14 14"><path d="M2 12C3 4 9 2 11 6s-5 5-6 2" fill="none" stroke="#fff" stroke-width="2"/></svg>
  <svg style="left:1745px;top:1279px" width="16" height="16" viewBox="0 0 16 16"><path d="M2 1v15" stroke="#fff" stroke-width="1.5"/><path d="M3 2h6l1 2h5v6H9L8 8H3z" fill="#fff"/></svg>
  <svg style="left:1769px;top:1279px" width="18" height="16" viewBox="0 0 18 16"><rect x="6" y="3" width="11" height="9" fill="none" stroke="#fff" stroke-width="1.4"/><rect x="1" y="0" width="5" height="7" fill="none" stroke="#fff"/><path d="M11 12v3M7 15h8" stroke="#fff"/></svg>
  <svg style="left:1795px;top:1279px" width="14" height="16" viewBox="0 0 14 16"><path d="M1 5h3l4-4v14l-4-4H1z" fill="#fff"/><path d="M10 5c2 2 2 4 0 6" stroke="#fff" fill="none"/></svg>
  <div class="t" style="left:1840px;top:1271px;font-size:13px;color:#fff">15:15</div>
  <div class="t" style="left:1829px;top:1289px;font-size:13px;color:#fff">2016/11/07</div>
  <div class="a" style="left:1906px;top:1268px;width:14px;height:38px;border:1px solid rgba(200,220,240,.6);border-right:none;background:linear-gradient(180deg,rgba(255,255,255,.25),rgba(255,255,255,.05))"></div>
</div>
</div></body></html>
